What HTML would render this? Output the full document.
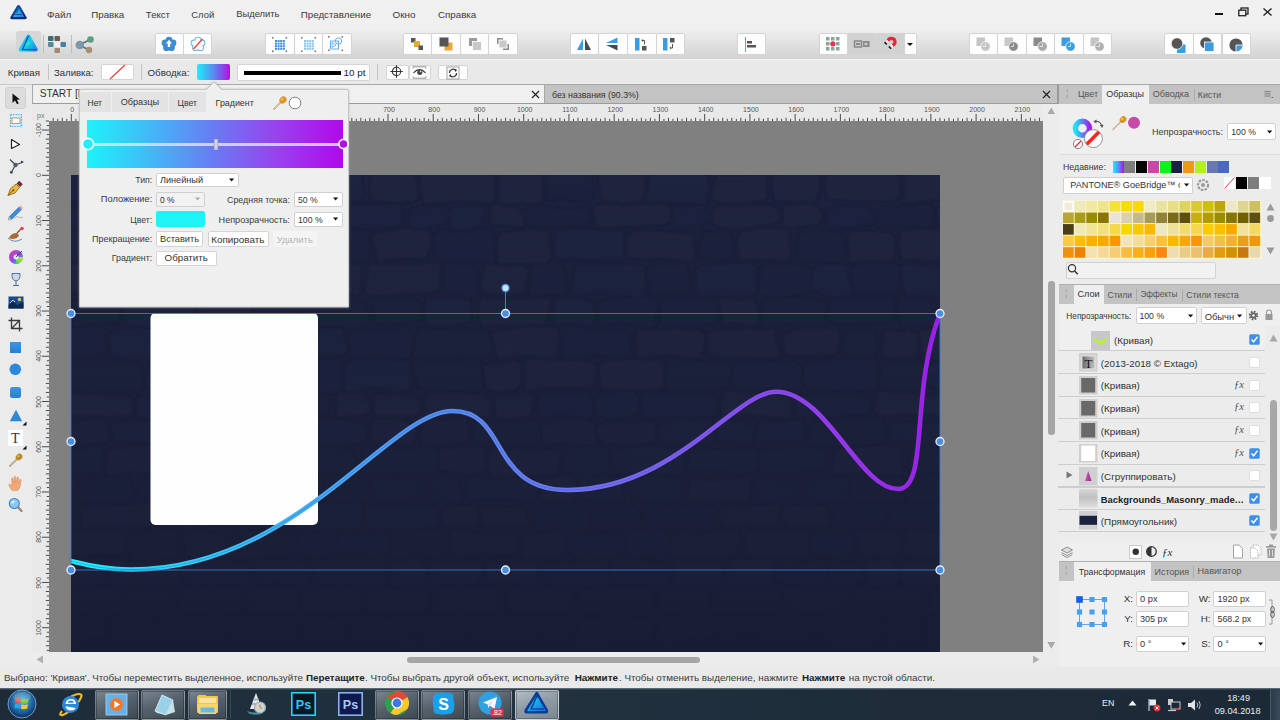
<!DOCTYPE html>
<html><head><meta charset="utf-8">
<style>
*{box-sizing:border-box;margin:0;padding:0}
html,body{width:1280px;height:720px;overflow:hidden;background:#ececec;font-family:"Liberation Sans",sans-serif;color:#333;font-size:9.8px}
body{position:relative}
.a{position:absolute}
svg.a{overflow:visible}
.t{position:absolute;white-space:nowrap;line-height:1}
.btn{position:absolute;background:#fcfcfc;border:1px solid #d4d4d4;border-radius:2px}
</style></head><body>
<div class="a" style="left:0px;top:0px;width:1280px;height:30px;background:#f0f0f0"></div>
<svg class="a" style="left:9px;top:4px;" width="19" height="17" viewBox="0 0 19 17"><defs><linearGradient id="lg0" x1="0" y1="0" x2="0" y2="1"><stop offset="0" stop-color="#1a4fa8"/><stop offset="1" stop-color="#0a2a78"/></linearGradient>
<linearGradient id="lg1" x1="0" y1="0" x2="1" y2="1"><stop offset="0" stop-color="#17d4e8"/><stop offset="1" stop-color="#2a7ee0"/></linearGradient></defs>
<path d="M8.2,1.5 Q9.5,0.5 10.8,1.6 L17.6,13.2 Q18.2,15 16.3,15.2 L2.7,15.2 Q0.8,15 1.4,13.2 Z" fill="url(#lg0)"/>
<path d="M9.5,4 L15.2,13 L3.8,13 Z" fill="url(#lg1)"/>
<path d="M9.6,5 L7.5,9 M5.5,10.5 L13,10.5" stroke="#0d3a8a" stroke-width="0.8"/></svg>
<div class="t" style="left:47.0px;top:9.6px;font-size:9.9px;color:#3a3a3a;">Файл</div>
<div class="t" style="left:91.2px;top:9.7px;font-size:9.77px;color:#3a3a3a;">Правка</div>
<div class="t" style="left:145.8px;top:9.8px;font-size:9.63px;color:#3a3a3a;">Текст</div>
<div class="t" style="left:191.2px;top:10.0px;font-size:9.46px;color:#3a3a3a;">Слой</div>
<div class="t" style="left:236.2px;top:10.1px;font-size:9.38px;color:#3a3a3a;">Выделить</div>
<div class="t" style="left:300.8px;top:9.7px;font-size:9.75px;color:#3a3a3a;">Представление</div>
<div class="t" style="left:392.5px;top:9.6px;font-size:9.9px;color:#3a3a3a;">Окно</div>
<div class="t" style="left:438.0px;top:9.7px;font-size:9.75px;color:#3a3a3a;">Справка</div>
<div class="a" style="left:1215px;top:13px;width:8px;height:2px;background:#111"></div>
<svg class="a" style="left:1238px;top:7px;" width="11" height="10" viewBox="0 0 11 10"><rect x="3" y="1" width="7" height="6" fill="none" stroke="#222" stroke-width="1.3"/><rect x="0.8" y="3.2" width="7" height="5.5" fill="#f0f0f0" stroke="#222" stroke-width="1.3"/></svg>
<svg class="a" style="left:1263px;top:8px;" width="9" height="8" viewBox="0 0 9 8"><path d="M0.5,0.5 L8.5,7.5 M8.5,0.5 L0.5,7.5" stroke="#222" stroke-width="1.4"/></svg>
<div class="a" style="left:0px;top:30px;width:1280px;height:29px;background:linear-gradient(#eeeeee,#e6e6e6 30%,#dadada 70%,#d2d2d2)"></div>
<div class="a" style="left:16px;top:31px;width:25px;height:25px;background:#d6d6d6;border-radius:3px"></div>
<svg class="a" style="left:18px;top:34px;" width="21" height="19" viewBox="0 0 21 19"><defs><linearGradient id="pg1" x1="0" y1="0" x2="1" y2="1"><stop offset="0" stop-color="#2a8ff0"/><stop offset="0.5" stop-color="#18d0f0"/><stop offset="1" stop-color="#1a70e0"/></linearGradient></defs>
<path d="M9,1 Q10.5,0 12,1.2 L19.5,14.5 Q20.5,17.5 17.5,17.5 L3,17.5 Q0,17.5 1.2,14.5 Z" fill="url(#pg1)"/>
<path d="M10.5,2 L4.5,15.5 L18,15.5" fill="none" stroke="#0b4aa0" stroke-width="1.1"/>
<path d="M7,11 L11,7 L11.5,11 Z" fill="#3af0a0" opacity="0.8"/></svg>
<div class="a" style="left:43px;top:35px;width:1px;height:18px;background:#bdbdbd"></div>
<svg class="a" style="left:47px;top:35px;" width="20" height="18" viewBox="0 0 20 18"><rect x="1" y="1" width="5.5" height="5" fill="#3f6b78" rx="1"/><rect x="7.5" y="1" width="5.5" height="5" fill="#6b5a52" rx="1"/>
<rect x="1" y="7" width="5.5" height="5" fill="#5a8898" rx="1"/><rect x="7.5" y="7" width="5.5" height="5" fill="#f4eef4"/><rect x="13.5" y="7" width="5.5" height="5" fill="#4a7ea6" rx="1"/>
<rect x="7.5" y="13" width="5.5" height="5" fill="#a08a70" rx="1"/></svg>
<div class="a" style="left:71px;top:35px;width:1px;height:18px;background:#bdbdbd"></div>
<svg class="a" style="left:75px;top:35px;" width="20" height="19" viewBox="0 0 20 19"><path d="M4,10 L15.5,4.5 M4,10 L14,15" stroke="#5a6a70" stroke-width="1.6"/>
<circle cx="4.8" cy="10" r="4.3" fill="#7b98ae"/><circle cx="15.5" cy="4.5" r="3.3" fill="#5b9d86"/><circle cx="14" cy="15" r="3.2" fill="#a8906e"/></svg>
<div class="btn" style="left:155.0px;top:33px;width:29.2px;height:22px;background:#fdfdfd"></div>
<div class="btn" style="left:183.2px;top:33px;width:29.2px;height:22px;background:#fdfdfd"></div>
<svg class="a" style="left:160px;top:35px;" width="18" height="18" viewBox="0 0 18 18"><circle cx="9" cy="9.3" r="4.5" fill="#3d8bd0"/><circle cx="9.00" cy="5.10" r="3.4" fill="#3d8bd0"/><circle cx="12.99" cy="8.00" r="3.4" fill="#3d8bd0"/><circle cx="11.47" cy="12.70" r="3.4" fill="#3d8bd0"/><circle cx="6.53" cy="12.70" r="3.4" fill="#3d8bd0"/><circle cx="5.01" cy="8.00" r="3.4" fill="#3d8bd0"/><path d="M9,4.8 L12,8.5 L10.2,8.5 L10.2,12 L7.8,12 L7.8,8.5 L6,8.5 Z" fill="#fff"/></svg>
<svg class="a" style="left:188.5px;top:35px;" width="18" height="18" viewBox="0 0 18 18"><circle cx="9" cy="9.3" r="4.5" fill="#5aaae0"/><circle cx="9.00" cy="5.10" r="3.4" fill="#5aaae0"/><circle cx="12.99" cy="8.00" r="3.4" fill="#5aaae0"/><circle cx="11.47" cy="12.70" r="3.4" fill="#5aaae0"/><circle cx="6.53" cy="12.70" r="3.4" fill="#5aaae0"/><circle cx="5.01" cy="8.00" r="3.4" fill="#5aaae0"/><circle cx="9" cy="9.3" r="4.5" fill="#fdfdfd"/><circle cx="9.00" cy="5.10" r="2.5" fill="#fdfdfd"/><circle cx="12.99" cy="8.00" r="2.5" fill="#fdfdfd"/><circle cx="11.47" cy="12.70" r="2.5" fill="#fdfdfd"/><circle cx="6.53" cy="12.70" r="2.5" fill="#fdfdfd"/><circle cx="5.01" cy="8.00" r="2.5" fill="#fdfdfd"/><path d="M4.5,14 L13.5,4" stroke="#e8403a" stroke-width="1.3"/></svg>
<div class="btn" style="left:265.0px;top:33px;width:29.5px;height:22px;background:#fdfdfd"></div>
<div class="btn" style="left:293.5px;top:33px;width:29.5px;height:22px;background:#fdfdfd"></div>
<div class="btn" style="left:322.0px;top:33px;width:29.5px;height:22px;background:#fdfdfd"></div>
<svg class="a" style="left:271.0px;top:35.5px;" width="17" height="17" viewBox="0 0 17 17"><rect x="4.0" y="4.0" width="2" height="2" fill="#3d8ee0"/><rect x="4.0" y="6.6" width="2" height="2" fill="#3d8ee0"/><rect x="4.0" y="9.2" width="2" height="2" fill="#3d8ee0"/><rect x="4.0" y="11.8" width="2" height="2" fill="#3d8ee0"/><rect x="6.6" y="4.0" width="2" height="2" fill="#3d8ee0"/><rect x="6.6" y="6.6" width="2" height="2" fill="#3d8ee0"/><rect x="6.6" y="9.2" width="2" height="2" fill="#3d8ee0"/><rect x="6.6" y="11.8" width="2" height="2" fill="#3d8ee0"/><rect x="9.2" y="4.0" width="2" height="2" fill="#3d8ee0"/><rect x="9.2" y="6.6" width="2" height="2" fill="#3d8ee0"/><rect x="9.2" y="9.2" width="2" height="2" fill="#3d8ee0"/><rect x="9.2" y="11.8" width="2" height="2" fill="#3d8ee0"/><rect x="11.8" y="4.0" width="2" height="2" fill="#3d8ee0"/><rect x="11.8" y="6.6" width="2" height="2" fill="#3d8ee0"/><rect x="11.8" y="9.2" width="2" height="2" fill="#3d8ee0"/><rect x="11.8" y="11.8" width="2" height="2" fill="#3d8ee0"/><rect x="1" y="1" width="1.6" height="1.6" fill="#777"/><rect x="14.5" y="1" width="1.6" height="1.6" fill="#777"/><rect x="1" y="14.5" width="1.6" height="1.6" fill="#777"/><rect x="14.5" y="14.5" width="1.6" height="1.6" fill="#777"/></svg>
<svg class="a" style="left:299.5px;top:35.5px;" width="17" height="17" viewBox="0 0 17 17"><rect x="4.0" y="4.0" width="2" height="2" fill="#8cc4f0"/><rect x="4.0" y="6.6" width="2" height="2" fill="#8cc4f0"/><rect x="4.0" y="9.2" width="2" height="2" fill="#8cc4f0"/><rect x="4.0" y="11.8" width="2" height="2" fill="#8cc4f0"/><rect x="6.6" y="4.0" width="2" height="2" fill="#8cc4f0"/><rect x="6.6" y="6.6" width="2" height="2" fill="#8cc4f0"/><rect x="6.6" y="9.2" width="2" height="2" fill="#8cc4f0"/><rect x="6.6" y="11.8" width="2" height="2" fill="#8cc4f0"/><rect x="9.2" y="4.0" width="2" height="2" fill="#8cc4f0"/><rect x="9.2" y="6.6" width="2" height="2" fill="#8cc4f0"/><rect x="9.2" y="9.2" width="2" height="2" fill="#8cc4f0"/><rect x="9.2" y="11.8" width="2" height="2" fill="#8cc4f0"/><rect x="11.8" y="4.0" width="2" height="2" fill="#8cc4f0"/><rect x="11.8" y="6.6" width="2" height="2" fill="#8cc4f0"/><rect x="11.8" y="9.2" width="2" height="2" fill="#8cc4f0"/><rect x="11.8" y="11.8" width="2" height="2" fill="#8cc4f0"/><rect x="1" y="1" width="1.6" height="1.6" fill="#777"/><rect x="14.5" y="1" width="1.6" height="1.6" fill="#777"/><rect x="1" y="14.5" width="1.6" height="1.6" fill="#777"/><rect x="14.5" y="14.5" width="1.6" height="1.6" fill="#777"/></svg>
<svg class="a" style="left:327px;top:35px;" width="18" height="18" viewBox="0 0 18 18"><rect x="1" y="1" width="1.6" height="1.6" fill="#777"/><rect x="14.5" y="1" width="1.6" height="1.6" fill="#777"/><rect x="1" y="14.5" width="1.6" height="1.6" fill="#777"/><rect x="14.5" y="14.5" width="1.6" height="1.6" fill="#777"/>
<rect x="3.5" y="6" width="8" height="8" fill="none" stroke="#6aaee8" stroke-width="1"/><circle cx="11.5" cy="6" r="3.2" fill="none" stroke="#6aaee8" stroke-width="1"/><path d="M5,7.5 L9,10 L5,12.5 Z" fill="none" stroke="#6aaee8" stroke-width="0.9"/></svg>
<div class="btn" style="left:402.6px;top:33px;width:29.6px;height:22px;background:#fdfdfd"></div>
<div class="btn" style="left:431.2px;top:33px;width:29.6px;height:22px;background:#fdfdfd"></div>
<div class="btn" style="left:459.8px;top:33px;width:29.6px;height:22px;background:#fdfdfd"></div>
<div class="btn" style="left:488.4px;top:33px;width:29.6px;height:22px;background:#fdfdfd"></div>
<svg class="a" style="left:408px;top:35px;" width="18" height="18" viewBox="0 0 18 18"><rect x="3" y="3" width="4.5" height="4.5" fill="#555"/><rect x="6" y="6" width="6" height="6" fill="#e8a838"/><rect x="10.5" y="10.5" width="4.5" height="4.5" fill="#555"/></svg>
<svg class="a" style="left:437px;top:35px;" width="18" height="18" viewBox="0 0 18 18"><rect x="7.5" y="7.5" width="8" height="8" fill="#e8a838"/><rect x="2.5" y="2.5" width="9" height="9" fill="#555"/></svg>
<svg class="a" style="left:466px;top:35px;" width="18" height="18" viewBox="0 0 18 18"><rect x="3" y="3" width="8" height="8" fill="#9a9a9a"/><rect x="6.5" y="6.5" width="9" height="9" fill="#c8c8c8" stroke="#fff" stroke-width="0.8"/></svg>
<svg class="a" style="left:494px;top:35px;" width="18" height="18" viewBox="0 0 18 18"><path d="M3,3 L9,3 L9,4.5 L4.5,4.5 L4.5,9 L3,9 Z" fill="#8a8a8a"/><path d="M15,15 L9,15 L9,13.5 L13.5,13.5 L13.5,9 L15,9 Z" fill="#8a8a8a"/><rect x="5.5" y="5.5" width="7" height="7" fill="#c8c8c8"/></svg>
<div class="btn" style="left:569.6px;top:33px;width:29.7px;height:22px;background:#fdfdfd"></div>
<div class="btn" style="left:598.3px;top:33px;width:29.7px;height:22px;background:#fdfdfd"></div>
<div class="btn" style="left:627.0px;top:33px;width:29.7px;height:22px;background:#fdfdfd"></div>
<div class="btn" style="left:655.6px;top:33px;width:29.7px;height:22px;background:#fdfdfd"></div>
<svg class="a" style="left:575px;top:35px;" width="18" height="18" viewBox="0 0 18 18"><path d="M8,3.5 L8,15 L2,15 Z" fill="#3d9be0"/><path d="M10,3.5 L10,15 L16,15 Z" fill="#4a4a4a"/></svg>
<svg class="a" style="left:603px;top:35px;" width="18" height="18" viewBox="0 0 18 18"><path d="M14.5,2.5 L14.5,8 L3,8 Z" fill="#3d9be0"/><path d="M14.5,15.5 L14.5,10 L3,10 Z" fill="#4a4a4a"/></svg>
<svg class="a" style="left:632px;top:35px;" width="18" height="18" viewBox="0 0 18 18"><rect x="3" y="3" width="4.5" height="12.5" fill="#3d9be0"/><rect x="10" y="11" width="4.5" height="4.5" fill="#555"/><path d="M12.5,9.5 L12.5,5.5 L10,5.5 M11,4.3 L9.8,5.5 L11,6.7" fill="none" stroke="#444" stroke-width="0.9"/></svg>
<svg class="a" style="left:660px;top:35px;" width="18" height="18" viewBox="0 0 18 18"><rect x="3" y="3" width="4.5" height="12.5" fill="#3d9be0"/><rect x="10" y="3" width="4.5" height="4.5" fill="#555"/><path d="M12.5,9 L12.5,13 L10,13 M11,11.8 L9.8,13 L11,14.2" fill="none" stroke="#444" stroke-width="0.9"/></svg>
<div class="btn" style="left:736.7px;top:33px;width:29.6px;height:22px;background:#fdfdfd"></div>
<svg class="a" style="left:742px;top:35px;" width="18" height="18" viewBox="0 0 18 18"><rect x="3" y="2" width="1" height="15" fill="#5aa8e8"/><rect x="5" y="6" width="5" height="2.5" fill="#555"/><rect x="5" y="10" width="9" height="2.5" fill="#555"/></svg>
<div class="btn" style="left:818.7px;top:33px;width:29.7px;height:22px;background:#fdfdfd"></div>
<div class="btn" style="left:847.4px;top:33px;width:29.7px;height:22px;background:#d2d2d2"></div>
<div class="btn" style="left:876.1px;top:33px;width:29.7px;height:22px;background:#d2d2d2"></div>
<div class="btn" style="left:904px;top:33px;width:12.5px;height:22px"></div>
<svg class="a" style="left:906px;top:42px;" width="8" height="5" viewBox="0 0 8 5"><path d="M1,1 L7,1 L4,4 Z" fill="#111"/></svg>
<svg class="a" style="left:824px;top:35px;" width="18" height="18" viewBox="0 0 18 18"><rect x="2" y="2" width="3.5" height="3.5" fill="#8aa898"/><rect x="2" y="7" width="3.5" height="3.5" fill="#8aa898"/><rect x="2" y="12" width="3.5" height="3.5" fill="#8aa898"/><rect x="7" y="2" width="3.5" height="3.5" fill="#8aa898"/><rect x="7" y="7" width="3.5" height="3.5" fill="#8aa898"/><rect x="7" y="12" width="3.5" height="3.5" fill="#8aa898"/><rect x="12" y="2" width="3.5" height="3.5" fill="#8aa898"/><rect x="12" y="7" width="3.5" height="3.5" fill="#8aa898"/><rect x="12" y="12" width="3.5" height="3.5" fill="#8aa898"/><circle cx="8.8" cy="8.8" r="2.6" fill="#e8305a"/></svg>
<svg class="a" style="left:853px;top:35px;" width="18" height="18" viewBox="0 0 18 18"><rect x="1.5" y="6" width="7" height="6" fill="none" stroke="#888" stroke-width="1.5"/><rect x="10" y="6" width="6.5" height="6" fill="#888"/><rect x="3" y="8" width="4" height="2" fill="#888"/><rect x="11.5" y="7.8" width="3" height="2.4" fill="#ccc"/></svg>
<svg class="a" style="left:881px;top:35px;" width="18" height="18" viewBox="0 0 18 18"><path d="M11.2,10.4 A3.6,3.6 0 1 0 6.9,6.1" stroke="#e02a3a" stroke-width="3.2" fill="none"/><path d="M11.4,10.2 L9.6,12 M7.1,5.9 L5.3,7.7" stroke="#f0f0f0" stroke-width="3.2"/><path d="M9.6,12 L8.4,13.2 M5.3,7.7 L4.1,8.9" stroke="#222" stroke-width="3.2"/></svg>
<div class="btn" style="left:968.5px;top:33px;width:29.5px;height:22px;background:#fdfdfd"></div>
<div class="btn" style="left:997.0px;top:33px;width:29.5px;height:22px;background:#fdfdfd"></div>
<div class="btn" style="left:1025.5px;top:33px;width:29.5px;height:22px;background:#fdfdfd"></div>
<div class="btn" style="left:1054.0px;top:33px;width:29.5px;height:22px;background:#fdfdfd"></div>
<div class="btn" style="left:1082.5px;top:33px;width:29.5px;height:22px;background:#fdfdfd"></div>
<svg class="a" style="left:973.5px;top:35px;" width="18" height="18" viewBox="0 0 18 18"><rect x="2.5" y="2.5" width="8.5" height="8.5" fill="#c4c4c4"/><circle cx="11.5" cy="11.5" r="4.8" fill="#c4c4c4" stroke="#fff" stroke-width="0.8"/><path d="M11.5,8.5 L11.5,11.5 L8.8,11.5" stroke="#fff" stroke-width="0.7" fill="none"/></svg>
<svg class="a" style="left:1002.0px;top:35px;" width="18" height="18" viewBox="0 0 18 18"><rect x="2.5" y="2.5" width="8.5" height="8.5" fill="#c8c8c8"/><circle cx="11.5" cy="11.5" r="4.8" fill="#8a8a8a" stroke="#fff" stroke-width="0.8"/><path d="M11.5,8.5 L11.5,11.5 L8.8,11.5" stroke="#fff" stroke-width="0.7" fill="none"/></svg>
<svg class="a" style="left:1030.5px;top:35px;" width="18" height="18" viewBox="0 0 18 18"><rect x="2.5" y="2.5" width="8.5" height="8.5" fill="#8a8a8a"/><circle cx="11.5" cy="11.5" r="4.8" fill="#a8a8a8" stroke="#fff" stroke-width="0.8"/><path d="M11.5,8.5 L11.5,11.5 L8.8,11.5" stroke="#fff" stroke-width="0.7" fill="none"/></svg>
<svg class="a" style="left:1059.0px;top:35px;" width="18" height="18" viewBox="0 0 18 18"><rect x="2.5" y="2.5" width="8.5" height="8.5" fill="#3d9be0"/><circle cx="11.5" cy="11.5" r="4.8" fill="#3d9be0" stroke="#fff" stroke-width="0.8"/><path d="M11.5,8.5 L11.5,11.5 L8.8,11.5" stroke="#fff" stroke-width="0.7" fill="none"/></svg>
<svg class="a" style="left:1087.5px;top:35px;" width="18" height="18" viewBox="0 0 18 18"><rect x="2.5" y="2.5" width="8.5" height="8.5" fill="#c4c4c4"/><circle cx="11.5" cy="11.5" r="4.8" fill="#b0b0b0" stroke="#fff" stroke-width="0.8"/><path d="M11.5,8.5 L11.5,11.5 L8.8,11.5" stroke="#fff" stroke-width="0.7" fill="none"/></svg>
<div class="btn" style="left:1164.4px;top:33px;width:29.5px;height:22px;background:#fdfdfd"></div>
<div class="btn" style="left:1192.9px;top:33px;width:29.5px;height:22px;background:#fdfdfd"></div>
<div class="btn" style="left:1221.5px;top:33px;width:29.5px;height:22px;background:#fdfdfd"></div>
<svg class="a" style="left:1169px;top:35px;" width="20" height="20" viewBox="0 0 20 20"><rect x="8" y="9.5" width="8.5" height="8.5" fill="#3d9be0"/><circle cx="8" cy="8.5" r="5.8" fill="#555" stroke="#fff" stroke-width="0.8"/></svg>
<svg class="a" style="left:1198px;top:35px;" width="20" height="20" viewBox="0 0 20 20"><circle cx="8" cy="8" r="5.8" fill="#555"/><rect x="6.5" y="7" width="9.5" height="9.5" fill="#3d9be0" stroke="#fff" stroke-width="0.8"/></svg>
<svg class="a" style="left:1227px;top:35px;" width="20" height="20" viewBox="0 0 20 20"><circle cx="9" cy="10" r="6.6" fill="#555"/><path d="M9,10 L16,10 A6.8,6.8 0 0 1 9,16.8 Z" fill="#3d9be0" stroke="#fff" stroke-width="0.8"/></svg>
<div class="a" style="left:0px;top:59px;width:1280px;height:26px;background:#e9e9e9;border-top:1px solid #f2f2f2"></div>
<div class="a" style="left:0px;top:84px;width:1280px;height:1px;background:#c8c8c8"></div>
<div class="t" style="left:7.8px;top:67.8px;font-size:9.73px;color:#333;">Кривая</div>
<div class="a" style="left:48px;top:64px;width:1px;height:16px;background:#c4c4c4"></div>
<div class="t" style="left:54.0px;top:67.9px;font-size:9.57px;color:#333;">Заливка:</div>
<div class="btn" style="left:101px;top:64px;width:33px;height:16px;background:#fff"></div>
<svg class="a" style="left:102px;top:65px;" width="31" height="14" viewBox="0 0 31 14"><path d="M8,14 L23,0" stroke="#e8403a" stroke-width="1.2"/></svg>
<div class="a" style="left:141px;top:64px;width:1px;height:16px;background:#c4c4c4"></div>
<div class="t" style="left:147.5px;top:67.7px;font-size:9.81px;color:#333;">Обводка:</div>
<div class="a" style="left:197px;top:64px;width:33px;height:16px;background:linear-gradient(90deg,#1cf0f8,#6080f0 55%,#b010e8);border-radius:2px"></div>
<div class="btn" style="left:237px;top:64px;width:133px;height:17px;background:#fff"></div>
<div class="a" style="left:244px;top:70.5px;width:97px;height:4px;background:#000"></div>
<div class="t" style="left:343.6px;top:68.1px;font-size:9.9px;color:#222;">10 pt</div>
<div class="a" style="left:377px;top:64px;width:1px;height:16px;background:#c4c4c4"></div>
<div class="btn" style="left:385.6px;top:64.5px;width:23.5px;height:15.5px"></div>
<div class="btn" style="left:408.6px;top:64.5px;width:22.5px;height:15.5px"></div>
<svg class="a" style="left:390px;top:65px;" width="14" height="14" viewBox="0 0 14 14"><circle cx="6.5" cy="6.5" r="4.2" fill="none" stroke="#333" stroke-width="1.05"/><path d="M6.5,0.3 L6.5,12.7 M0.3,6.5 L12.7,6.5" stroke="#333" stroke-width="1.05"/></svg>
<svg class="a" style="left:412px;top:65.5px;" width="15" height="14" viewBox="0 0 15 14"><path d="M1,2.5 L1,0.8 L14,0.8 L14,2.5 M1,10.5 L1,12.2 L14,12.2 L14,10.5" fill="none" stroke="#888" stroke-width="0.9"/><path d="M1.5,6.8 Q7.5,0.5 13.5,6.8" fill="none" stroke="#333" stroke-width="1.1"/><circle cx="7.8" cy="6.3" r="2.6" fill="#444"/><circle cx="8.6" cy="5.4" r="0.9" fill="#ddd"/></svg>
<div class="btn" style="left:437.9px;top:64.5px;width:30.5px;height:15.5px"></div>
<svg class="a" style="left:446px;top:66px;" width="14" height="14" viewBox="0 0 14 14"><rect x="1" y="1" width="12" height="12" fill="none" stroke="#999" stroke-width="0.9"/><path d="M3.5,7 A3.5,3.5 0 0 1 9.8,4.6" fill="none" stroke="#333" stroke-width="1.1"/><path d="M10.5,7 A3.5,3.5 0 0 1 4.2,9.4" fill="none" stroke="#333" stroke-width="1.1"/><path d="M8.3,2.8 L11,3.8 L9.6,6.2 Z M5.7,11.2 L3,10.2 L4.4,7.8 Z" fill="#333"/></svg>
<div class="a" style="left:32px;top:84px;width:1027px;height:20px;background:#c3c3c3;border-top:1px solid #a8a8a8;border-bottom:1px solid #9c9c9c"></div>
<div class="a" style="left:32px;top:84px;width:513px;height:20px;background:#f0f0f0;border:1px solid #a8a8a8;border-bottom:1px solid #9c9c9c"></div>
<div class="t" style="left:39.8px;top:89.4px;font-size:10.2px;color:#333;">START [И:</div>
<svg class="a" style="left:531px;top:90px;" width="9" height="9" viewBox="0 0 9 9"><path d="M1,1 L8,8 M8,1 L1,8" stroke="#222" stroke-width="1.15"/></svg>
<div class="t" style="left:552.0px;top:90.6px;font-size:8.77px;color:#333;">без названия (90.3%)</div>
<svg class="a" style="left:1042px;top:89.5px;" width="9" height="9" viewBox="0 0 9 9"><path d="M1,1 L8,8 M8,1 L1,8" stroke="#222" stroke-width="1.15"/></svg>
<div class="a" style="left:1057px;top:84px;width:2px;height:20px;background:#9a9a9a"></div>
<div class="a" style="left:32px;top:104px;width:1011px;height:17px;background:#e9e9e9"></div>
<div class="a" style="left:32px;top:121px;width:17px;height:531px;background:#e9e9e9"></div>
<div class="t" style="left:37.0px;top:111.6px;font-size:7px;color:#777;">px</div>
<svg class="a" style="left:49px;top:104px;" width="994" height="17" viewBox="0 0 994 17"><rect x="3.70" y="13.8" width="1" height="3.2" fill="#4a4a4a"/><rect x="8.23" y="14.8" width="1" height="2.2" fill="#4a4a4a"/><rect x="12.75" y="13.8" width="1" height="3.2" fill="#4a4a4a"/><rect x="17.28" y="14.8" width="1" height="2.2" fill="#4a4a4a"/><rect x="21.80" y="10.0" width="1" height="7" fill="#4a4a4a"/><rect x="26.32" y="14.8" width="1" height="2.2" fill="#4a4a4a"/><rect x="30.85" y="13.8" width="1" height="3.2" fill="#4a4a4a"/><rect x="35.37" y="14.8" width="1" height="2.2" fill="#4a4a4a"/><rect x="39.90" y="13.8" width="1" height="3.2" fill="#4a4a4a"/><rect x="44.42" y="14.8" width="1" height="2.2" fill="#4a4a4a"/><rect x="48.94" y="13.8" width="1" height="3.2" fill="#4a4a4a"/><rect x="53.47" y="14.8" width="1" height="2.2" fill="#4a4a4a"/><rect x="57.99" y="13.8" width="1" height="3.2" fill="#4a4a4a"/><rect x="62.52" y="14.8" width="1" height="2.2" fill="#4a4a4a"/><rect x="67.04" y="10.0" width="1" height="7" fill="#4a4a4a"/><rect x="71.56" y="14.8" width="1" height="2.2" fill="#4a4a4a"/><rect x="76.09" y="13.8" width="1" height="3.2" fill="#4a4a4a"/><rect x="80.61" y="14.8" width="1" height="2.2" fill="#4a4a4a"/><rect x="85.14" y="13.8" width="1" height="3.2" fill="#4a4a4a"/><rect x="89.66" y="14.8" width="1" height="2.2" fill="#4a4a4a"/><rect x="94.18" y="13.8" width="1" height="3.2" fill="#4a4a4a"/><rect x="98.71" y="14.8" width="1" height="2.2" fill="#4a4a4a"/><rect x="103.23" y="13.8" width="1" height="3.2" fill="#4a4a4a"/><rect x="107.76" y="14.8" width="1" height="2.2" fill="#4a4a4a"/><rect x="112.28" y="10.0" width="1" height="7" fill="#4a4a4a"/><rect x="116.80" y="14.8" width="1" height="2.2" fill="#4a4a4a"/><rect x="121.33" y="13.8" width="1" height="3.2" fill="#4a4a4a"/><rect x="125.85" y="14.8" width="1" height="2.2" fill="#4a4a4a"/><rect x="130.38" y="13.8" width="1" height="3.2" fill="#4a4a4a"/><rect x="134.90" y="14.8" width="1" height="2.2" fill="#4a4a4a"/><rect x="139.42" y="13.8" width="1" height="3.2" fill="#4a4a4a"/><rect x="143.95" y="14.8" width="1" height="2.2" fill="#4a4a4a"/><rect x="148.47" y="13.8" width="1" height="3.2" fill="#4a4a4a"/><rect x="153.00" y="14.8" width="1" height="2.2" fill="#4a4a4a"/><rect x="157.52" y="10.0" width="1" height="7" fill="#4a4a4a"/><rect x="162.04" y="14.8" width="1" height="2.2" fill="#4a4a4a"/><rect x="166.57" y="13.8" width="1" height="3.2" fill="#4a4a4a"/><rect x="171.09" y="14.8" width="1" height="2.2" fill="#4a4a4a"/><rect x="175.62" y="13.8" width="1" height="3.2" fill="#4a4a4a"/><rect x="180.14" y="14.8" width="1" height="2.2" fill="#4a4a4a"/><rect x="184.66" y="13.8" width="1" height="3.2" fill="#4a4a4a"/><rect x="189.19" y="14.8" width="1" height="2.2" fill="#4a4a4a"/><rect x="193.71" y="13.8" width="1" height="3.2" fill="#4a4a4a"/><rect x="198.24" y="14.8" width="1" height="2.2" fill="#4a4a4a"/><rect x="202.76" y="10.0" width="1" height="7" fill="#4a4a4a"/><rect x="207.28" y="14.8" width="1" height="2.2" fill="#4a4a4a"/><rect x="211.81" y="13.8" width="1" height="3.2" fill="#4a4a4a"/><rect x="216.33" y="14.8" width="1" height="2.2" fill="#4a4a4a"/><rect x="220.86" y="13.8" width="1" height="3.2" fill="#4a4a4a"/><rect x="225.38" y="14.8" width="1" height="2.2" fill="#4a4a4a"/><rect x="229.90" y="13.8" width="1" height="3.2" fill="#4a4a4a"/><rect x="234.43" y="14.8" width="1" height="2.2" fill="#4a4a4a"/><rect x="238.95" y="13.8" width="1" height="3.2" fill="#4a4a4a"/><rect x="243.48" y="14.8" width="1" height="2.2" fill="#4a4a4a"/><rect x="248.00" y="10.0" width="1" height="7" fill="#4a4a4a"/><rect x="252.52" y="14.8" width="1" height="2.2" fill="#4a4a4a"/><rect x="257.05" y="13.8" width="1" height="3.2" fill="#4a4a4a"/><rect x="261.57" y="14.8" width="1" height="2.2" fill="#4a4a4a"/><rect x="266.10" y="13.8" width="1" height="3.2" fill="#4a4a4a"/><rect x="270.62" y="14.8" width="1" height="2.2" fill="#4a4a4a"/><rect x="275.14" y="13.8" width="1" height="3.2" fill="#4a4a4a"/><rect x="279.67" y="14.8" width="1" height="2.2" fill="#4a4a4a"/><rect x="284.19" y="13.8" width="1" height="3.2" fill="#4a4a4a"/><rect x="288.72" y="14.8" width="1" height="2.2" fill="#4a4a4a"/><rect x="293.24" y="10.0" width="1" height="7" fill="#4a4a4a"/><rect x="297.76" y="14.8" width="1" height="2.2" fill="#4a4a4a"/><rect x="302.29" y="13.8" width="1" height="3.2" fill="#4a4a4a"/><rect x="306.81" y="14.8" width="1" height="2.2" fill="#4a4a4a"/><rect x="311.34" y="13.8" width="1" height="3.2" fill="#4a4a4a"/><rect x="315.86" y="14.8" width="1" height="2.2" fill="#4a4a4a"/><rect x="320.38" y="13.8" width="1" height="3.2" fill="#4a4a4a"/><rect x="324.91" y="14.8" width="1" height="2.2" fill="#4a4a4a"/><rect x="329.43" y="13.8" width="1" height="3.2" fill="#4a4a4a"/><rect x="333.96" y="14.8" width="1" height="2.2" fill="#4a4a4a"/><rect x="338.48" y="10.0" width="1" height="7" fill="#4a4a4a"/><rect x="343.00" y="14.8" width="1" height="2.2" fill="#4a4a4a"/><rect x="347.53" y="13.8" width="1" height="3.2" fill="#4a4a4a"/><rect x="352.05" y="14.8" width="1" height="2.2" fill="#4a4a4a"/><rect x="356.58" y="13.8" width="1" height="3.2" fill="#4a4a4a"/><rect x="361.10" y="14.8" width="1" height="2.2" fill="#4a4a4a"/><rect x="365.62" y="13.8" width="1" height="3.2" fill="#4a4a4a"/><rect x="370.15" y="14.8" width="1" height="2.2" fill="#4a4a4a"/><rect x="374.67" y="13.8" width="1" height="3.2" fill="#4a4a4a"/><rect x="379.20" y="14.8" width="1" height="2.2" fill="#4a4a4a"/><rect x="383.72" y="10.0" width="1" height="7" fill="#4a4a4a"/><rect x="388.24" y="14.8" width="1" height="2.2" fill="#4a4a4a"/><rect x="392.77" y="13.8" width="1" height="3.2" fill="#4a4a4a"/><rect x="397.29" y="14.8" width="1" height="2.2" fill="#4a4a4a"/><rect x="401.82" y="13.8" width="1" height="3.2" fill="#4a4a4a"/><rect x="406.34" y="14.8" width="1" height="2.2" fill="#4a4a4a"/><rect x="410.86" y="13.8" width="1" height="3.2" fill="#4a4a4a"/><rect x="415.39" y="14.8" width="1" height="2.2" fill="#4a4a4a"/><rect x="419.91" y="13.8" width="1" height="3.2" fill="#4a4a4a"/><rect x="424.44" y="14.8" width="1" height="2.2" fill="#4a4a4a"/><rect x="428.96" y="10.0" width="1" height="7" fill="#4a4a4a"/><rect x="433.48" y="14.8" width="1" height="2.2" fill="#4a4a4a"/><rect x="438.01" y="13.8" width="1" height="3.2" fill="#4a4a4a"/><rect x="442.53" y="14.8" width="1" height="2.2" fill="#4a4a4a"/><rect x="447.06" y="13.8" width="1" height="3.2" fill="#4a4a4a"/><rect x="451.58" y="14.8" width="1" height="2.2" fill="#4a4a4a"/><rect x="456.10" y="13.8" width="1" height="3.2" fill="#4a4a4a"/><rect x="460.63" y="14.8" width="1" height="2.2" fill="#4a4a4a"/><rect x="465.15" y="13.8" width="1" height="3.2" fill="#4a4a4a"/><rect x="469.68" y="14.8" width="1" height="2.2" fill="#4a4a4a"/><rect x="474.20" y="10.0" width="1" height="7" fill="#4a4a4a"/><rect x="478.72" y="14.8" width="1" height="2.2" fill="#4a4a4a"/><rect x="483.25" y="13.8" width="1" height="3.2" fill="#4a4a4a"/><rect x="487.77" y="14.8" width="1" height="2.2" fill="#4a4a4a"/><rect x="492.30" y="13.8" width="1" height="3.2" fill="#4a4a4a"/><rect x="496.82" y="14.8" width="1" height="2.2" fill="#4a4a4a"/><rect x="501.34" y="13.8" width="1" height="3.2" fill="#4a4a4a"/><rect x="505.87" y="14.8" width="1" height="2.2" fill="#4a4a4a"/><rect x="510.39" y="13.8" width="1" height="3.2" fill="#4a4a4a"/><rect x="514.92" y="14.8" width="1" height="2.2" fill="#4a4a4a"/><rect x="519.44" y="10.0" width="1" height="7" fill="#4a4a4a"/><rect x="523.96" y="14.8" width="1" height="2.2" fill="#4a4a4a"/><rect x="528.49" y="13.8" width="1" height="3.2" fill="#4a4a4a"/><rect x="533.01" y="14.8" width="1" height="2.2" fill="#4a4a4a"/><rect x="537.54" y="13.8" width="1" height="3.2" fill="#4a4a4a"/><rect x="542.06" y="14.8" width="1" height="2.2" fill="#4a4a4a"/><rect x="546.58" y="13.8" width="1" height="3.2" fill="#4a4a4a"/><rect x="551.11" y="14.8" width="1" height="2.2" fill="#4a4a4a"/><rect x="555.63" y="13.8" width="1" height="3.2" fill="#4a4a4a"/><rect x="560.16" y="14.8" width="1" height="2.2" fill="#4a4a4a"/><rect x="564.68" y="10.0" width="1" height="7" fill="#4a4a4a"/><rect x="569.20" y="14.8" width="1" height="2.2" fill="#4a4a4a"/><rect x="573.73" y="13.8" width="1" height="3.2" fill="#4a4a4a"/><rect x="578.25" y="14.8" width="1" height="2.2" fill="#4a4a4a"/><rect x="582.78" y="13.8" width="1" height="3.2" fill="#4a4a4a"/><rect x="587.30" y="14.8" width="1" height="2.2" fill="#4a4a4a"/><rect x="591.82" y="13.8" width="1" height="3.2" fill="#4a4a4a"/><rect x="596.35" y="14.8" width="1" height="2.2" fill="#4a4a4a"/><rect x="600.87" y="13.8" width="1" height="3.2" fill="#4a4a4a"/><rect x="605.40" y="14.8" width="1" height="2.2" fill="#4a4a4a"/><rect x="609.92" y="10.0" width="1" height="7" fill="#4a4a4a"/><rect x="614.44" y="14.8" width="1" height="2.2" fill="#4a4a4a"/><rect x="618.97" y="13.8" width="1" height="3.2" fill="#4a4a4a"/><rect x="623.49" y="14.8" width="1" height="2.2" fill="#4a4a4a"/><rect x="628.02" y="13.8" width="1" height="3.2" fill="#4a4a4a"/><rect x="632.54" y="14.8" width="1" height="2.2" fill="#4a4a4a"/><rect x="637.06" y="13.8" width="1" height="3.2" fill="#4a4a4a"/><rect x="641.59" y="14.8" width="1" height="2.2" fill="#4a4a4a"/><rect x="646.11" y="13.8" width="1" height="3.2" fill="#4a4a4a"/><rect x="650.64" y="14.8" width="1" height="2.2" fill="#4a4a4a"/><rect x="655.16" y="10.0" width="1" height="7" fill="#4a4a4a"/><rect x="659.68" y="14.8" width="1" height="2.2" fill="#4a4a4a"/><rect x="664.21" y="13.8" width="1" height="3.2" fill="#4a4a4a"/><rect x="668.73" y="14.8" width="1" height="2.2" fill="#4a4a4a"/><rect x="673.26" y="13.8" width="1" height="3.2" fill="#4a4a4a"/><rect x="677.78" y="14.8" width="1" height="2.2" fill="#4a4a4a"/><rect x="682.30" y="13.8" width="1" height="3.2" fill="#4a4a4a"/><rect x="686.83" y="14.8" width="1" height="2.2" fill="#4a4a4a"/><rect x="691.35" y="13.8" width="1" height="3.2" fill="#4a4a4a"/><rect x="695.88" y="14.8" width="1" height="2.2" fill="#4a4a4a"/><rect x="700.40" y="10.0" width="1" height="7" fill="#4a4a4a"/><rect x="704.92" y="14.8" width="1" height="2.2" fill="#4a4a4a"/><rect x="709.45" y="13.8" width="1" height="3.2" fill="#4a4a4a"/><rect x="713.97" y="14.8" width="1" height="2.2" fill="#4a4a4a"/><rect x="718.50" y="13.8" width="1" height="3.2" fill="#4a4a4a"/><rect x="723.02" y="14.8" width="1" height="2.2" fill="#4a4a4a"/><rect x="727.54" y="13.8" width="1" height="3.2" fill="#4a4a4a"/><rect x="732.07" y="14.8" width="1" height="2.2" fill="#4a4a4a"/><rect x="736.59" y="13.8" width="1" height="3.2" fill="#4a4a4a"/><rect x="741.12" y="14.8" width="1" height="2.2" fill="#4a4a4a"/><rect x="745.64" y="10.0" width="1" height="7" fill="#4a4a4a"/><rect x="750.16" y="14.8" width="1" height="2.2" fill="#4a4a4a"/><rect x="754.69" y="13.8" width="1" height="3.2" fill="#4a4a4a"/><rect x="759.21" y="14.8" width="1" height="2.2" fill="#4a4a4a"/><rect x="763.74" y="13.8" width="1" height="3.2" fill="#4a4a4a"/><rect x="768.26" y="14.8" width="1" height="2.2" fill="#4a4a4a"/><rect x="772.78" y="13.8" width="1" height="3.2" fill="#4a4a4a"/><rect x="777.31" y="14.8" width="1" height="2.2" fill="#4a4a4a"/><rect x="781.83" y="13.8" width="1" height="3.2" fill="#4a4a4a"/><rect x="786.36" y="14.8" width="1" height="2.2" fill="#4a4a4a"/><rect x="790.88" y="10.0" width="1" height="7" fill="#4a4a4a"/><rect x="795.40" y="14.8" width="1" height="2.2" fill="#4a4a4a"/><rect x="799.93" y="13.8" width="1" height="3.2" fill="#4a4a4a"/><rect x="804.45" y="14.8" width="1" height="2.2" fill="#4a4a4a"/><rect x="808.98" y="13.8" width="1" height="3.2" fill="#4a4a4a"/><rect x="813.50" y="14.8" width="1" height="2.2" fill="#4a4a4a"/><rect x="818.02" y="13.8" width="1" height="3.2" fill="#4a4a4a"/><rect x="822.55" y="14.8" width="1" height="2.2" fill="#4a4a4a"/><rect x="827.07" y="13.8" width="1" height="3.2" fill="#4a4a4a"/><rect x="831.60" y="14.8" width="1" height="2.2" fill="#4a4a4a"/><rect x="836.12" y="10.0" width="1" height="7" fill="#4a4a4a"/><rect x="840.64" y="14.8" width="1" height="2.2" fill="#4a4a4a"/><rect x="845.17" y="13.8" width="1" height="3.2" fill="#4a4a4a"/><rect x="849.69" y="14.8" width="1" height="2.2" fill="#4a4a4a"/><rect x="854.22" y="13.8" width="1" height="3.2" fill="#4a4a4a"/><rect x="858.74" y="14.8" width="1" height="2.2" fill="#4a4a4a"/><rect x="863.26" y="13.8" width="1" height="3.2" fill="#4a4a4a"/><rect x="867.79" y="14.8" width="1" height="2.2" fill="#4a4a4a"/><rect x="872.31" y="13.8" width="1" height="3.2" fill="#4a4a4a"/><rect x="876.84" y="14.8" width="1" height="2.2" fill="#4a4a4a"/><rect x="881.36" y="10.0" width="1" height="7" fill="#4a4a4a"/><rect x="885.88" y="14.8" width="1" height="2.2" fill="#4a4a4a"/><rect x="890.41" y="13.8" width="1" height="3.2" fill="#4a4a4a"/><rect x="894.93" y="14.8" width="1" height="2.2" fill="#4a4a4a"/><rect x="899.46" y="13.8" width="1" height="3.2" fill="#4a4a4a"/><rect x="903.98" y="14.8" width="1" height="2.2" fill="#4a4a4a"/><rect x="908.50" y="13.8" width="1" height="3.2" fill="#4a4a4a"/><rect x="913.03" y="14.8" width="1" height="2.2" fill="#4a4a4a"/><rect x="917.55" y="13.8" width="1" height="3.2" fill="#4a4a4a"/><rect x="922.08" y="14.8" width="1" height="2.2" fill="#4a4a4a"/><rect x="926.60" y="10.0" width="1" height="7" fill="#4a4a4a"/><rect x="931.12" y="14.8" width="1" height="2.2" fill="#4a4a4a"/><rect x="935.65" y="13.8" width="1" height="3.2" fill="#4a4a4a"/><rect x="940.17" y="14.8" width="1" height="2.2" fill="#4a4a4a"/><rect x="944.70" y="13.8" width="1" height="3.2" fill="#4a4a4a"/><rect x="949.22" y="14.8" width="1" height="2.2" fill="#4a4a4a"/><rect x="953.74" y="13.8" width="1" height="3.2" fill="#4a4a4a"/><rect x="958.27" y="14.8" width="1" height="2.2" fill="#4a4a4a"/><rect x="962.79" y="13.8" width="1" height="3.2" fill="#4a4a4a"/><rect x="967.32" y="14.8" width="1" height="2.2" fill="#4a4a4a"/><rect x="971.84" y="10.0" width="1" height="7" fill="#4a4a4a"/><rect x="976.36" y="14.8" width="1" height="2.2" fill="#4a4a4a"/><rect x="980.89" y="13.8" width="1" height="3.2" fill="#4a4a4a"/><rect x="985.41" y="14.8" width="1" height="2.2" fill="#4a4a4a"/><rect x="989.94" y="13.8" width="1" height="3.2" fill="#4a4a4a"/></svg>
<div class="t" style="left:72.3px;transform:translateX(-50%);top:105.6px;font-size:7px;color:#555;">0</div>
<div class="t" style="left:389.0px;transform:translateX(-50%);top:105.6px;font-size:7px;color:#555;">700</div>
<div class="t" style="left:434.2px;transform:translateX(-50%);top:105.6px;font-size:7px;color:#555;">800</div>
<div class="t" style="left:479.5px;transform:translateX(-50%);top:105.6px;font-size:7px;color:#555;">900</div>
<div class="t" style="left:524.7px;transform:translateX(-50%);top:105.6px;font-size:7px;color:#555;">1000</div>
<div class="t" style="left:569.9px;transform:translateX(-50%);top:105.6px;font-size:7px;color:#555;">1100</div>
<div class="t" style="left:615.2px;transform:translateX(-50%);top:105.6px;font-size:7px;color:#555;">1200</div>
<div class="t" style="left:660.4px;transform:translateX(-50%);top:105.6px;font-size:7px;color:#555;">1300</div>
<div class="t" style="left:705.7px;transform:translateX(-50%);top:105.6px;font-size:7px;color:#555;">1400</div>
<div class="t" style="left:750.9px;transform:translateX(-50%);top:105.6px;font-size:7px;color:#555;">1500</div>
<div class="t" style="left:796.1px;transform:translateX(-50%);top:105.6px;font-size:7px;color:#555;">1600</div>
<div class="t" style="left:841.4px;transform:translateX(-50%);top:105.6px;font-size:7px;color:#555;">1700</div>
<div class="t" style="left:886.6px;transform:translateX(-50%);top:105.6px;font-size:7px;color:#555;">1800</div>
<div class="t" style="left:931.9px;transform:translateX(-50%);top:105.6px;font-size:7px;color:#555;">1900</div>
<div class="t" style="left:977.1px;transform:translateX(-50%);top:105.6px;font-size:7px;color:#555;">2000</div>
<div class="t" style="left:1022.3px;transform:translateX(-50%);top:105.6px;font-size:7px;color:#555;">2100</div>
<svg class="a" style="left:32px;top:121px;" width="17" height="531" viewBox="0 0 17 531"><rect x="13.8" y="-0.49" width="3.2" height="1" fill="#4a4a4a"/><rect x="14.8" y="4.04" width="2.2" height="1" fill="#4a4a4a"/><rect x="10.0" y="8.56" width="7" height="1" fill="#4a4a4a"/><rect x="14.8" y="13.08" width="2.2" height="1" fill="#4a4a4a"/><rect x="13.8" y="17.61" width="3.2" height="1" fill="#4a4a4a"/><rect x="14.8" y="22.13" width="2.2" height="1" fill="#4a4a4a"/><rect x="13.8" y="26.66" width="3.2" height="1" fill="#4a4a4a"/><rect x="14.8" y="31.18" width="2.2" height="1" fill="#4a4a4a"/><rect x="13.8" y="35.70" width="3.2" height="1" fill="#4a4a4a"/><rect x="14.8" y="40.23" width="2.2" height="1" fill="#4a4a4a"/><rect x="13.8" y="44.75" width="3.2" height="1" fill="#4a4a4a"/><rect x="14.8" y="49.28" width="2.2" height="1" fill="#4a4a4a"/><rect x="10.0" y="53.80" width="7" height="1" fill="#4a4a4a"/><rect x="14.8" y="58.32" width="2.2" height="1" fill="#4a4a4a"/><rect x="13.8" y="62.85" width="3.2" height="1" fill="#4a4a4a"/><rect x="14.8" y="67.37" width="2.2" height="1" fill="#4a4a4a"/><rect x="13.8" y="71.90" width="3.2" height="1" fill="#4a4a4a"/><rect x="14.8" y="76.42" width="2.2" height="1" fill="#4a4a4a"/><rect x="13.8" y="80.94" width="3.2" height="1" fill="#4a4a4a"/><rect x="14.8" y="85.47" width="2.2" height="1" fill="#4a4a4a"/><rect x="13.8" y="89.99" width="3.2" height="1" fill="#4a4a4a"/><rect x="14.8" y="94.52" width="2.2" height="1" fill="#4a4a4a"/><rect x="10.0" y="99.04" width="7" height="1" fill="#4a4a4a"/><rect x="14.8" y="103.56" width="2.2" height="1" fill="#4a4a4a"/><rect x="13.8" y="108.09" width="3.2" height="1" fill="#4a4a4a"/><rect x="14.8" y="112.61" width="2.2" height="1" fill="#4a4a4a"/><rect x="13.8" y="117.14" width="3.2" height="1" fill="#4a4a4a"/><rect x="14.8" y="121.66" width="2.2" height="1" fill="#4a4a4a"/><rect x="13.8" y="126.18" width="3.2" height="1" fill="#4a4a4a"/><rect x="14.8" y="130.71" width="2.2" height="1" fill="#4a4a4a"/><rect x="13.8" y="135.23" width="3.2" height="1" fill="#4a4a4a"/><rect x="14.8" y="139.76" width="2.2" height="1" fill="#4a4a4a"/><rect x="10.0" y="144.28" width="7" height="1" fill="#4a4a4a"/><rect x="14.8" y="148.80" width="2.2" height="1" fill="#4a4a4a"/><rect x="13.8" y="153.33" width="3.2" height="1" fill="#4a4a4a"/><rect x="14.8" y="157.85" width="2.2" height="1" fill="#4a4a4a"/><rect x="13.8" y="162.38" width="3.2" height="1" fill="#4a4a4a"/><rect x="14.8" y="166.90" width="2.2" height="1" fill="#4a4a4a"/><rect x="13.8" y="171.42" width="3.2" height="1" fill="#4a4a4a"/><rect x="14.8" y="175.95" width="2.2" height="1" fill="#4a4a4a"/><rect x="13.8" y="180.47" width="3.2" height="1" fill="#4a4a4a"/><rect x="14.8" y="185.00" width="2.2" height="1" fill="#4a4a4a"/><rect x="10.0" y="189.52" width="7" height="1" fill="#4a4a4a"/><rect x="14.8" y="194.04" width="2.2" height="1" fill="#4a4a4a"/><rect x="13.8" y="198.57" width="3.2" height="1" fill="#4a4a4a"/><rect x="14.8" y="203.09" width="2.2" height="1" fill="#4a4a4a"/><rect x="13.8" y="207.62" width="3.2" height="1" fill="#4a4a4a"/><rect x="14.8" y="212.14" width="2.2" height="1" fill="#4a4a4a"/><rect x="13.8" y="216.66" width="3.2" height="1" fill="#4a4a4a"/><rect x="14.8" y="221.19" width="2.2" height="1" fill="#4a4a4a"/><rect x="13.8" y="225.71" width="3.2" height="1" fill="#4a4a4a"/><rect x="14.8" y="230.24" width="2.2" height="1" fill="#4a4a4a"/><rect x="10.0" y="234.76" width="7" height="1" fill="#4a4a4a"/><rect x="14.8" y="239.28" width="2.2" height="1" fill="#4a4a4a"/><rect x="13.8" y="243.81" width="3.2" height="1" fill="#4a4a4a"/><rect x="14.8" y="248.33" width="2.2" height="1" fill="#4a4a4a"/><rect x="13.8" y="252.86" width="3.2" height="1" fill="#4a4a4a"/><rect x="14.8" y="257.38" width="2.2" height="1" fill="#4a4a4a"/><rect x="13.8" y="261.90" width="3.2" height="1" fill="#4a4a4a"/><rect x="14.8" y="266.43" width="2.2" height="1" fill="#4a4a4a"/><rect x="13.8" y="270.95" width="3.2" height="1" fill="#4a4a4a"/><rect x="14.8" y="275.48" width="2.2" height="1" fill="#4a4a4a"/><rect x="10.0" y="280.00" width="7" height="1" fill="#4a4a4a"/><rect x="14.8" y="284.52" width="2.2" height="1" fill="#4a4a4a"/><rect x="13.8" y="289.05" width="3.2" height="1" fill="#4a4a4a"/><rect x="14.8" y="293.57" width="2.2" height="1" fill="#4a4a4a"/><rect x="13.8" y="298.10" width="3.2" height="1" fill="#4a4a4a"/><rect x="14.8" y="302.62" width="2.2" height="1" fill="#4a4a4a"/><rect x="13.8" y="307.14" width="3.2" height="1" fill="#4a4a4a"/><rect x="14.8" y="311.67" width="2.2" height="1" fill="#4a4a4a"/><rect x="13.8" y="316.19" width="3.2" height="1" fill="#4a4a4a"/><rect x="14.8" y="320.72" width="2.2" height="1" fill="#4a4a4a"/><rect x="10.0" y="325.24" width="7" height="1" fill="#4a4a4a"/><rect x="14.8" y="329.76" width="2.2" height="1" fill="#4a4a4a"/><rect x="13.8" y="334.29" width="3.2" height="1" fill="#4a4a4a"/><rect x="14.8" y="338.81" width="2.2" height="1" fill="#4a4a4a"/><rect x="13.8" y="343.34" width="3.2" height="1" fill="#4a4a4a"/><rect x="14.8" y="347.86" width="2.2" height="1" fill="#4a4a4a"/><rect x="13.8" y="352.38" width="3.2" height="1" fill="#4a4a4a"/><rect x="14.8" y="356.91" width="2.2" height="1" fill="#4a4a4a"/><rect x="13.8" y="361.43" width="3.2" height="1" fill="#4a4a4a"/><rect x="14.8" y="365.96" width="2.2" height="1" fill="#4a4a4a"/><rect x="10.0" y="370.48" width="7" height="1" fill="#4a4a4a"/><rect x="14.8" y="375.00" width="2.2" height="1" fill="#4a4a4a"/><rect x="13.8" y="379.53" width="3.2" height="1" fill="#4a4a4a"/><rect x="14.8" y="384.05" width="2.2" height="1" fill="#4a4a4a"/><rect x="13.8" y="388.58" width="3.2" height="1" fill="#4a4a4a"/><rect x="14.8" y="393.10" width="2.2" height="1" fill="#4a4a4a"/><rect x="13.8" y="397.62" width="3.2" height="1" fill="#4a4a4a"/><rect x="14.8" y="402.15" width="2.2" height="1" fill="#4a4a4a"/><rect x="13.8" y="406.67" width="3.2" height="1" fill="#4a4a4a"/><rect x="14.8" y="411.20" width="2.2" height="1" fill="#4a4a4a"/><rect x="10.0" y="415.72" width="7" height="1" fill="#4a4a4a"/><rect x="14.8" y="420.24" width="2.2" height="1" fill="#4a4a4a"/><rect x="13.8" y="424.77" width="3.2" height="1" fill="#4a4a4a"/><rect x="14.8" y="429.29" width="2.2" height="1" fill="#4a4a4a"/><rect x="13.8" y="433.82" width="3.2" height="1" fill="#4a4a4a"/><rect x="14.8" y="438.34" width="2.2" height="1" fill="#4a4a4a"/><rect x="13.8" y="442.86" width="3.2" height="1" fill="#4a4a4a"/><rect x="14.8" y="447.39" width="2.2" height="1" fill="#4a4a4a"/><rect x="13.8" y="451.91" width="3.2" height="1" fill="#4a4a4a"/><rect x="14.8" y="456.44" width="2.2" height="1" fill="#4a4a4a"/><rect x="10.0" y="460.96" width="7" height="1" fill="#4a4a4a"/><rect x="14.8" y="465.48" width="2.2" height="1" fill="#4a4a4a"/><rect x="13.8" y="470.01" width="3.2" height="1" fill="#4a4a4a"/><rect x="14.8" y="474.53" width="2.2" height="1" fill="#4a4a4a"/><rect x="13.8" y="479.06" width="3.2" height="1" fill="#4a4a4a"/><rect x="14.8" y="483.58" width="2.2" height="1" fill="#4a4a4a"/><rect x="13.8" y="488.10" width="3.2" height="1" fill="#4a4a4a"/><rect x="14.8" y="492.63" width="2.2" height="1" fill="#4a4a4a"/><rect x="13.8" y="497.15" width="3.2" height="1" fill="#4a4a4a"/><rect x="14.8" y="501.68" width="2.2" height="1" fill="#4a4a4a"/><rect x="10.0" y="506.20" width="7" height="1" fill="#4a4a4a"/><rect x="14.8" y="510.72" width="2.2" height="1" fill="#4a4a4a"/><rect x="13.8" y="515.25" width="3.2" height="1" fill="#4a4a4a"/><rect x="14.8" y="519.77" width="2.2" height="1" fill="#4a4a4a"/><rect x="13.8" y="524.30" width="3.2" height="1" fill="#4a4a4a"/><rect x="14.8" y="528.82" width="2.2" height="1" fill="#4a4a4a"/></svg>
<div class="t" style="left:37.5px;top:130.1px;font-size:7px;color:#555;transform:translate(-50%,-50%) rotate(-90deg);transform-origin:center">-100</div>
<div class="t" style="left:37.5px;top:175.3px;font-size:7px;color:#555;transform:translate(-50%,-50%) rotate(-90deg);transform-origin:center">0</div>
<div class="t" style="left:37.5px;top:220.5px;font-size:7px;color:#555;transform:translate(-50%,-50%) rotate(-90deg);transform-origin:center">100</div>
<div class="t" style="left:37.5px;top:265.8px;font-size:7px;color:#555;transform:translate(-50%,-50%) rotate(-90deg);transform-origin:center">200</div>
<div class="t" style="left:37.5px;top:311.0px;font-size:7px;color:#555;transform:translate(-50%,-50%) rotate(-90deg);transform-origin:center">300</div>
<div class="t" style="left:37.5px;top:356.3px;font-size:7px;color:#555;transform:translate(-50%,-50%) rotate(-90deg);transform-origin:center">400</div>
<div class="t" style="left:37.5px;top:401.5px;font-size:7px;color:#555;transform:translate(-50%,-50%) rotate(-90deg);transform-origin:center">500</div>
<div class="t" style="left:37.5px;top:446.7px;font-size:7px;color:#555;transform:translate(-50%,-50%) rotate(-90deg);transform-origin:center">600</div>
<div class="t" style="left:37.5px;top:492.0px;font-size:7px;color:#555;transform:translate(-50%,-50%) rotate(-90deg);transform-origin:center">700</div>
<div class="t" style="left:37.5px;top:537.2px;font-size:7px;color:#555;transform:translate(-50%,-50%) rotate(-90deg);transform-origin:center">800</div>
<div class="t" style="left:37.5px;top:582.5px;font-size:7px;color:#555;transform:translate(-50%,-50%) rotate(-90deg);transform-origin:center">900</div>
<div class="t" style="left:37.5px;top:627.7px;font-size:7px;color:#555;transform:translate(-50%,-50%) rotate(-90deg);transform-origin:center">1000</div>
<div class="a" style="left:49px;top:121px;width:994px;height:531px;background:#808080"></div>
<svg class="a" style="left:0;top:0" width="1280" height="720" viewBox="0 0 1280 720"><g><defs>
<linearGradient id="cg" gradientUnits="userSpaceOnUse" x1="71" y1="0" x2="940" y2="0"><stop offset="0" stop-color="#22eefc"/><stop offset="0.3" stop-color="#48a8f4"/><stop offset="0.55" stop-color="#6a78f0"/><stop offset="0.85" stop-color="#9a3ef0"/><stop offset="1" stop-color="#a818ec"/></linearGradient>
<clipPath id="dc"><rect x="71" y="175" width="869" height="477"/></clipPath>
<linearGradient id="cbg" x1="0" y1="0" x2="0" y2="1"><stop offset="0" stop-color="#1c213d"/><stop offset="0.5" stop-color="#1b1f39"/><stop offset="1" stop-color="#191d33"/></linearGradient>
<linearGradient id="tfade" x1="0" y1="0" x2="0" y2="1"><stop offset="0" stop-color="#fff" stop-opacity="1"/><stop offset="0.5" stop-color="#fff" stop-opacity="0.7"/><stop offset="1" stop-color="#fff" stop-opacity="0.1"/></linearGradient>
<filter id="tblur" x="0" y="0" width="1" height="1"><feGaussianBlur stdDeviation="0.9"/></filter>
<mask id="tm"><rect x="71" y="175" width="869" height="477" fill="url(#tfade)"/></mask>
</defs>
<rect x="71" y="175" width="869" height="477" fill="url(#cbg)"/>
<g clip-path="url(#dc)"><g mask="url(#tm)" opacity="0.6" filter="url(#tblur)"><polygon points="54.2,177.6 63.7,173.8 86.6,174.4 104.7,174.7 110.8,178.6 111.3,200.8 103.1,204.5 76.2,200.7 63.5,203.4 58.6,198.1" fill="#1f2441" stroke="#171a2e" stroke-width="1.2" stroke-linejoin="round"/><polygon points="112.0,177.8 121.8,172.7 130.6,170.0 149.9,171.7 153.2,178.2 155.8,199.6 152.8,204.8 128.8,204.8 118.3,199.8 112.1,195.5" fill="#1e2340" stroke="#171a2e" stroke-width="1.2" stroke-linejoin="round"/><polygon points="160.1,172.7 161.9,169.4 188.0,171.9 201.9,170.8 206.9,176.6 204.3,196.9 199.1,199.0 184.3,204.1 160.1,202.6 160.7,198.1" fill="#1d223d" stroke="#171a2e" stroke-width="1.2" stroke-linejoin="round"/><polygon points="208.7,174.7 216.9,171.7 226.6,172.1 241.4,173.2 241.5,178.1 243.5,201.9 237.2,204.7 223.0,201.6 217.9,202.7 209.3,198.8" fill="#20253f" stroke="#171a2e" stroke-width="1.2" stroke-linejoin="round"/><polygon points="245.9,173.7 248.5,171.0 262.8,173.1 287.0,174.5 286.0,177.7 290.9,197.0 282.4,200.9 261.7,202.6 253.0,202.3 246.7,198.0" fill="#1f2441" stroke="#171a2e" stroke-width="1.2" stroke-linejoin="round"/><polygon points="293.4,175.0 296.8,169.2 334.6,169.6 359.6,172.0 361.9,178.3 362.8,195.6 362.0,199.8 332.2,204.9 295.7,204.0 291.9,200.9" fill="#1f2543" stroke="#171a2e" stroke-width="1.2" stroke-linejoin="round"/><polygon points="370.9,176.6 372.8,170.7 392.5,171.0 410.5,171.4 415.6,177.6 419.2,196.7 413.7,201.3 394.2,203.2 373.0,199.9 369.6,195.3" fill="#21263f" stroke="#171a2e" stroke-width="1.2" stroke-linejoin="round"/><polygon points="419.8,176.5 425.9,170.7 459.9,169.1 491.3,171.9 493.5,177.6 494.8,200.4 490.9,203.1 461.1,201.1 425.9,203.6 422.4,200.9" fill="#20253f" stroke="#171a2e" stroke-width="1.2" stroke-linejoin="round"/><polygon points="499.1,178.3 501.0,174.2 525.2,174.6 537.9,173.1 543.1,179.0 543.4,199.4 538.7,204.7 519.3,203.0 502.5,204.9 499.7,202.0" fill="#21263f" stroke="#171a2e" stroke-width="1.2" stroke-linejoin="round"/><polygon points="546.9,176.2 551.1,173.3 572.6,169.3 590.8,169.2 593.4,172.4 592.8,196.9 588.1,201.6 563.0,199.2 549.8,200.0 545.3,196.4" fill="#1d223d" stroke="#171a2e" stroke-width="1.2" stroke-linejoin="round"/><polygon points="597.7,174.1 600.7,170.4 626.4,171.2 637.2,174.4 644.7,177.8 644.3,196.8 639.5,201.4 625.8,203.9 602.5,199.0 600.9,195.6" fill="#20253f" stroke="#171a2e" stroke-width="1.2" stroke-linejoin="round"/><polygon points="650.8,174.3 651.1,169.9 686.2,169.0 702.6,172.6 709.4,178.0 706.8,201.3 706.3,204.7 672.8,201.6 650.4,202.4 646.7,200.3" fill="#1f2543" stroke="#171a2e" stroke-width="1.2" stroke-linejoin="round"/><polygon points="715.9,178.8 716.5,174.8 737.7,174.9 765.0,174.5 767.7,179.4 766.7,197.0 763.7,200.6 734.3,203.7 719.0,202.6 710.1,198.7" fill="#20253f" stroke="#171a2e" stroke-width="1.2" stroke-linejoin="round"/><polygon points="770.9,180.6 775.8,174.6 798.2,171.8 816.9,173.7 820.6,179.7 817.7,197.6 813.8,200.6 794.5,201.0 775.8,200.5 773.2,196.3" fill="#20253f" stroke="#171a2e" stroke-width="1.2" stroke-linejoin="round"/><polygon points="823.7,179.1 830.3,173.5 862.6,169.1 896.7,172.5 898.6,177.8 900.2,197.0 893.9,200.5 867.3,201.3 827.4,199.2 826.1,194.0" fill="#20253f" stroke="#171a2e" stroke-width="1.2" stroke-linejoin="round"/><polygon points="902.6,177.1 908.7,174.0 941.5,169.9 959.9,169.4 964.3,174.4 963.0,197.8 959.5,203.2 936.3,199.4 905.4,204.0 904.9,201.2" fill="#21263f" stroke="#171a2e" stroke-width="1.2" stroke-linejoin="round"/><polygon points="54.1,211.7 56.9,208.9 90.0,207.3 104.8,209.0 109.8,215.7 108.9,220.7 105.5,224.3 71.9,227.7 53.3,228.2 49.6,223.7" fill="#1f2441" stroke="#171a2e" stroke-width="1.2" stroke-linejoin="round"/><polygon points="112.8,207.1 117.9,203.3 141.1,205.9 162.6,206.5 163.2,209.7 165.2,223.9 159.8,229.3 136.9,229.5 119.3,228.5 115.7,223.5" fill="#1d223d" stroke="#171a2e" stroke-width="1.2" stroke-linejoin="round"/><polygon points="166.4,208.0 173.4,204.5 186.6,207.3 211.9,207.5 212.5,213.2 212.5,219.3 210.6,224.8 185.0,229.3 171.9,227.1 166.9,224.3" fill="#1f2441" stroke="#171a2e" stroke-width="1.2" stroke-linejoin="round"/><polygon points="220.1,210.2 220.7,207.4 261.9,207.0 282.9,203.3 282.8,208.8 284.1,224.7 279.0,229.7 250.9,226.1 222.3,224.9 216.8,222.2" fill="#21263f" stroke="#171a2e" stroke-width="1.2" stroke-linejoin="round"/><polygon points="289.6,212.1 294.4,207.8 312.3,203.6 332.2,205.6 337.2,208.8 341.3,223.0 335.6,227.1 303.2,226.8 295.3,229.1 289.7,224.8" fill="#1f2543" stroke="#171a2e" stroke-width="1.2" stroke-linejoin="round"/><polygon points="342.3,209.1 344.9,203.6 368.7,204.7 398.0,203.9 402.7,207.9 403.9,220.4 401.5,226.2 367.7,229.6 348.1,225.0 344.0,220.8" fill="#1e2340" stroke="#171a2e" stroke-width="1.2" stroke-linejoin="round"/><polygon points="411.0,209.8 413.3,207.7 428.5,206.9 443.7,204.9 449.5,210.8 448.1,220.2 441.2,225.4 419.8,230.0 411.8,226.7 409.7,221.4" fill="#1e2340" stroke="#171a2e" stroke-width="1.2" stroke-linejoin="round"/><polygon points="448.4,212.0 454.5,206.9 462.8,206.3 483.9,205.6 485.1,210.0 482.6,218.3 482.4,224.0 466.0,229.6 452.3,229.9 449.5,224.1" fill="#1f2543" stroke="#171a2e" stroke-width="1.2" stroke-linejoin="round"/><polygon points="491.3,209.1 491.2,203.3 508.8,206.8 518.1,208.0 522.4,214.7 525.7,222.2 521.9,227.8 500.6,224.5 494.4,226.7 489.7,222.4" fill="#20253f" stroke="#171a2e" stroke-width="1.2" stroke-linejoin="round"/><polygon points="525.1,210.6 533.1,205.5 567.4,209.0 587.3,207.6 588.8,212.5 592.7,219.9 585.4,224.8 548.8,227.2 531.8,227.1 529.2,224.3" fill="#1d223d" stroke="#171a2e" stroke-width="1.2" stroke-linejoin="round"/><polygon points="593.2,207.6 598.2,204.5 622.6,205.5 663.9,203.4 670.5,208.6 671.4,220.9 665.6,224.3 629.8,226.7 600.9,228.2 595.9,226.0" fill="#21263f" stroke="#171a2e" stroke-width="1.2" stroke-linejoin="round"/><polygon points="670.8,209.5 675.0,207.2 687.7,207.1 702.7,204.6 705.4,210.7 708.3,220.4 700.3,226.3 684.2,226.1 679.2,228.9 675.7,225.3" fill="#1e2340" stroke="#171a2e" stroke-width="1.2" stroke-linejoin="round"/><polygon points="712.5,210.9 717.4,205.6 736.1,206.2 771.0,205.2 778.3,210.0 779.6,221.3 769.7,224.1 737.3,229.5 715.8,226.0 711.6,221.7" fill="#21263f" stroke="#171a2e" stroke-width="1.2" stroke-linejoin="round"/><polygon points="782.9,209.9 782.3,206.2 808.6,203.2 819.5,208.8 822.9,215.3 822.4,219.5 816.7,224.6 795.6,227.4 784.1,227.6 782.5,222.5" fill="#20253f" stroke="#171a2e" stroke-width="1.2" stroke-linejoin="round"/><polygon points="827.0,211.3 828.9,207.9 846.5,205.3 867.6,207.0 873.4,213.0 872.7,222.1 870.8,224.4 851.9,226.9 830.8,229.5 827.2,223.8" fill="#1e2340" stroke="#171a2e" stroke-width="1.2" stroke-linejoin="round"/><polygon points="879.9,209.2 883.1,207.1 908.0,206.1 930.0,203.6 934.3,209.4 933.7,224.9 929.5,227.7 910.8,227.3 879.4,227.6 875.9,223.3" fill="#1d223d" stroke="#171a2e" stroke-width="1.2" stroke-linejoin="round"/><polygon points="935.5,210.5 942.5,207.1 957.4,207.3 965.8,206.1 973.6,210.2 972.3,218.8 967.5,224.5 954.5,229.7 944.4,225.7 939.1,223.1" fill="#21263f" stroke="#171a2e" stroke-width="1.2" stroke-linejoin="round"/><polygon points="36.8,233.4 37.4,229.3 56.9,230.3 95.1,231.1 101.9,237.7 103.5,255.9 95.3,259.4 55.6,262.1 38.3,263.4 35.3,258.9" fill="#1f2441" stroke="#171a2e" stroke-width="1.2" stroke-linejoin="round"/><polygon points="107.7,232.1 108.5,229.8 122.9,231.9 146.4,232.8 150.8,238.3 150.3,254.1 143.4,258.5 124.8,261.6 107.5,262.8 104.5,257.1" fill="#20253f" stroke="#171a2e" stroke-width="1.2" stroke-linejoin="round"/><polygon points="154.4,234.3 157.0,230.5 169.9,232.7 192.0,228.9 194.5,235.7 194.8,257.4 189.4,261.3 168.8,260.8 157.3,259.8 156.4,257.3" fill="#1d223d" stroke="#171a2e" stroke-width="1.2" stroke-linejoin="round"/><polygon points="200.0,236.5 206.6,233.0 233.5,230.6 257.9,228.0 264.6,231.7 265.4,254.9 258.5,258.7 236.0,263.2 204.2,262.0 202.9,256.8" fill="#20253f" stroke="#171a2e" stroke-width="1.2" stroke-linejoin="round"/><polygon points="265.5,234.8 270.8,229.0 285.7,233.9 320.8,233.3 319.8,236.4 321.3,258.0 318.5,262.6 291.4,263.6 272.3,263.9 264.1,261.2" fill="#20253f" stroke="#171a2e" stroke-width="1.2" stroke-linejoin="round"/><polygon points="327.2,238.7 330.5,233.5 345.1,230.0 368.1,230.3 370.1,233.5 369.5,255.9 366.0,261.0 339.5,259.6 327.6,259.7 325.9,257.7" fill="#1d223d" stroke="#171a2e" stroke-width="1.2" stroke-linejoin="round"/><polygon points="371.5,238.4 375.8,233.1 407.6,228.1 426.4,229.5 432.7,235.9 427.5,256.7 423.2,258.8 404.5,258.1 378.1,260.7 376.7,257.1" fill="#21263f" stroke="#171a2e" stroke-width="1.2" stroke-linejoin="round"/><polygon points="433.6,235.4 440.4,231.0 467.9,231.8 489.2,228.3 493.1,234.4 495.5,260.2 493.0,262.7 469.9,260.3 441.0,260.4 435.5,257.9" fill="#1e2340" stroke="#171a2e" stroke-width="1.2" stroke-linejoin="round"/><polygon points="498.3,236.4 502.6,232.7 525.0,229.7 548.0,230.5 548.7,234.2 550.7,258.3 545.3,264.0 529.3,263.3 502.2,263.8 497.1,261.1" fill="#20253f" stroke="#171a2e" stroke-width="1.2" stroke-linejoin="round"/><polygon points="555.7,232.8 560.9,230.7 580.8,228.8 621.9,230.8 624.0,234.7 623.8,257.8 622.4,260.2 587.6,259.7 556.6,258.5 554.4,253.7" fill="#1f2543" stroke="#171a2e" stroke-width="1.2" stroke-linejoin="round"/><polygon points="627.6,235.7 634.4,231.5 654.7,230.9 693.2,233.8 693.0,239.9 695.5,257.4 691.7,261.4 665.2,258.3 633.0,259.4 626.2,255.0" fill="#20253f" stroke="#171a2e" stroke-width="1.2" stroke-linejoin="round"/><polygon points="702.4,235.6 702.7,231.3 717.4,231.6 728.3,230.6 732.3,237.0 733.5,255.5 728.9,258.7 709.7,259.3 704.7,258.6 697.6,254.7" fill="#1d223d" stroke="#171a2e" stroke-width="1.2" stroke-linejoin="round"/><polygon points="737.4,235.8 740.7,233.0 756.7,228.5 787.1,228.8 789.9,235.7 790.6,256.1 788.7,261.0 765.8,259.6 743.0,260.1 737.8,255.7" fill="#21263f" stroke="#171a2e" stroke-width="1.2" stroke-linejoin="round"/><polygon points="798.0,236.6 800.4,232.2 825.6,230.1 836.7,231.6 842.7,237.3 843.7,260.2 838.9,263.5 809.7,260.5 799.5,263.3 796.2,259.0" fill="#1d223d" stroke="#171a2e" stroke-width="1.2" stroke-linejoin="round"/><polygon points="847.6,233.4 852.3,231.2 867.1,231.1 889.2,232.2 895.0,239.0 894.1,257.4 887.4,262.3 864.6,260.7 849.8,262.2 849.3,257.5" fill="#21263f" stroke="#171a2e" stroke-width="1.2" stroke-linejoin="round"/><polygon points="899.7,233.6 898.5,230.8 925.5,228.5 955.6,228.9 960.7,234.5 958.0,254.1 954.9,259.6 928.9,260.7 901.4,259.3 899.5,253.9" fill="#20253f" stroke="#171a2e" stroke-width="1.2" stroke-linejoin="round"/><polygon points="41.5,270.4 48.0,265.2 69.8,262.6 100.6,267.4 105.1,274.0 104.6,292.5 101.8,296.0 79.9,292.7 47.6,295.3 41.0,289.7" fill="#21263f" stroke="#171a2e" stroke-width="1.2" stroke-linejoin="round"/><polygon points="109.3,271.6 115.3,267.1 131.1,264.5 155.0,265.5 157.6,268.8 161.3,293.5 157.2,297.8 125.2,293.8 112.1,292.3 112.7,289.5" fill="#1d223d" stroke="#171a2e" stroke-width="1.2" stroke-linejoin="round"/><polygon points="164.4,265.8 165.6,262.6 193.2,267.6 220.7,264.5 221.8,267.9 223.6,286.6 217.2,292.2 182.2,297.9 168.3,293.4 163.6,288.4" fill="#1d223d" stroke="#171a2e" stroke-width="1.2" stroke-linejoin="round"/><polygon points="228.5,271.4 230.8,267.8 264.7,264.0 284.9,264.6 287.2,268.1 284.3,292.8 281.8,295.1 252.1,297.5 230.4,293.3 226.0,288.4" fill="#21263f" stroke="#171a2e" stroke-width="1.2" stroke-linejoin="round"/><polygon points="288.8,266.3 296.2,263.5 332.2,262.6 362.0,264.8 360.8,268.5 360.5,291.4 358.7,295.6 331.3,293.0 296.2,296.6 288.6,292.9" fill="#20253f" stroke="#171a2e" stroke-width="1.2" stroke-linejoin="round"/><polygon points="368.6,267.5 371.6,264.1 406.2,264.9 437.2,262.3 441.5,266.4 438.0,290.2 431.8,292.7 397.4,294.5 373.9,296.3 364.8,292.9" fill="#21263f" stroke="#171a2e" stroke-width="1.2" stroke-linejoin="round"/><polygon points="444.0,265.7 449.0,262.0 462.0,264.0 474.4,267.7 477.0,273.5 477.7,294.3 470.0,297.1 458.0,292.0 448.7,293.9 444.6,291.2" fill="#1f2441" stroke="#171a2e" stroke-width="1.2" stroke-linejoin="round"/><polygon points="483.8,270.6 483.4,265.2 508.9,265.9 522.3,264.9 527.9,268.8 525.6,287.3 522.9,293.2 502.7,296.5 485.0,292.7 480.6,287.9" fill="#21263f" stroke="#171a2e" stroke-width="1.2" stroke-linejoin="round"/><polygon points="532.1,266.5 533.6,264.2 554.3,262.9 562.3,265.6 566.1,271.6 566.6,290.5 563.6,294.7 551.7,294.9 535.1,296.5 528.1,293.7" fill="#1d223d" stroke="#171a2e" stroke-width="1.2" stroke-linejoin="round"/><polygon points="575.1,267.6 577.9,264.8 607.2,265.0 642.8,265.7 645.2,269.5 644.2,295.0 637.0,297.4 602.4,292.2 574.3,295.6 571.1,293.1" fill="#1f2543" stroke="#171a2e" stroke-width="1.2" stroke-linejoin="round"/><polygon points="645.8,272.2 649.9,266.6 675.4,263.6 686.1,262.7 688.2,268.4 692.0,288.2 682.6,293.1 663.0,294.5 653.9,294.3 649.9,291.9" fill="#1d223d" stroke="#171a2e" stroke-width="1.2" stroke-linejoin="round"/><polygon points="696.2,268.6 699.9,266.4 733.0,263.0 750.8,263.2 755.3,267.9 755.9,292.8 747.1,296.3 721.6,296.2 700.7,295.5 695.5,292.3" fill="#1f2543" stroke="#171a2e" stroke-width="1.2" stroke-linejoin="round"/><polygon points="760.9,271.3 761.2,266.4 790.5,263.6 806.4,267.3 812.3,271.6 812.8,289.9 804.4,294.2 782.2,297.9 759.1,294.9 757.9,289.4" fill="#1d223d" stroke="#171a2e" stroke-width="1.2" stroke-linejoin="round"/><polygon points="812.9,269.0 817.0,266.7 828.1,264.1 847.6,264.9 847.3,270.4 851.7,293.6 847.3,295.9 833.2,297.2 819.1,292.5 811.5,288.4" fill="#1f2543" stroke="#171a2e" stroke-width="1.2" stroke-linejoin="round"/><polygon points="851.4,269.4 856.5,264.7 873.4,262.5 893.8,262.9 901.6,267.1 896.6,290.1 896.7,294.7 868.0,294.1 856.3,293.7 855.1,289.5" fill="#1f2441" stroke="#171a2e" stroke-width="1.2" stroke-linejoin="round"/><polygon points="900.3,266.9 905.7,264.0 929.8,266.9 962.0,266.1 965.1,271.1 968.1,293.5 960.7,297.2 934.3,295.7 906.4,294.7 902.6,289.2" fill="#1f2543" stroke="#171a2e" stroke-width="1.2" stroke-linejoin="round"/><polygon points="68.1,303.3 73.8,300.7 97.6,299.5 119.2,298.5 119.3,305.2 120.8,317.8 116.6,322.6 89.3,324.6 73.8,327.6 72.2,323.8" fill="#1d223d" stroke="#171a2e" stroke-width="1.2" stroke-linejoin="round"/><polygon points="124.1,305.0 128.9,301.1 162.7,296.7 192.3,301.1 193.2,307.2 196.7,324.8 188.3,327.1 164.1,328.0 127.8,325.7 127.5,322.6" fill="#1f2543" stroke="#171a2e" stroke-width="1.2" stroke-linejoin="round"/><polygon points="197.4,300.7 202.7,297.7 223.9,299.7 247.7,297.0 250.7,300.2 253.9,324.2 245.5,327.6 222.1,325.5 202.0,324.5 200.4,321.6" fill="#20253f" stroke="#171a2e" stroke-width="1.2" stroke-linejoin="round"/><polygon points="253.3,302.0 258.6,298.0 275.3,296.3 288.3,299.7 296.9,305.8 292.3,323.4 286.2,327.6 268.1,323.2 262.9,323.0 254.9,318.0" fill="#1f2441" stroke="#171a2e" stroke-width="1.2" stroke-linejoin="round"/><polygon points="300.0,301.8 300.5,296.7 326.5,297.6 363.4,302.0 368.1,307.9 369.9,321.6 363.8,327.5 338.2,327.1 303.4,326.4 299.4,324.1" fill="#1d223d" stroke="#171a2e" stroke-width="1.2" stroke-linejoin="round"/><polygon points="372.6,302.1 375.7,298.3 390.3,297.5 414.2,299.4 421.7,304.4 421.0,319.2 414.6,322.2 391.4,324.4 376.9,323.7 374.8,321.1" fill="#1d223d" stroke="#171a2e" stroke-width="1.2" stroke-linejoin="round"/><polygon points="425.5,303.0 424.5,298.7 443.7,298.3 469.9,300.1 471.3,306.5 470.8,320.2 466.0,323.2 447.0,325.7 429.0,325.6 423.6,320.4" fill="#1f2543" stroke="#171a2e" stroke-width="1.2" stroke-linejoin="round"/><polygon points="478.8,302.4 482.1,297.8 516.2,299.4 547.7,297.5 551.9,300.6 546.1,320.2 542.0,325.5 515.7,324.3 483.0,325.6 479.1,322.0" fill="#20253f" stroke="#171a2e" stroke-width="1.2" stroke-linejoin="round"/><polygon points="553.7,302.5 559.5,297.2 568.8,299.3 587.2,299.3 594.3,303.4 595.0,321.5 588.8,326.4 568.3,322.7 555.5,325.8 553.6,323.6" fill="#1f2543" stroke="#171a2e" stroke-width="1.2" stroke-linejoin="round"/><polygon points="596.4,306.4 603.9,300.8 635.4,296.4 655.9,296.4 656.4,301.8 655.2,325.0 650.5,327.9 623.9,323.1 600.6,324.4 598.8,321.1" fill="#1e2340" stroke="#171a2e" stroke-width="1.2" stroke-linejoin="round"/><polygon points="661.7,304.7 662.4,300.2 693.6,297.4 713.0,300.3 717.1,306.1 718.6,319.3 714.6,323.4 685.0,325.4 667.9,326.2 659.9,323.1" fill="#1e2340" stroke="#171a2e" stroke-width="1.2" stroke-linejoin="round"/><polygon points="718.1,301.4 722.1,296.7 741.9,300.1 751.8,298.7 755.7,301.9 759.6,323.3 752.6,325.9 733.6,322.7 722.1,324.8 722.7,320.6" fill="#21263f" stroke="#171a2e" stroke-width="1.2" stroke-linejoin="round"/><polygon points="762.0,303.8 766.9,299.8 795.8,296.3 825.8,301.2 825.9,306.2 824.3,322.6 824.6,327.8 786.4,323.8 767.9,326.3 760.4,323.0" fill="#1d223d" stroke="#171a2e" stroke-width="1.2" stroke-linejoin="round"/><polygon points="830.2,303.4 832.7,301.4 855.4,297.9 891.6,298.9 896.7,303.3 892.5,318.7 889.8,323.6 858.7,322.7 835.1,324.0 829.6,318.5" fill="#1f2441" stroke="#171a2e" stroke-width="1.2" stroke-linejoin="round"/><polygon points="896.9,304.4 899.3,298.6 922.0,298.5 929.0,300.6 934.6,307.6 937.3,324.2 932.9,327.2 908.7,323.8 901.8,325.3 900.5,322.9" fill="#1e2340" stroke="#171a2e" stroke-width="1.2" stroke-linejoin="round"/><polygon points="939.6,306.0 943.7,301.9 964.1,301.7 990.9,299.3 993.8,305.4 993.5,318.2 987.6,322.5 959.9,328.0 944.7,323.8 940.1,320.5" fill="#21263f" stroke="#171a2e" stroke-width="1.2" stroke-linejoin="round"/><polygon points="39.4,330.2 45.0,328.2 69.1,327.4 99.9,326.9 105.0,330.7 107.1,350.7 97.4,354.7 60.5,359.3 44.5,354.2 38.7,351.0" fill="#1f2441" stroke="#171a2e" stroke-width="1.2" stroke-linejoin="round"/><polygon points="108.6,336.7 113.6,331.3 139.2,327.4 176.4,331.6 183.1,335.3 182.7,351.9 180.4,354.3 141.9,358.7 110.8,358.0 111.7,355.4" fill="#1f2543" stroke="#171a2e" stroke-width="1.2" stroke-linejoin="round"/><polygon points="189.5,336.7 193.6,331.3 209.4,326.4 220.7,327.8 226.9,334.4 227.1,350.1 220.1,355.9 202.4,355.0 189.4,359.9 187.1,355.4" fill="#20253f" stroke="#171a2e" stroke-width="1.2" stroke-linejoin="round"/><polygon points="232.6,330.6 236.3,328.5 251.5,327.2 285.4,331.7 289.5,337.1 287.9,355.4 282.6,358.5 250.2,355.3 231.7,357.6 227.2,355.4" fill="#1e2340" stroke="#171a2e" stroke-width="1.2" stroke-linejoin="round"/><polygon points="291.0,329.9 298.4,326.9 325.8,330.5 341.0,328.0 343.5,333.0 348.8,350.2 338.9,355.9 313.1,358.2 297.6,359.0 290.0,353.8" fill="#1f2543" stroke="#171a2e" stroke-width="1.2" stroke-linejoin="round"/><polygon points="347.2,337.1 354.6,331.9 372.4,330.5 406.1,327.6 411.2,332.9 411.2,356.5 407.1,359.4 383.8,357.4 356.7,357.9 351.1,355.4" fill="#1f2441" stroke="#171a2e" stroke-width="1.2" stroke-linejoin="round"/><polygon points="416.9,332.4 419.2,329.2 444.9,328.4 484.0,330.0 490.6,334.9 493.0,353.7 484.7,358.1 453.2,355.9 415.2,358.5 412.7,354.1" fill="#1d223d" stroke="#171a2e" stroke-width="1.2" stroke-linejoin="round"/><polygon points="491.5,333.1 497.4,330.7 530.6,326.6 556.2,327.4 558.8,333.9 558.2,355.2 554.9,358.8 527.3,355.5 500.1,358.7 496.9,355.9" fill="#21263f" stroke="#171a2e" stroke-width="1.2" stroke-linejoin="round"/><polygon points="567.4,329.4 567.7,327.2 601.2,329.6 626.4,331.7 629.3,335.1 631.7,351.3 629.5,357.0 593.7,354.5 570.5,358.3 562.6,354.3" fill="#1e2340" stroke="#171a2e" stroke-width="1.2" stroke-linejoin="round"/><polygon points="636.0,333.6 637.7,329.6 662.6,328.9 700.2,330.0 705.9,336.4 702.1,353.9 702.2,359.4 669.7,354.8 637.2,357.5 637.5,353.2" fill="#20253f" stroke="#171a2e" stroke-width="1.2" stroke-linejoin="round"/><polygon points="708.0,333.5 714.5,330.1 747.4,328.6 776.3,329.9 775.2,335.1 780.1,356.4 771.2,358.9 746.6,357.2 715.6,356.9 708.0,353.6" fill="#21263f" stroke="#171a2e" stroke-width="1.2" stroke-linejoin="round"/><polygon points="783.1,334.2 788.1,331.9 804.4,327.1 838.7,328.0 840.0,334.1 839.1,349.7 834.2,354.7 816.9,355.2 788.4,356.3 784.3,353.1" fill="#20253f" stroke="#171a2e" stroke-width="1.2" stroke-linejoin="round"/><polygon points="844.7,336.2 848.5,330.4 857.0,327.2 874.8,331.4 875.3,334.4 877.2,350.3 873.0,355.3 854.2,357.4 849.1,357.6 842.9,353.9" fill="#1d223d" stroke="#171a2e" stroke-width="1.2" stroke-linejoin="round"/><polygon points="883.9,333.1 883.7,330.7 903.2,331.0 909.0,329.5 918.4,334.9 918.1,354.2 910.3,357.4 892.7,358.6 887.3,357.8 881.8,352.9" fill="#20253f" stroke="#171a2e" stroke-width="1.2" stroke-linejoin="round"/><polygon points="918.1,331.6 925.4,328.8 951.6,328.8 985.1,327.3 986.6,332.6 986.2,354.8 983.3,359.9 948.8,359.4 921.9,359.9 922.5,355.0" fill="#20253f" stroke="#171a2e" stroke-width="1.2" stroke-linejoin="round"/><polygon points="69.9,364.7 69.1,359.9 103.4,359.0 137.5,363.9 142.0,367.5 144.1,388.1 136.7,392.0 95.1,387.9 68.7,389.2 66.6,383.5" fill="#1d223d" stroke="#171a2e" stroke-width="1.2" stroke-linejoin="round"/><polygon points="149.7,365.3 149.4,359.5 172.7,360.8 185.3,362.6 186.8,367.8 185.6,389.2 181.2,392.1 169.9,391.2 150.6,388.6 144.2,383.7" fill="#1f2543" stroke="#171a2e" stroke-width="1.2" stroke-linejoin="round"/><polygon points="193.4,366.0 196.1,360.2 216.8,361.6 236.0,361.5 238.7,366.3 237.0,387.6 232.3,389.8 213.0,388.8 196.0,387.0 190.9,384.8" fill="#1f2543" stroke="#171a2e" stroke-width="1.2" stroke-linejoin="round"/><polygon points="243.0,367.9 243.5,363.7 258.8,359.5 282.8,358.3 286.9,364.2 287.2,383.7 284.7,389.0 256.6,392.0 245.9,387.4 243.3,384.3" fill="#21263f" stroke="#171a2e" stroke-width="1.2" stroke-linejoin="round"/><polygon points="292.7,364.8 299.8,361.8 324.1,358.8 340.8,358.7 341.2,365.0 342.0,388.0 335.0,392.9 312.5,392.0 296.3,388.7 290.8,385.5" fill="#1f2441" stroke="#171a2e" stroke-width="1.2" stroke-linejoin="round"/><polygon points="346.8,364.5 352.2,360.0 380.2,358.7 408.3,362.0 408.8,365.1 410.9,387.2 402.1,391.1 374.6,387.4 349.0,391.9 343.9,389.6" fill="#1f2543" stroke="#171a2e" stroke-width="1.2" stroke-linejoin="round"/><polygon points="413.1,362.5 420.3,358.1 440.0,363.3 475.6,358.9 481.8,362.7 483.4,388.4 474.1,391.6 442.3,390.8 419.3,387.6 416.9,383.3" fill="#1d223d" stroke="#171a2e" stroke-width="1.2" stroke-linejoin="round"/><polygon points="482.0,366.4 491.6,363.2 506.0,363.8 515.7,359.0 521.9,364.5 520.6,384.6 514.8,390.5 497.3,392.1 491.4,391.7 486.3,387.5" fill="#20253f" stroke="#171a2e" stroke-width="1.2" stroke-linejoin="round"/><polygon points="525.1,364.7 525.2,359.0 563.7,360.1 591.8,361.2 596.5,367.1 594.7,382.6 592.7,388.3 546.2,387.5 525.6,391.8 525.2,386.7" fill="#21263f" stroke="#171a2e" stroke-width="1.2" stroke-linejoin="round"/><polygon points="599.0,364.5 606.8,360.6 637.0,358.8 659.0,360.9 663.9,365.3 664.3,387.6 654.4,389.8 630.2,389.3 603.8,389.4 600.3,386.8" fill="#21263f" stroke="#171a2e" stroke-width="1.2" stroke-linejoin="round"/><polygon points="667.8,363.8 668.4,359.5 705.4,360.9 726.0,362.8 731.9,367.1 729.3,384.3 722.7,388.1 694.8,392.8 671.2,389.4 664.6,386.1" fill="#1d223d" stroke="#171a2e" stroke-width="1.2" stroke-linejoin="round"/><polygon points="732.3,365.5 735.8,360.2 759.9,360.0 794.8,362.0 803.2,369.0 800.5,386.6 798.3,391.7 771.0,388.5 735.8,389.3 733.0,383.8" fill="#1e2340" stroke="#171a2e" stroke-width="1.2" stroke-linejoin="round"/><polygon points="803.8,366.0 811.8,360.4 845.4,359.6 875.6,358.7 877.0,365.2 877.5,387.4 874.5,390.6 842.3,391.5 808.1,387.9 802.9,383.3" fill="#1f2441" stroke="#171a2e" stroke-width="1.2" stroke-linejoin="round"/><polygon points="880.0,362.1 883.1,359.7 900.8,362.4 919.7,359.9 924.9,364.9 923.2,387.9 916.2,392.2 906.9,391.4 883.6,389.6 880.2,386.8" fill="#1d223d" stroke="#171a2e" stroke-width="1.2" stroke-linejoin="round"/><polygon points="926.2,365.0 933.5,362.5 960.5,359.8 977.3,362.5 983.4,366.7 981.7,389.9 974.8,391.9 959.8,392.3 935.0,387.9 926.5,382.7" fill="#1f2543" stroke="#171a2e" stroke-width="1.2" stroke-linejoin="round"/><polygon points="60.7,396.9 60.4,394.4 102.7,394.5 128.7,396.1 134.0,402.1 131.7,414.0 126.2,417.0 84.2,416.0 64.5,416.9 58.2,411.1" fill="#21263f" stroke="#171a2e" stroke-width="1.2" stroke-linejoin="round"/><polygon points="135.8,401.4 138.9,397.0 162.2,396.3 175.7,394.8 179.4,400.6 176.2,412.7 171.6,416.7 150.0,419.7 137.4,417.0 136.9,414.3" fill="#1f2543" stroke="#171a2e" stroke-width="1.2" stroke-linejoin="round"/><polygon points="181.1,395.5 184.0,391.1 215.6,395.7 240.7,392.1 243.4,397.4 240.0,413.3 237.4,418.3 200.9,414.4 188.7,417.9 183.1,414.1" fill="#21263f" stroke="#171a2e" stroke-width="1.2" stroke-linejoin="round"/><polygon points="249.7,397.4 252.9,394.8 268.9,393.1 284.2,393.6 285.6,399.5 287.4,416.2 279.3,419.8 270.1,419.7 252.6,416.4 245.8,413.2" fill="#1f2441" stroke="#171a2e" stroke-width="1.2" stroke-linejoin="round"/><polygon points="288.4,398.0 293.4,394.3 307.1,393.0 325.7,393.1 329.1,400.0 329.3,413.3 326.5,415.7 304.1,416.6 295.0,416.8 288.3,413.0" fill="#1f2441" stroke="#171a2e" stroke-width="1.2" stroke-linejoin="round"/><polygon points="335.4,398.6 338.9,392.8 348.3,392.5 367.2,395.3 368.1,400.9 371.6,411.6 362.2,415.1 350.4,416.0 339.9,419.1 336.7,417.0" fill="#21263f" stroke="#171a2e" stroke-width="1.2" stroke-linejoin="round"/><polygon points="374.0,397.1 375.3,394.1 395.3,393.9 414.2,395.9 420.2,402.7 421.1,410.6 415.7,415.2 397.5,417.0 376.4,417.0 373.5,412.1" fill="#21263f" stroke="#171a2e" stroke-width="1.2" stroke-linejoin="round"/><polygon points="423.2,397.5 429.0,393.5 447.1,391.8 484.8,395.2 490.6,401.5 491.1,415.1 486.8,417.8 447.4,414.9 426.8,416.1 426.8,410.8" fill="#20253f" stroke="#171a2e" stroke-width="1.2" stroke-linejoin="round"/><polygon points="493.8,399.1 497.3,393.8 506.8,395.1 529.2,393.4 534.2,399.2 532.4,411.9 530.1,416.2 511.7,419.6 495.2,418.1 495.6,412.4" fill="#21263f" stroke="#171a2e" stroke-width="1.2" stroke-linejoin="round"/><polygon points="535.3,400.6 540.8,395.2 565.0,392.2 590.0,393.0 591.8,399.0 594.1,413.9 587.5,417.8 560.9,415.4 542.8,418.4 539.5,412.5" fill="#1f2441" stroke="#171a2e" stroke-width="1.2" stroke-linejoin="round"/><polygon points="594.4,398.9 600.5,393.8 622.8,392.2 633.3,391.5 638.7,397.6 637.6,410.8 632.3,416.1 615.6,419.8 600.9,416.6 598.1,414.0" fill="#1f2543" stroke="#171a2e" stroke-width="1.2" stroke-linejoin="round"/><polygon points="640.1,399.0 644.8,394.0 673.9,392.5 714.1,396.0 717.9,402.7 717.5,412.3 714.3,416.4 667.0,417.5 648.9,418.3 641.0,412.9" fill="#1f2441" stroke="#171a2e" stroke-width="1.2" stroke-linejoin="round"/><polygon points="723.0,393.3 723.8,391.2 751.2,392.6 785.2,395.4 790.5,399.8 791.7,415.0 789.9,418.9 743.9,414.8 727.4,416.5 719.7,412.6" fill="#20253f" stroke="#171a2e" stroke-width="1.2" stroke-linejoin="round"/><polygon points="795.2,401.2 800.4,396.4 828.7,393.4 865.4,396.6 871.4,402.9 871.3,410.4 865.0,414.6 835.1,416.5 799.3,417.4 797.6,412.6" fill="#1f2441" stroke="#171a2e" stroke-width="1.2" stroke-linejoin="round"/><polygon points="877.7,395.3 877.5,391.2 905.5,393.2 943.4,396.2 946.6,401.6 951.6,410.9 945.6,416.2 918.9,414.2 879.2,416.1 873.7,410.2" fill="#20253f" stroke="#171a2e" stroke-width="1.2" stroke-linejoin="round"/><polygon points="66.3,426.0 71.8,423.9 91.6,418.4 103.9,419.0 105.8,425.2 110.4,439.9 103.2,442.4 81.1,445.3 69.4,442.8 69.7,438.0" fill="#20253f" stroke="#171a2e" stroke-width="1.2" stroke-linejoin="round"/><polygon points="109.9,425.2 116.2,421.0 137.4,420.0 153.7,419.4 155.2,424.5 155.4,440.7 150.1,443.6 129.0,441.4 114.8,443.9 112.2,438.9" fill="#1f2441" stroke="#171a2e" stroke-width="1.2" stroke-linejoin="round"/><polygon points="163.0,428.3 167.4,423.4 190.3,420.0 214.0,419.9 215.4,425.6 220.0,441.1 215.0,443.4 189.1,445.8 163.7,442.3 161.4,436.9" fill="#21263f" stroke="#171a2e" stroke-width="1.2" stroke-linejoin="round"/><polygon points="225.0,426.0 228.7,422.1 251.1,420.8 283.3,419.3 288.9,424.5 285.5,437.7 279.4,442.7 247.9,446.0 227.8,446.1 220.6,440.3" fill="#1f2441" stroke="#171a2e" stroke-width="1.2" stroke-linejoin="round"/><polygon points="292.4,424.4 294.7,421.4 329.6,418.3 362.4,422.8 367.8,429.4 365.5,440.8 358.2,443.2 333.8,445.1 295.9,443.0 289.7,439.3" fill="#1f2543" stroke="#171a2e" stroke-width="1.2" stroke-linejoin="round"/><polygon points="372.3,424.0 373.8,418.9 398.1,418.3 409.6,423.7 418.1,429.3 413.1,442.6 409.4,445.9 387.7,441.8 375.1,442.5 370.4,439.3" fill="#20253f" stroke="#171a2e" stroke-width="1.2" stroke-linejoin="round"/><polygon points="423.0,420.8 424.2,418.1 441.8,420.0 466.5,418.3 467.0,423.7 470.3,440.4 464.0,442.6 434.9,444.0 422.0,444.1 421.1,441.8" fill="#21263f" stroke="#171a2e" stroke-width="1.2" stroke-linejoin="round"/><polygon points="472.3,424.2 475.3,419.0 502.5,423.1 536.3,419.8 538.4,424.6 541.6,442.1 532.1,446.2 504.8,444.5 473.2,444.5 473.1,440.9" fill="#1d223d" stroke="#171a2e" stroke-width="1.2" stroke-linejoin="round"/><polygon points="541.5,426.2 546.8,423.9 572.7,418.2 589.7,420.8 594.8,424.2 596.0,443.5 589.4,446.0 561.8,442.3 549.4,444.8 541.7,441.2" fill="#20253f" stroke="#171a2e" stroke-width="1.2" stroke-linejoin="round"/><polygon points="595.5,428.6 600.8,424.0 622.3,422.0 652.1,421.3 655.9,424.4 656.6,439.1 653.0,442.1 631.6,445.7 604.6,443.0 598.5,439.3" fill="#20253f" stroke="#171a2e" stroke-width="1.2" stroke-linejoin="round"/><polygon points="657.9,428.3 665.6,423.9 677.3,418.7 710.2,421.0 712.4,425.7 713.8,441.7 704.8,446.0 680.1,445.6 663.9,445.8 659.0,439.8" fill="#1f2441" stroke="#171a2e" stroke-width="1.2" stroke-linejoin="round"/><polygon points="717.7,425.6 722.2,421.4 738.8,420.4 746.5,422.2 754.0,428.7 754.3,439.1 749.9,443.0 737.3,443.7 719.3,441.7 717.4,435.7" fill="#1e2340" stroke="#171a2e" stroke-width="1.2" stroke-linejoin="round"/><polygon points="758.2,424.5 761.7,421.5 783.6,422.9 800.9,418.6 803.8,424.6 802.4,439.0 802.6,441.1 780.6,441.6 763.5,441.2 756.8,439.0" fill="#1f2543" stroke="#171a2e" stroke-width="1.2" stroke-linejoin="round"/><polygon points="809.9,426.6 813.0,422.1 845.9,420.4 883.1,419.1 882.6,422.4 887.1,440.9 881.4,444.1 852.7,446.3 810.7,446.8 808.1,440.9" fill="#1d223d" stroke="#171a2e" stroke-width="1.2" stroke-linejoin="round"/><polygon points="891.0,423.4 892.7,420.3 915.2,422.8 961.8,422.5 963.6,429.4 962.8,444.0 960.1,446.5 932.1,443.8 893.1,441.2 886.2,439.0" fill="#1f2441" stroke="#171a2e" stroke-width="1.2" stroke-linejoin="round"/><polygon points="33.1,452.2 39.3,448.6 73.0,449.2 99.7,446.0 103.2,450.1 101.7,469.6 97.7,472.8 57.6,473.0 40.7,473.1 34.9,470.8" fill="#1f2543" stroke="#171a2e" stroke-width="1.2" stroke-linejoin="round"/><polygon points="107.8,452.6 111.0,449.2 148.8,445.6 165.4,445.4 173.0,452.4 169.2,474.2 168.0,476.8 134.4,471.9 109.0,476.4 105.0,471.2" fill="#20253f" stroke="#171a2e" stroke-width="1.2" stroke-linejoin="round"/><polygon points="178.9,451.6 177.3,446.0 206.4,445.9 237.5,448.7 237.5,455.0 240.7,473.2 237.7,476.6 212.1,475.4 180.8,474.6 176.3,470.7" fill="#1f2441" stroke="#171a2e" stroke-width="1.2" stroke-linejoin="round"/><polygon points="242.5,447.8 249.8,445.7 269.0,448.9 286.5,445.5 288.0,451.6 285.2,469.6 282.5,473.7 257.2,476.7 245.5,471.9 244.6,466.9" fill="#1f2441" stroke="#171a2e" stroke-width="1.2" stroke-linejoin="round"/><polygon points="293.5,453.2 298.3,450.2 326.5,447.7 352.2,449.7 355.3,456.5 357.4,468.8 354.7,474.6 317.2,475.3 293.7,475.0 292.4,472.0" fill="#1d223d" stroke="#171a2e" stroke-width="1.2" stroke-linejoin="round"/><polygon points="363.2,450.2 363.6,446.1 406.2,449.8 430.4,447.3 438.9,450.3 438.1,471.0 430.8,474.5 385.8,472.5 366.8,474.4 362.2,471.7" fill="#1e2340" stroke="#171a2e" stroke-width="1.2" stroke-linejoin="round"/><polygon points="438.7,451.4 442.2,448.7 470.5,447.2 483.5,446.8 485.5,451.9 484.5,469.9 479.3,472.1 467.8,475.7 447.2,471.3 438.6,469.2" fill="#21263f" stroke="#171a2e" stroke-width="1.2" stroke-linejoin="round"/><polygon points="487.2,452.1 492.7,448.4 532.0,450.1 555.3,448.8 561.4,451.8 558.6,469.6 555.4,474.6 518.2,476.9 491.9,475.8 488.9,471.4" fill="#20253f" stroke="#171a2e" stroke-width="1.2" stroke-linejoin="round"/><polygon points="565.1,452.6 566.0,449.5 585.6,446.2 606.7,447.3 609.4,450.4 609.2,470.1 602.7,474.6 588.9,476.2 567.2,471.2 563.6,467.9" fill="#1e2340" stroke="#171a2e" stroke-width="1.2" stroke-linejoin="round"/><polygon points="611.7,452.6 619.9,448.1 651.8,446.4 682.9,447.4 683.3,453.0 683.3,473.9 680.2,476.3 636.4,473.7 620.0,475.5 617.0,473.4" fill="#1f2543" stroke="#171a2e" stroke-width="1.2" stroke-linejoin="round"/><polygon points="689.6,454.7 692.1,449.3 724.4,450.6 750.9,447.3 756.9,451.3 756.2,470.1 749.4,473.1 719.4,472.0 689.1,472.1 685.2,469.6" fill="#1f2543" stroke="#171a2e" stroke-width="1.2" stroke-linejoin="round"/><polygon points="758.2,452.7 763.4,450.4 799.9,446.6 823.4,448.8 825.2,454.7 827.2,468.6 820.0,471.4 794.9,471.7 760.2,474.5 758.1,468.9" fill="#1f2441" stroke="#171a2e" stroke-width="1.2" stroke-linejoin="round"/><polygon points="834.3,454.4 838.7,448.7 878.8,445.2 902.3,447.1 902.0,453.8 902.7,471.2 901.7,475.4 857.2,473.1 835.5,474.3 831.4,472.2" fill="#21263f" stroke="#171a2e" stroke-width="1.2" stroke-linejoin="round"/><polygon points="910.5,449.0 911.5,446.2 947.1,449.9 973.5,450.3 977.2,457.3 976.5,469.4 972.0,475.0 929.4,471.3 913.9,475.0 907.8,469.4" fill="#1f2441" stroke="#171a2e" stroke-width="1.2" stroke-linejoin="round"/><polygon points="25.8,480.9 33.7,475.2 55.0,478.2 73.7,477.7 76.2,481.6 72.8,494.8 67.6,500.2 46.7,501.6 29.3,501.1 24.5,496.5" fill="#1f2543" stroke="#171a2e" stroke-width="1.2" stroke-linejoin="round"/><polygon points="80.9,483.4 83.5,480.3 107.1,476.4 130.2,480.3 132.6,486.5 132.4,496.7 127.1,499.6 94.9,500.6 85.3,502.9 79.8,497.9" fill="#1d223d" stroke="#171a2e" stroke-width="1.2" stroke-linejoin="round"/><polygon points="140.0,484.7 142.2,480.0 171.5,479.4 187.0,480.1 191.7,485.3 191.2,497.7 187.3,501.6 162.6,500.0 140.0,503.5 136.2,499.9" fill="#1d223d" stroke="#171a2e" stroke-width="1.2" stroke-linejoin="round"/><polygon points="196.3,482.7 199.7,480.4 213.9,475.1 221.9,477.8 226.4,482.6 230.1,496.2 222.3,499.0 204.2,501.2 197.2,498.7 193.7,496.4" fill="#20253f" stroke="#171a2e" stroke-width="1.2" stroke-linejoin="round"/><polygon points="229.1,482.8 234.4,478.1 263.1,477.5 287.4,475.1 289.3,481.5 288.9,497.3 282.7,503.1 250.8,503.6 234.4,503.8 233.9,499.5" fill="#21263f" stroke="#171a2e" stroke-width="1.2" stroke-linejoin="round"/><polygon points="294.1,483.4 298.4,477.9 309.0,480.7 324.7,478.5 323.5,485.5 324.0,499.2 321.9,501.7 310.8,500.1 295.7,503.5 291.1,497.9" fill="#1f2441" stroke="#171a2e" stroke-width="1.2" stroke-linejoin="round"/><polygon points="332.9,479.8 332.1,476.0 354.0,475.7 364.1,479.9 370.1,483.4 366.6,499.8 360.6,503.2 351.5,502.5 334.3,501.2 331.7,495.8" fill="#1d223d" stroke="#171a2e" stroke-width="1.2" stroke-linejoin="round"/><polygon points="373.2,479.4 376.4,477.3 393.7,477.5 420.5,479.9 426.2,485.4 424.1,493.2 421.7,498.3 388.2,501.5 377.4,500.7 372.8,494.8" fill="#1f2441" stroke="#171a2e" stroke-width="1.2" stroke-linejoin="round"/><polygon points="430.2,482.6 435.7,478.9 443.0,475.7 458.3,479.7 460.2,485.0 463.2,498.7 458.7,503.9 443.8,502.2 434.7,501.8 430.8,498.5" fill="#1f2441" stroke="#171a2e" stroke-width="1.2" stroke-linejoin="round"/><polygon points="467.9,481.4 469.8,476.9 496.5,479.2 528.8,477.3 533.4,482.0 537.3,497.9 528.6,501.2 506.8,498.6 469.2,498.6 466.4,495.3" fill="#1f2543" stroke="#171a2e" stroke-width="1.2" stroke-linejoin="round"/><polygon points="541.4,483.8 545.3,480.5 563.1,475.2 575.4,478.5 576.9,483.8 576.0,498.8 569.9,503.0 555.1,499.0 544.8,502.7 540.8,497.6" fill="#21263f" stroke="#171a2e" stroke-width="1.2" stroke-linejoin="round"/><polygon points="578.7,478.5 584.9,475.4 602.4,476.2 622.1,479.0 623.9,484.1 623.0,501.0 620.6,503.4 607.4,501.8 585.2,498.9 580.6,495.5" fill="#1f2543" stroke="#171a2e" stroke-width="1.2" stroke-linejoin="round"/><polygon points="628.0,482.8 631.3,480.1 654.9,475.0 676.9,477.9 680.9,483.5 682.7,496.4 679.6,502.3 649.5,501.1 634.8,498.2 630.0,493.3" fill="#1f2543" stroke="#171a2e" stroke-width="1.2" stroke-linejoin="round"/><polygon points="688.9,482.7 689.7,477.9 709.8,480.4 750.5,477.5 750.8,483.3 751.6,497.6 746.0,501.8 707.1,500.8 691.3,503.4 687.3,500.8" fill="#21263f" stroke="#171a2e" stroke-width="1.2" stroke-linejoin="round"/><polygon points="754.1,482.1 759.0,476.5 785.6,480.7 798.5,479.6 803.2,482.9 800.5,496.1 798.7,498.7 773.9,499.2 758.5,502.4 758.6,497.5" fill="#1f2441" stroke="#171a2e" stroke-width="1.2" stroke-linejoin="round"/><polygon points="806.2,484.0 810.8,479.9 827.5,476.6 843.0,476.9 849.7,480.7 846.5,497.2 841.7,501.4 822.7,501.8 813.6,499.0 804.9,494.8" fill="#1f2441" stroke="#171a2e" stroke-width="1.2" stroke-linejoin="round"/><polygon points="849.5,481.4 855.8,479.2 885.2,477.7 901.6,477.2 903.1,482.9 904.0,499.4 898.9,502.4 877.3,502.3 853.5,501.0 853.3,497.5" fill="#1d223d" stroke="#171a2e" stroke-width="1.2" stroke-linejoin="round"/><polygon points="905.3,482.2 911.5,478.8 932.4,475.6 952.6,477.1 959.6,480.6 957.9,497.9 950.5,503.5 937.6,500.6 910.8,499.4 904.4,494.1" fill="#1d223d" stroke="#171a2e" stroke-width="1.2" stroke-linejoin="round"/><polygon points="20.8,507.6 25.2,504.4 53.0,507.2 70.6,505.1 74.0,511.7 72.6,527.1 68.9,530.0 53.1,526.5 29.2,526.3 25.1,521.6" fill="#1e2340" stroke="#171a2e" stroke-width="1.2" stroke-linejoin="round"/><polygon points="80.0,508.2 84.1,505.8 111.0,505.5 151.3,502.5 152.0,506.8 155.3,523.6 151.3,526.9 101.4,527.3 82.1,528.5 81.3,524.5" fill="#20253f" stroke="#171a2e" stroke-width="1.2" stroke-linejoin="round"/><polygon points="158.8,508.5 161.4,503.0 186.6,507.3 215.7,504.7 219.8,510.6 215.1,520.6 211.0,525.1 190.1,529.7 163.9,527.0 155.9,521.9" fill="#20253f" stroke="#171a2e" stroke-width="1.2" stroke-linejoin="round"/><polygon points="221.4,508.4 224.9,505.1 256.5,502.5 286.7,505.1 293.1,510.1 289.0,523.5 285.1,529.4 245.7,527.6 225.2,526.7 218.7,523.2" fill="#1e2340" stroke="#171a2e" stroke-width="1.2" stroke-linejoin="round"/><polygon points="292.8,513.0 300.3,507.5 322.0,504.1 358.1,502.5 361.7,507.9 363.1,524.6 358.1,529.3 334.3,530.1 298.6,530.2 293.5,526.2" fill="#1f2543" stroke="#171a2e" stroke-width="1.2" stroke-linejoin="round"/><polygon points="364.7,510.2 368.7,507.3 405.1,505.5 437.4,506.2 437.3,513.0 438.0,519.3 436.6,525.1 403.1,530.9 369.3,528.1 367.3,523.6" fill="#1f2543" stroke="#171a2e" stroke-width="1.2" stroke-linejoin="round"/><polygon points="441.3,512.0 448.9,506.4 462.2,505.0 475.8,504.6 478.3,510.8 479.0,521.3 474.4,526.5 455.3,528.3 447.3,525.7 441.9,523.3" fill="#20253f" stroke="#171a2e" stroke-width="1.2" stroke-linejoin="round"/><polygon points="480.0,509.1 488.6,506.5 499.8,506.8 525.5,508.0 526.1,513.2 531.0,523.3 522.1,528.7 501.1,525.8 486.9,527.5 480.7,524.5" fill="#21263f" stroke="#171a2e" stroke-width="1.2" stroke-linejoin="round"/><polygon points="534.7,512.5 537.0,507.0 566.2,503.7 584.7,505.9 588.9,512.2 588.8,527.7 582.1,531.0 550.0,529.4 534.5,531.0 535.4,528.2" fill="#1e2340" stroke="#171a2e" stroke-width="1.2" stroke-linejoin="round"/><polygon points="592.5,507.1 593.7,503.9 621.3,504.6 632.2,505.0 639.9,511.6 638.1,524.4 632.8,529.6 605.4,529.8 595.8,529.9 590.7,525.9" fill="#1e2340" stroke="#171a2e" stroke-width="1.2" stroke-linejoin="round"/><polygon points="645.5,506.7 648.8,502.2 672.3,506.4 713.2,506.4 717.5,511.2 714.4,525.9 709.0,530.4 679.4,529.1 647.7,527.8 644.7,523.0" fill="#1d223d" stroke="#171a2e" stroke-width="1.2" stroke-linejoin="round"/><polygon points="718.9,510.5 723.3,505.8 743.6,507.7 774.5,503.1 780.5,507.8 775.7,521.1 775.5,526.9 737.1,525.5 724.6,526.7 719.5,520.9" fill="#20253f" stroke="#171a2e" stroke-width="1.2" stroke-linejoin="round"/><polygon points="782.0,511.1 786.5,505.5 810.0,506.9 823.1,503.0 827.6,509.3 829.9,522.1 827.2,526.5 799.5,527.9 787.8,527.2 783.3,521.5" fill="#20253f" stroke="#171a2e" stroke-width="1.2" stroke-linejoin="round"/><polygon points="836.3,508.8 838.7,505.7 857.5,502.0 882.0,504.4 885.1,508.7 883.9,523.8 880.8,528.2 864.5,529.4 840.7,530.4 832.8,524.5" fill="#1e2340" stroke="#171a2e" stroke-width="1.2" stroke-linejoin="round"/><polygon points="890.7,511.0 891.2,507.0 923.7,503.1 939.0,502.6 945.9,509.3 949.0,527.0 938.2,530.9 913.8,527.6 893.9,529.6 888.3,525.2" fill="#1d223d" stroke="#171a2e" stroke-width="1.2" stroke-linejoin="round"/><polygon points="54.5,535.9 60.3,533.5 84.0,530.9 119.1,529.8 123.3,534.2 123.6,550.3 120.0,554.8 90.8,554.7 58.4,558.5 59.9,553.8" fill="#20253f" stroke="#171a2e" stroke-width="1.2" stroke-linejoin="round"/><polygon points="128.0,539.9 130.7,534.0 158.1,531.6 175.9,529.6 179.7,533.9 179.1,551.4 179.8,557.3 146.6,559.5 131.8,559.7 128.8,554.3" fill="#1d223d" stroke="#171a2e" stroke-width="1.2" stroke-linejoin="round"/><polygon points="183.3,538.4 187.7,534.2 199.7,531.9 224.1,534.6 224.2,538.1 224.7,553.7 223.0,559.0 203.9,554.5 192.7,558.2 186.6,553.8" fill="#20253f" stroke="#171a2e" stroke-width="1.2" stroke-linejoin="round"/><polygon points="232.6,539.7 231.2,534.3 252.9,530.6 293.8,534.0 295.0,538.4 298.4,552.1 291.3,554.7 259.0,558.1 235.3,558.9 229.2,554.6" fill="#1d223d" stroke="#171a2e" stroke-width="1.2" stroke-linejoin="round"/><polygon points="297.8,537.2 301.3,533.7 311.1,533.3 327.7,529.5 335.4,533.3 334.6,549.1 330.1,554.4 318.7,557.1 302.1,557.2 298.2,551.4" fill="#1f2441" stroke="#171a2e" stroke-width="1.2" stroke-linejoin="round"/><polygon points="338.1,536.4 341.9,533.2 357.3,534.8 384.9,531.5 388.5,535.0 390.9,555.4 383.4,559.4 356.2,554.3 343.4,556.2 334.7,552.3" fill="#1f2441" stroke="#171a2e" stroke-width="1.2" stroke-linejoin="round"/><polygon points="393.4,534.6 399.9,529.7 428.6,530.3 444.2,530.8 449.4,536.8 444.3,556.7 443.6,559.4 419.3,554.2 395.5,558.9 391.0,555.1" fill="#1d223d" stroke="#171a2e" stroke-width="1.2" stroke-linejoin="round"/><polygon points="451.5,532.7 453.3,529.6 478.3,533.7 511.6,534.0 516.4,537.6 519.0,551.5 512.6,554.8 473.6,554.1 457.6,556.5 451.6,550.7" fill="#21263f" stroke="#171a2e" stroke-width="1.2" stroke-linejoin="round"/><polygon points="521.6,537.8 528.8,534.0 543.2,533.4 562.3,530.2 563.7,535.1 564.8,550.3 558.2,555.0 536.4,559.9 528.6,559.7 520.0,557.6" fill="#20253f" stroke="#171a2e" stroke-width="1.2" stroke-linejoin="round"/><polygon points="566.2,537.6 571.5,533.6 602.1,532.8 615.7,531.8 623.0,537.1 621.8,553.5 617.4,556.6 587.4,559.2 574.5,556.8 570.6,553.8" fill="#1e2340" stroke="#171a2e" stroke-width="1.2" stroke-linejoin="round"/><polygon points="626.2,533.3 627.7,530.7 647.1,529.1 663.0,530.8 668.4,537.5 669.1,557.6 661.2,560.0 649.4,555.3 627.5,559.3 625.9,554.3" fill="#1f2441" stroke="#171a2e" stroke-width="1.2" stroke-linejoin="round"/><polygon points="672.0,538.8 675.5,533.2 699.6,534.3 738.5,529.4 739.8,535.3 738.5,548.7 733.3,554.6 704.5,558.7 673.9,557.8 669.8,553.0" fill="#20253f" stroke="#171a2e" stroke-width="1.2" stroke-linejoin="round"/><polygon points="744.9,536.8 748.5,531.1 786.9,531.2 806.3,533.5 808.2,537.3 809.1,555.9 807.4,558.5 772.6,556.1 747.0,556.2 744.4,552.0" fill="#21263f" stroke="#171a2e" stroke-width="1.2" stroke-linejoin="round"/><polygon points="812.1,536.4 816.7,531.2 832.6,529.2 848.5,532.4 852.9,536.4 854.8,554.2 847.8,559.8 832.4,557.2 818.5,556.8 812.0,551.8" fill="#1f2543" stroke="#171a2e" stroke-width="1.2" stroke-linejoin="round"/><polygon points="857.5,536.3 859.4,532.2 877.3,529.3 893.2,532.8 902.5,537.3 898.9,551.6 895.5,556.3 871.7,555.2 863.4,555.6 859.2,550.4" fill="#20253f" stroke="#171a2e" stroke-width="1.2" stroke-linejoin="round"/><polygon points="906.5,535.6 906.0,531.1 921.6,532.5 940.7,532.7 944.4,535.8 944.3,554.2 937.7,558.7 928.8,558.6 910.8,555.4 902.5,552.1" fill="#21263f" stroke="#171a2e" stroke-width="1.2" stroke-linejoin="round"/><polygon points="36.0,560.5 37.3,558.2 73.0,559.5 102.8,563.9 105.7,568.5 105.5,581.2 102.4,583.8 59.0,586.3 37.2,585.2 36.9,582.0" fill="#21263f" stroke="#171a2e" stroke-width="1.2" stroke-linejoin="round"/><polygon points="110.1,564.1 110.5,559.0 135.4,562.3 173.7,561.2 179.2,567.1 179.6,583.2 172.6,586.3 148.6,586.0 112.9,585.9 110.9,581.2" fill="#20253f" stroke="#171a2e" stroke-width="1.2" stroke-linejoin="round"/><polygon points="179.6,566.2 185.9,561.6 216.0,560.1 246.2,563.9 251.5,567.5 250.9,578.3 246.1,583.7 212.8,584.5 184.9,583.1 183.8,578.1" fill="#1d223d" stroke="#171a2e" stroke-width="1.2" stroke-linejoin="round"/><polygon points="252.2,563.2 257.5,561.0 286.9,559.3 305.7,563.0 310.5,566.4 310.8,582.2 305.4,585.4 277.8,582.3 259.0,584.1 257.4,578.9" fill="#1d223d" stroke="#171a2e" stroke-width="1.2" stroke-linejoin="round"/><polygon points="311.6,560.8 316.2,558.4 353.5,559.4 380.7,558.4 383.3,564.3 388.0,580.4 381.8,584.4 349.4,585.0 320.8,583.4 315.4,577.5" fill="#1d223d" stroke="#171a2e" stroke-width="1.2" stroke-linejoin="round"/><polygon points="392.2,564.4 393.0,562.3 410.4,559.0 419.1,559.2 425.0,565.0 428.2,579.5 421.6,584.7 410.4,586.6 394.8,587.9 389.9,582.8" fill="#20253f" stroke="#171a2e" stroke-width="1.2" stroke-linejoin="round"/><polygon points="430.7,564.2 435.1,561.4 461.8,563.3 476.5,559.8 483.6,563.4 480.4,578.6 475.3,583.5 445.4,584.2 434.6,586.2 431.5,582.0" fill="#21263f" stroke="#171a2e" stroke-width="1.2" stroke-linejoin="round"/><polygon points="485.3,565.4 487.0,560.5 506.7,563.9 535.8,561.3 538.2,566.8 536.2,584.3 536.5,586.6 515.8,582.3 487.1,583.3 487.8,579.9" fill="#20253f" stroke="#171a2e" stroke-width="1.2" stroke-linejoin="round"/><polygon points="543.6,566.1 548.9,563.4 586.0,561.9 606.7,562.4 608.4,566.4 610.1,582.6 605.4,585.1 565.2,588.0 549.4,582.8 544.1,577.7" fill="#1e2340" stroke="#171a2e" stroke-width="1.2" stroke-linejoin="round"/><polygon points="611.0,562.1 615.7,558.7 648.5,562.6 668.4,562.7 671.0,566.8 670.4,582.4 667.3,587.9 640.8,585.2 619.2,585.3 610.8,581.8" fill="#1f2441" stroke="#171a2e" stroke-width="1.2" stroke-linejoin="round"/><polygon points="673.3,563.0 678.3,559.5 696.3,562.1 719.0,561.9 723.4,568.1 721.5,583.9 719.0,587.2 695.4,584.6 677.0,585.1 672.8,581.9" fill="#20253f" stroke="#171a2e" stroke-width="1.2" stroke-linejoin="round"/><polygon points="728.6,561.6 731.6,559.5 749.3,559.1 770.5,559.2 772.4,565.6 773.0,581.2 770.2,586.2 741.6,584.1 731.2,585.8 725.7,582.3" fill="#20253f" stroke="#171a2e" stroke-width="1.2" stroke-linejoin="round"/><polygon points="778.2,566.4 780.0,563.5 808.6,563.6 820.2,558.2 826.2,565.1 825.9,581.7 822.6,586.0 799.7,586.1 783.4,583.2 774.3,577.6" fill="#1f2441" stroke="#171a2e" stroke-width="1.2" stroke-linejoin="round"/><polygon points="829.6,563.4 832.9,559.7 843.8,563.6 859.5,563.8 859.4,569.3 864.6,579.7 854.8,584.2 838.7,585.2 832.2,586.3 829.3,583.0" fill="#1f2543" stroke="#171a2e" stroke-width="1.2" stroke-linejoin="round"/><polygon points="864.3,564.7 871.0,561.6 887.4,558.6 892.3,561.6 898.7,568.3 901.3,580.0 894.7,585.1 875.9,586.8 867.4,585.4 868.7,580.8" fill="#20253f" stroke="#171a2e" stroke-width="1.2" stroke-linejoin="round"/><polygon points="900.2,563.9 909.0,560.1 941.4,561.3 962.7,558.7 968.7,562.7 968.8,580.8 962.2,583.3 933.2,584.8 906.6,584.1 900.4,581.8" fill="#21263f" stroke="#171a2e" stroke-width="1.2" stroke-linejoin="round"/><polygon points="64.4,594.8 68.6,589.0 103.2,586.3 123.8,587.4 123.3,591.0 122.5,610.1 121.2,615.2 87.5,615.4 66.0,612.2 63.5,609.3" fill="#1d223d" stroke="#171a2e" stroke-width="1.2" stroke-linejoin="round"/><polygon points="126.6,592.0 131.7,588.7 158.2,591.2 173.2,591.0 177.1,594.6 173.1,607.9 170.7,613.6 146.7,615.9 130.6,614.1 129.7,609.3" fill="#1e2340" stroke="#171a2e" stroke-width="1.2" stroke-linejoin="round"/><polygon points="181.5,594.4 185.9,588.9 217.7,587.2 241.5,588.9 240.5,592.8 243.3,610.5 238.8,613.6 210.5,614.3 183.4,610.7 177.3,605.8" fill="#1d223d" stroke="#171a2e" stroke-width="1.2" stroke-linejoin="round"/><polygon points="247.7,594.2 250.4,590.3 266.3,588.2 297.8,588.4 299.0,593.3 299.9,610.0 293.7,615.1 265.9,613.2 251.0,613.3 248.8,610.3" fill="#20253f" stroke="#171a2e" stroke-width="1.2" stroke-linejoin="round"/><polygon points="300.1,595.4 307.7,591.9 329.0,586.8 359.8,589.4 361.8,593.3 364.0,607.9 358.0,611.0 333.9,611.9 304.8,612.3 304.8,608.9" fill="#21263f" stroke="#171a2e" stroke-width="1.2" stroke-linejoin="round"/><polygon points="368.9,591.2 373.4,589.1 406.6,589.6 427.3,586.4 428.9,592.4 426.2,609.4 425.5,613.2 400.9,615.5 371.4,610.9 365.3,607.9" fill="#21263f" stroke="#171a2e" stroke-width="1.2" stroke-linejoin="round"/><polygon points="433.7,590.5 436.3,586.1 477.3,586.6 497.0,590.1 504.5,596.2 502.9,609.3 496.2,611.8 458.7,610.2 439.0,615.5 431.8,612.0" fill="#1f2543" stroke="#171a2e" stroke-width="1.2" stroke-linejoin="round"/><polygon points="506.7,592.6 511.2,589.3 530.5,590.5 568.0,587.6 572.0,591.7 570.3,611.7 569.0,614.8 542.9,612.8 513.2,610.7 506.4,606.9" fill="#20253f" stroke="#171a2e" stroke-width="1.2" stroke-linejoin="round"/><polygon points="579.1,593.9 578.1,588.8 624.1,586.8 650.4,588.1 651.2,591.2 653.5,609.9 648.9,615.8 601.9,615.0 578.3,610.3 574.8,607.1" fill="#1d223d" stroke="#171a2e" stroke-width="1.2" stroke-linejoin="round"/><polygon points="657.9,595.7 661.2,590.3 687.9,589.1 704.8,586.8 709.6,593.0 707.1,610.2 706.0,615.1 675.1,610.7 661.8,613.4 658.9,607.9" fill="#1f2441" stroke="#171a2e" stroke-width="1.2" stroke-linejoin="round"/><polygon points="712.9,591.5 716.2,589.1 746.9,591.9 778.0,589.4 782.9,595.1 782.7,610.4 774.7,613.7 737.8,611.2 716.6,613.9 711.8,611.5" fill="#1f2441" stroke="#171a2e" stroke-width="1.2" stroke-linejoin="round"/><polygon points="784.6,589.9 790.0,586.4 819.3,590.5 847.5,590.5 847.6,595.3 848.3,605.0 844.4,610.3 821.2,611.3 788.0,610.4 783.5,606.0" fill="#1f2543" stroke="#171a2e" stroke-width="1.2" stroke-linejoin="round"/><polygon points="853.6,593.9 856.1,588.5 897.4,589.3 920.0,587.1 922.5,591.3 922.9,610.5 919.8,614.6 890.7,614.7 858.5,615.6 855.0,613.1" fill="#1d223d" stroke="#171a2e" stroke-width="1.2" stroke-linejoin="round"/><polygon points="931.2,589.1 931.2,586.6 942.1,591.9 963.9,589.6 968.6,596.1 966.1,610.0 963.9,614.7 944.3,614.5 932.4,613.8 929.5,610.0" fill="#1f2543" stroke="#171a2e" stroke-width="1.2" stroke-linejoin="round"/><polygon points="39.0,619.4 45.5,615.7 79.3,617.3 100.0,617.3 103.8,620.5 102.9,635.5 99.9,638.4 60.8,642.3 47.3,640.6 43.1,637.6" fill="#20253f" stroke="#171a2e" stroke-width="1.2" stroke-linejoin="round"/><polygon points="109.1,619.0 113.6,616.9 135.7,614.5 150.3,619.4 154.5,624.0 158.7,638.5 150.6,640.7 124.9,637.6 109.2,642.7 108.7,637.9" fill="#1d223d" stroke="#171a2e" stroke-width="1.2" stroke-linejoin="round"/><polygon points="159.1,620.7 164.5,617.4 200.0,617.5 224.4,617.7 229.7,622.1 229.0,634.8 222.8,637.7 195.9,637.1 164.7,642.3 161.4,639.1" fill="#1f2441" stroke="#171a2e" stroke-width="1.2" stroke-linejoin="round"/><polygon points="231.9,621.0 234.8,619.0 267.9,615.2 294.9,617.6 296.8,622.2 298.0,636.3 290.2,639.2 269.3,641.7 238.4,638.6 231.2,634.9" fill="#1d223d" stroke="#171a2e" stroke-width="1.2" stroke-linejoin="round"/><polygon points="303.9,624.5 307.9,619.2 321.6,618.7 342.3,619.3 343.2,626.2 344.3,635.7 339.0,641.0 316.6,638.2 306.1,639.5 302.3,636.4" fill="#1e2340" stroke="#171a2e" stroke-width="1.2" stroke-linejoin="round"/><polygon points="351.5,620.6 354.8,614.7 382.0,619.8 411.7,616.6 414.5,620.1 413.4,640.2 410.7,642.8 373.9,639.3 355.5,640.2 351.1,634.6" fill="#1f2441" stroke="#171a2e" stroke-width="1.2" stroke-linejoin="round"/><polygon points="421.1,622.6 420.4,619.1 437.6,615.4 464.1,614.0 467.7,617.8 469.1,637.2 460.6,639.7 433.4,637.8 424.3,640.6 418.0,635.0" fill="#1f2441" stroke="#171a2e" stroke-width="1.2" stroke-linejoin="round"/><polygon points="471.8,619.6 473.0,616.9 499.1,618.4 531.5,615.6 535.9,620.1 536.7,636.7 527.7,640.6 490.5,637.2 478.5,641.8 469.5,636.0" fill="#1e2340" stroke="#171a2e" stroke-width="1.2" stroke-linejoin="round"/><polygon points="537.0,619.1 542.2,615.3 553.3,618.2 571.0,616.0 572.7,621.5 575.7,633.4 567.2,638.8 559.8,640.4 540.1,639.0 536.1,633.3" fill="#1d223d" stroke="#171a2e" stroke-width="1.2" stroke-linejoin="round"/><polygon points="579.8,623.9 580.4,618.6 627.0,619.3 646.6,618.7 651.8,622.1 653.2,636.0 647.6,641.5 608.1,640.5 580.9,640.5 575.7,634.5" fill="#21263f" stroke="#171a2e" stroke-width="1.2" stroke-linejoin="round"/><polygon points="660.0,623.2 661.1,618.9 682.9,615.0 708.6,616.8 715.6,623.8 712.1,633.8 706.1,638.8 676.3,640.2 662.6,642.2 655.9,639.4" fill="#21263f" stroke="#171a2e" stroke-width="1.2" stroke-linejoin="round"/><polygon points="719.1,621.5 723.8,616.2 734.0,617.2 747.7,615.9 753.3,622.5 752.4,634.6 746.1,638.1 736.4,637.5 722.7,640.8 717.4,636.7" fill="#1f2441" stroke="#171a2e" stroke-width="1.2" stroke-linejoin="round"/><polygon points="752.6,621.6 761.2,617.5 788.7,614.1 808.5,617.0 811.1,623.6 813.9,634.5 805.6,638.9 771.8,639.6 757.0,639.7 756.6,635.7" fill="#1d223d" stroke="#171a2e" stroke-width="1.2" stroke-linejoin="round"/><polygon points="813.7,617.9 820.3,614.5 849.2,616.5 878.0,614.8 879.3,619.4 883.0,632.1 878.0,638.0 854.2,642.8 822.8,638.1 814.9,633.4" fill="#1f2441" stroke="#171a2e" stroke-width="1.2" stroke-linejoin="round"/><polygon points="887.9,619.7 888.5,617.4 908.6,618.9 914.2,617.2 922.4,620.4 920.1,637.0 917.2,640.3 906.0,641.1 889.0,638.0 883.8,635.3" fill="#1d223d" stroke="#171a2e" stroke-width="1.2" stroke-linejoin="round"/><polygon points="928.0,619.9 928.6,617.8 952.8,618.5 973.8,619.5 979.7,624.7 980.7,638.2 974.8,641.0 957.7,638.1 931.2,641.8 925.5,638.9" fill="#1f2543" stroke="#171a2e" stroke-width="1.2" stroke-linejoin="round"/><polygon points="48.1,647.9 48.3,642.2 66.1,642.5 92.2,643.6 96.1,646.7 95.1,664.1 92.3,669.2 66.1,671.1 48.0,668.9 48.2,664.4" fill="#20253f" stroke="#171a2e" stroke-width="1.2" stroke-linejoin="round"/><polygon points="104.0,649.2 102.9,643.5 131.2,644.1 141.6,641.1 148.2,647.6 146.0,664.2 143.9,666.8 121.5,668.1 105.4,667.6 101.7,665.5" fill="#1f2441" stroke="#171a2e" stroke-width="1.2" stroke-linejoin="round"/><polygon points="148.6,649.5 152.7,643.7 174.9,643.5 210.5,644.8 215.7,650.0 216.1,669.8 211.1,671.8 173.4,670.2 155.6,667.8 149.3,662.5" fill="#1f2543" stroke="#171a2e" stroke-width="1.2" stroke-linejoin="round"/><polygon points="220.9,646.4 225.5,643.5 248.4,646.2 259.8,641.9 261.5,647.5 261.3,665.9 258.5,670.2 245.8,670.5 221.7,671.7 220.3,668.3" fill="#1e2340" stroke="#171a2e" stroke-width="1.2" stroke-linejoin="round"/><polygon points="270.5,650.1 270.8,644.5 285.1,645.0 313.1,641.3 317.4,645.6 315.4,666.8 311.6,669.5 285.9,666.7 273.3,670.4 266.8,668.1" fill="#20253f" stroke="#171a2e" stroke-width="1.2" stroke-linejoin="round"/><polygon points="322.0,648.8 321.3,645.2 349.2,643.6 377.8,641.5 380.3,645.1 381.1,662.8 374.1,666.1 350.9,671.0 325.5,666.9 319.6,662.4" fill="#1d223d" stroke="#171a2e" stroke-width="1.2" stroke-linejoin="round"/><polygon points="383.5,650.5 386.8,644.8 414.9,641.3 443.0,642.4 446.5,647.0 445.9,663.7 442.0,668.5 411.8,668.8 388.8,668.6 384.8,664.5" fill="#1f2543" stroke="#171a2e" stroke-width="1.2" stroke-linejoin="round"/><polygon points="453.8,649.5 453.9,644.1 479.5,644.7 517.2,644.9 518.7,651.2 519.6,665.9 516.8,671.9 490.7,668.3 457.9,668.1 450.2,664.7" fill="#21263f" stroke="#171a2e" stroke-width="1.2" stroke-linejoin="round"/><polygon points="523.4,648.3 524.1,643.3 547.0,642.3 562.1,646.1 566.0,652.1 565.4,664.2 559.8,667.1 548.5,668.1 525.0,666.8 521.9,664.5" fill="#21263f" stroke="#171a2e" stroke-width="1.2" stroke-linejoin="round"/><polygon points="570.6,644.4 572.5,641.6 595.1,642.2 620.7,645.4 620.2,649.1 620.3,667.6 616.3,670.2 585.6,670.1 574.8,669.4 569.5,666.9" fill="#20253f" stroke="#171a2e" stroke-width="1.2" stroke-linejoin="round"/><polygon points="626.4,648.5 628.6,642.9 647.2,644.3 679.6,642.5 685.3,649.1 688.6,665.0 683.3,669.7 653.6,669.3 629.1,671.2 625.0,666.7" fill="#20253f" stroke="#171a2e" stroke-width="1.2" stroke-linejoin="round"/><polygon points="689.2,651.2 691.2,646.2 711.8,642.3 721.1,642.0 723.4,647.2 725.6,662.4 720.7,667.0 707.3,669.0 693.9,670.6 691.9,664.8" fill="#1e2340" stroke="#171a2e" stroke-width="1.2" stroke-linejoin="round"/><polygon points="726.1,648.0 733.8,643.2 746.4,645.9 779.1,643.6 781.4,649.6 781.5,667.5 775.1,671.0 746.0,666.3 730.0,669.7 728.3,665.3" fill="#1f2441" stroke="#171a2e" stroke-width="1.2" stroke-linejoin="round"/><polygon points="785.5,647.7 788.0,641.8 804.2,642.0 823.6,642.1 824.4,646.1 828.5,665.6 820.0,670.9 808.1,667.5 787.3,669.3 787.3,666.9" fill="#20253f" stroke="#171a2e" stroke-width="1.2" stroke-linejoin="round"/><polygon points="830.5,645.3 834.1,642.3 870.4,642.4 900.0,643.1 905.9,647.3 902.0,663.8 898.8,666.5 862.5,669.8 832.0,666.7 827.1,664.2" fill="#1f2441" stroke="#171a2e" stroke-width="1.2" stroke-linejoin="round"/><polygon points="906.8,650.7 912.4,645.3 933.6,642.6 942.1,644.3 945.8,649.6 946.3,664.6 945.4,667.4 931.5,667.6 911.0,670.0 908.8,667.8" fill="#1e2340" stroke="#171a2e" stroke-width="1.2" stroke-linejoin="round"/></g></g><rect x="150.5" y="313" width="167.5" height="212" rx="5" fill="#fefefe"/><g clip-path="url(#dc)"><path d="M71,561 C76.9,562.2 98.0,569.5 131.0,569.5 C295.9,569.5 389.4,411.0 452.5,411.0 C508.7,411.0 488.9,490.0 567.5,490.0 C674.4,490.0 735.1,391.7 776.0,391.7 C826.7,391.7 859.2,489.0 898,489 C929.5,489.0 909.6,391.8 940.0,313.5" fill="none" stroke="url(#cg)" stroke-width="4.6" stroke-linecap="round"/><path d="M71,561 C76.9,562.2 98.0,569.5 131.0,569.5 C295.9,569.5 389.4,411.0 452.5,411.0 C508.7,411.0 488.9,490.0 567.5,490.0 C674.4,490.0 735.1,391.7 776.0,391.7 C826.7,391.7 859.2,489.0 898,489 C929.5,489.0 909.6,391.8 940.0,313.5" fill="none" stroke="#2a62b8" stroke-opacity="0.55" stroke-width="0.8"/></g><rect x="71" y="313.5" width="869" height="256.5" fill="none" stroke="#3a78d8" stroke-width="0.9"/><line x1="505.5" y1="288" x2="505.5" y2="313" stroke="#3d7ede" stroke-width="1"/><circle cx="71" cy="313.5" r="4" fill="#4a8ee0" stroke="#e8f0ff" stroke-width="1.3"/><circle cx="505.5" cy="313.5" r="4" fill="#4a8ee0" stroke="#e8f0ff" stroke-width="1.3"/><circle cx="940" cy="313.5" r="4" fill="#4a8ee0" stroke="#e8f0ff" stroke-width="1.3"/><circle cx="71" cy="441.5" r="4" fill="#4a8ee0" stroke="#e8f0ff" stroke-width="1.3"/><circle cx="940" cy="441.5" r="4" fill="#4a8ee0" stroke="#e8f0ff" stroke-width="1.3"/><circle cx="71" cy="570" r="4" fill="#4a8ee0" stroke="#e8f0ff" stroke-width="1.3"/><circle cx="505.5" cy="570" r="4" fill="#4a8ee0" stroke="#e8f0ff" stroke-width="1.3"/><circle cx="940" cy="570" r="4" fill="#4a8ee0" stroke="#e8f0ff" stroke-width="1.3"/><circle cx="505.5" cy="288" r="3.6" fill="#c8e4ff" stroke="#4a8ee0" stroke-width="1.2"/></g></svg>
<div class="a" style="left:1043px;top:104px;width:16px;height:548px;background:#ececec"></div>
<svg class="a" style="left:1047px;top:107px;" width="9" height="8" viewBox="0 0 9 8"><path d="M0.5,7 L8,7 L4.25,0.5 Z" fill="#a8a8a8"/></svg>
<svg class="a" style="left:1047px;top:641px;" width="9" height="8" viewBox="0 0 9 8"><path d="M0.5,1 L8,1 L4.25,7.5 Z" fill="#a8a8a8"/></svg>
<div class="a" style="left:1048px;top:281px;width:6.5px;height:154px;background:#a6a6a6;border-radius:3.25px"></div>
<div class="a" style="left:32px;top:652px;width:1027px;height:15px;background:#ececec"></div>
<svg class="a" style="left:36px;top:655px;" width="8" height="9" viewBox="0 0 8 9"><path d="M7,0.5 L7,8.5 L0.5,4.5 Z" fill="#b0b0b0"/></svg>
<svg class="a" style="left:1032px;top:655px;" width="8" height="9" viewBox="0 0 8 9"><path d="M1,0.5 L1,8.5 L7.5,4.5 Z" fill="#b0b0b0"/></svg>
<div class="a" style="left:407px;top:657px;width:293px;height:6px;background:#a6a6a6;border-radius:3px"></div>
<svg class="a" style="left:0;top:0" width="1280" height="720" viewBox="0 0 1280 720"><defs><linearGradient id="gb" x1="0" x2="1" y1="0" y2="0"><stop offset="0" stop-color="#1ef2fa"/><stop offset="0.5" stop-color="#6a7af2"/><stop offset="1" stop-color="#b208ea"/></linearGradient>
<filter id="ps" x="-10%" y="-10%" width="120%" height="120%"><feGaussianBlur stdDeviation="1.2"/></filter></defs>
<path d="M79,307.5 L79,91 Q79,89 81,89 L206,89 L214,81 L222,89 L347,89 Q349,89 349,91 L349,307.5 Z" fill="#b0b0b0" filter="url(#ps)" opacity="0.7"/>
<path d="M79.5,307 L79.5,91.5 Q79.5,89.5 81.5,89.5 L206.5,89.5 L214,82 L221.5,89.5 L346.5,89.5 Q348.5,89.5 348.5,91.5 L348.5,307 Z" fill="#efefef" stroke="#c6c6c6" stroke-width="1"/>
</svg>
<div class="a" style="left:80px;top:92px;width:31px;height:20px;background:#e3e3e3"></div>
<div class="a" style="left:112px;top:92px;width:56px;height:20px;background:#e3e3e3"></div>
<div class="a" style="left:169px;top:92px;width:37px;height:20px;background:#e3e3e3"></div>
<div class="t" style="left:87.5px;top:98.8px;font-size:8.51px;color:#333;">Нет</div>
<div class="t" style="left:120.7px;top:98.3px;font-size:9.12px;color:#333;">Образцы</div>
<div class="t" style="left:177.5px;top:98.6px;font-size:8.7px;color:#333;">Цвет</div>
<div class="t" style="left:215.6px;top:98.5px;font-size:8.85px;color:#333;">Градиент</div>
<svg class="a" style="left:272px;top:95px;" width="16" height="16" viewBox="0 0 16 16"><path d="M1.5,14.5 L9,7" stroke="#b89a70" stroke-width="1.6"/><path d="M1.5,14.5 L9,7" stroke="#e8d8c0" stroke-width="0.6"/><ellipse cx="11" cy="5" rx="3.3" ry="3.8" transform="rotate(45 11 5)" fill="#d8962a"/><circle cx="10.2" cy="4.2" r="1.2" fill="#f0c070"/></svg>
<svg class="a" style="left:288px;top:96px;" width="14" height="14" viewBox="0 0 14 14"><circle cx="7" cy="7" r="5.8" fill="#fff" stroke="#777" stroke-width="0.9"/></svg>
<div class="a" style="left:87px;top:120px;width:256px;height:48px;background:linear-gradient(90deg,#1ef2fa 0%,#42b8f6 25%,#6a7af2 50%,#9a40ee 75%,#b208ea 100%)"></div>
<div class="a" style="left:88px;top:142.5px;width:255px;height:3px;background:rgba(225,225,235,0.85)"></div>
<div class="a" style="left:214px;top:139px;width:4px;height:11px;background:#d4d4dc;border:0.5px solid #b8b8c8"></div>
<svg class="a" style="left:80px;top:136px;" width="16" height="16" viewBox="0 0 16 16"><circle cx="8" cy="8" r="5.6" fill="#1ef0f8" stroke="#fff" stroke-width="1.6"/></svg>
<svg class="a" style="left:335px;top:136px;" width="16" height="16" viewBox="0 0 16 16"><circle cx="8.5" cy="8" r="4.6" fill="#b010e8" stroke="#fff" stroke-width="1.6"/></svg>
<div class="t" style="right:1127.8px;top:175.9px;font-size:8.74px;color:#3a3a3a;">Тип:</div>
<div class="a" style="left:155.5px;top:172.5px;width:83px;height:14.5px;background:#fff;border:1px solid #d0d0d0;border-radius:2px"></div>
<div class="t" style="left:160.0px;top:175.5px;font-size:9.13px;color:#333;">Линейный</div>
<svg class="a" style="left:227.5px;top:177.75px;" width="7" height="4" viewBox="0 0 7 4"><path d="M1,0.6 L6.2,0.6 L3.6,3.6 Z" fill="#111"/></svg>
<div class="t" style="right:1127.8px;top:195.4px;font-size:9.24px;color:#3a3a3a;">Положение:</div>
<div class="a" style="left:155.5px;top:191.5px;width:49.5px;height:15.5px;background:#f2f2f2;border:1px solid #d0d0d0;border-radius:2px"></div>
<div class="t" style="left:160.0px;top:196.0px;font-size:8.53px;color:#333;">0 %</div>
<svg class="a" style="left:194.0px;top:197.25px;" width="7" height="4" viewBox="0 0 7 4"><path d="M1,0.6 L6.2,0.6 L3.6,3.6 Z" fill="#aaa"/></svg>
<div class="t" style="right:990.1px;top:196.0px;font-size:8.85px;color:#3a3a3a;">Средняя точка:</div>
<div class="a" style="left:293.5px;top:191.5px;width:49.5px;height:15.5px;background:#fff;border:1px solid #d0d0d0;border-radius:2px"></div>
<div class="t" style="left:298.0px;top:195.8px;font-size:8.69px;color:#333;">50 %</div>
<svg class="a" style="left:332.0px;top:197.25px;" width="7" height="4" viewBox="0 0 7 4"><path d="M1,0.6 L6.2,0.6 L3.6,3.6 Z" fill="#111"/></svg>
<div class="t" style="right:1127.8px;top:215.8px;font-size:8.7px;color:#3a3a3a;">Цвет:</div>
<div class="a" style="left:155.5px;top:211px;width:49.5px;height:15.5px;background:#1ef4f8;border-radius:2px"></div>
<div class="t" style="right:990.1px;top:215.5px;font-size:9.09px;color:#3a3a3a;">Непрозрачность:</div>
<div class="a" style="left:293.5px;top:211.5px;width:49.5px;height:15.5px;background:#fff;border:1px solid #d0d0d0;border-radius:2px"></div>
<div class="t" style="left:298.0px;top:215.8px;font-size:8.71px;color:#333;">100 %</div>
<svg class="a" style="left:332.0px;top:217.25px;" width="7" height="4" viewBox="0 0 7 4"><path d="M1,0.6 L6.2,0.6 L3.6,3.6 Z" fill="#111"/></svg>
<div class="t" style="right:1127.8px;top:235.4px;font-size:8.99px;color:#3a3a3a;">Прекращение:</div>
<div class="btn" style="left:155.5px;top:231px;width:47.5px;height:15.5px;background:#fff"></div>
<div class="t" style="left:179.5px;transform:translateX(-50%);top:235.2px;font-size:9.2px;color:#333;">Вставить</div>
<div class="btn" style="left:207.5px;top:231px;width:61px;height:15.5px;background:#fff"></div>
<div class="t" style="left:237.8px;transform:translateX(-50%);top:234.6px;font-size:9.9px;color:#333;">Копировать</div>
<div class="a" style="left:273px;top:231px;width:44px;height:15.5px;background:#f4f4f4;border-radius:2px"></div>
<div class="t" style="left:294.8px;transform:translateX(-50%);top:235.0px;font-size:9.46px;color:#b4b4b4;">Удалить</div>
<div class="t" style="right:1127.8px;top:254.1px;font-size:8.84px;color:#3a3a3a;">Градиент:</div>
<div class="btn" style="left:155.5px;top:250.5px;width:61.5px;height:15px;background:#fff"></div>
<div class="t" style="left:186.2px;transform:translateX(-50%);top:253.4px;font-size:9.74px;color:#333;">Обратить</div>
<div class="a" style="left:1059px;top:84px;width:221px;height:583px;background:#ececec"></div>
<div class="a" style="left:1059px;top:84px;width:221px;height:20px;background:#c3c3c3;border-top:1px solid #a8a8a8"></div>
<div class="a" style="left:1060px;top:104px;width:220px;height:50px;background:#efefef"></div>
<div class="t" style="left:1066.0px;top:89.4px;font-size:9px;color:#999;">¦</div>
<div class="t" style="left:1078.0px;top:90.4px;font-size:8.93px;color:#555;">Цвет</div>
<div class="a" style="left:1102px;top:85px;width:47px;height:19px;background:#efefef"></div>
<div class="t" style="left:1106.2px;top:90.4px;font-size:8.98px;color:#333;">Образцы</div>
<div class="t" style="left:1152.8px;top:90.3px;font-size:9.05px;color:#555;">Обводка</div>
<div class="a" style="left:1193.5px;top:89px;width:1px;height:12px;background:#aaa"></div>
<div class="t" style="left:1197.8px;top:90.6px;font-size:8.75px;color:#555;">Кисти</div>
<svg class="a" style="left:1264px;top:89px;" width="10" height="10" viewBox="0 0 10 10"><rect x="0.5" y="2" width="6" height="1.2" fill="#888"/><rect x="0.5" y="4.2" width="6" height="1.2" fill="#888"/><rect x="0.5" y="6.4" width="6" height="1.2" fill="#888"/><rect x="7.5" y="8" width="1.5" height="1" fill="#666"/></svg>
<svg class="a" style="left:1066px;top:112px;" width="40" height="42" viewBox="0 0 40 42"><defs><linearGradient id="rg" x1="0" x2="1"><stop offset="0" stop-color="#1ee4f8"/><stop offset="0.5" stop-color="#5a84f4"/><stop offset="1" stop-color="#a020ee"/></linearGradient><clipPath id="bc"><circle cx="27.4" cy="26.6" r="8.8"/></clipPath><clipPath id="sc"><circle cx="12" cy="32" r="4.3"/></clipPath></defs>
<circle cx="16.4" cy="16.3" r="7" fill="none" stroke="url(#rg)" stroke-width="5.4"/>
<circle cx="27.4" cy="26.6" r="9" fill="#fcfcfc" stroke="#8a8a8a" stroke-width="0.9"/>
<path d="M19,34 L35.5,17.5" stroke="#f02820" stroke-width="3.6" clip-path="url(#bc)"/>
<circle cx="12" cy="32" r="4.6" fill="#fcfcfc" stroke="#777" stroke-width="0.9"/>
<path d="M8,36 L16,28" stroke="#e83030" stroke-width="1.2" clip-path="url(#sc)"/>
<path d="M29.5,9.3 Q34.5,9 35.8,14" fill="none" stroke="#555" stroke-width="1.1"/><path d="M27.3,9.6 L30.6,7.6 L30.4,11.4 Z M36.2,16 L33.9,13 L37.6,12.8 Z" fill="#555"/></svg>
<svg class="a" style="left:1111px;top:115px;" width="17" height="17" viewBox="0 0 17 17"><path d="M1.5,15 L10,6.5" stroke="#c0a888" stroke-width="1.6"/><path d="M1.5,15 L10,6.5" stroke="#f0e8e0" stroke-width="0.5"/><ellipse cx="12" cy="4.6" rx="3" ry="3.6" transform="rotate(45 12 4.6)" fill="#d8962a"/><circle cx="11.2" cy="3.8" r="1.1" fill="#f4c878"/></svg>
<svg class="a" style="left:1127px;top:116px;" width="14" height="14" viewBox="0 0 14 14"><circle cx="7" cy="6.8" r="6" fill="#c84aa8"/></svg>
<div class="t" style="left:1151.9px;top:128.3px;font-size:9.07px;color:#3a3a3a;">Непрозрачность:</div>
<div class="a" style="left:1227px;top:123px;width:49px;height:16.5px;background:#fff;border:1px solid #d0d0d0;border-radius:2px"></div>
<div class="t" style="left:1231.2px;top:128.1px;font-size:8.73px;color:#333;">100 %</div>
<svg class="a" style="left:1266px;top:129.5px;" width="7" height="4" viewBox="0 0 7 4"><path d="M1,0.6 L6.2,0.6 L3.6,3.6 Z" fill="#111"/></svg>
<div class="a" style="left:1060px;top:154px;width:220px;height:1px;background:#dcdcdc"></div>
<div class="t" style="left:1063.0px;top:162.5px;font-size:8.81px;color:#3a3a3a;">Недавние:</div>
<div class="a" style="left:1112.5px;top:161px;width:11px;height:11.5px;background:linear-gradient(90deg,#22eefa,#6a80f0 55%,#b010e8)"></div>
<div class="a" style="left:1124.2px;top:161px;width:11px;height:11.5px;background:#7e7e7e"></div>
<div class="a" style="left:1136.0px;top:161px;width:11px;height:11.5px;background:#050505"></div>
<div class="a" style="left:1147.8px;top:161px;width:11px;height:11.5px;background:#c848a8"></div>
<div class="a" style="left:1159.5px;top:161px;width:11px;height:11.5px;background:#10f020"></div>
<div class="a" style="left:1171.2px;top:161px;width:11px;height:11.5px;background:#1c2040"></div>
<div class="a" style="left:1183.0px;top:161px;width:11px;height:11.5px;background:#e89a18"></div>
<div class="a" style="left:1194.8px;top:161px;width:11px;height:11.5px;background:#b4f020"></div>
<div class="a" style="left:1206.5px;top:161px;width:11px;height:11.5px;background:#6a78b0"></div>
<div class="a" style="left:1218.2px;top:161px;width:11px;height:11.5px;background:#4a68c0"></div>
<div class="a" style="left:1063px;top:177px;width:130px;height:16.5px;background:#fff;border:1px solid #d0d0d0;border-radius:2px"></div>
<div class="t" style="left:1070.3px;top:181.3px;font-size:9.13px;color:#333;width:110px;overflow:hidden">PANTONE® GoeBridge™ cc</div>
<svg class="a" style="left:1183px;top:183px;" width="7" height="4" viewBox="0 0 7 4"><path d="M1,0.6 L6.2,0.6 L3.6,3.6 Z" fill="#111"/></svg>
<svg class="a" style="left:1196px;top:178px;" width="14" height="14" viewBox="0 0 14 14"><circle cx="7" cy="7" r="5" fill="none" stroke="#999" stroke-width="2.2" stroke-dasharray="2.5,1.2"/><circle cx="7" cy="7" r="2" fill="#999"/></svg>
<div class="a" style="left:1224px;top:177px;width:11px;height:12px;background:#fff"></div>
<svg class="a" style="left:1224px;top:177px;" width="11" height="12" viewBox="0 0 11 12"><path d="M0.5,11.5 L10.5,0.5" stroke="#e83a3a" stroke-width="1"/></svg>
<div class="a" style="left:1236px;top:177px;width:11px;height:12px;background:#000"></div>
<div class="a" style="left:1248px;top:177px;width:11px;height:12px;background:#7e7e7e"></div>
<div class="a" style="left:1259px;top:177px;width:12px;height:12px;background:#fff"></div>
<svg class="a" style="left:1063.2px;top:200.6px" width="198" height="58" viewBox="0 0 198 58"><rect x="-0.5" y="-0.5" width="199" height="58.5" fill="#fff6d0"/><rect x="0.00" y="0.00" width="10.75" height="10.6" fill="#efecd8"/><rect x="11.65" y="0.00" width="10.75" height="10.6" fill="#eeebb8"/><rect x="23.30" y="0.00" width="10.75" height="10.6" fill="#efe8a0"/><rect x="34.95" y="0.00" width="10.75" height="10.6" fill="#eee58a"/><rect x="46.60" y="0.00" width="10.75" height="10.6" fill="#f2e23a"/><rect x="58.25" y="0.00" width="10.75" height="10.6" fill="#f5dc0a"/><rect x="69.90" y="0.00" width="10.75" height="10.6" fill="#f8d800"/><rect x="81.55" y="0.00" width="10.75" height="10.6" fill="#eeecc8"/><rect x="93.20" y="0.00" width="10.75" height="10.6" fill="#e8e4a0"/><rect x="104.85" y="0.00" width="10.75" height="10.6" fill="#e6df88"/><rect x="116.50" y="0.00" width="10.75" height="10.6" fill="#dcd460"/><rect x="128.15" y="0.00" width="10.75" height="10.6" fill="#d8ca30"/><rect x="139.80" y="0.00" width="10.75" height="10.6" fill="#cdbf10"/><rect x="151.45" y="0.00" width="10.75" height="10.6" fill="#bba510"/><rect x="163.10" y="0.00" width="10.75" height="10.6" fill="#ebe8c8"/><rect x="174.75" y="0.00" width="10.75" height="10.6" fill="#dcd690"/><rect x="186.40" y="0.00" width="10.75" height="10.6" fill="#ccc060"/><rect x="0.00" y="11.54" width="10.75" height="10.6" fill="#b8a832"/><rect x="11.65" y="11.54" width="10.75" height="10.6" fill="#a89c18"/><rect x="23.30" y="11.54" width="10.75" height="10.6" fill="#9a8a00"/><rect x="34.95" y="11.54" width="10.75" height="10.6" fill="#8a7400"/><rect x="46.60" y="11.54" width="10.75" height="10.6" fill="#e8e4d8"/><rect x="58.25" y="11.54" width="10.75" height="10.6" fill="#d8d0b0"/><rect x="69.90" y="11.54" width="10.75" height="10.6" fill="#c4b890"/><rect x="81.55" y="11.54" width="10.75" height="10.6" fill="#a89a58"/><rect x="93.20" y="11.54" width="10.75" height="10.6" fill="#908238"/><rect x="104.85" y="11.54" width="10.75" height="10.6" fill="#7a6a18"/><rect x="116.50" y="11.54" width="10.75" height="10.6" fill="#5e4e10"/><rect x="128.15" y="11.54" width="10.75" height="10.6" fill="#c8b008"/><rect x="139.80" y="11.54" width="10.75" height="10.6" fill="#b09c00"/><rect x="151.45" y="11.54" width="10.75" height="10.6" fill="#9c8a00"/><rect x="163.10" y="11.54" width="10.75" height="10.6" fill="#887400"/><rect x="174.75" y="11.54" width="10.75" height="10.6" fill="#706000"/><rect x="186.40" y="11.54" width="10.75" height="10.6" fill="#5e5010"/><rect x="0.00" y="23.08" width="10.75" height="10.6" fill="#4a3e18"/><rect x="11.65" y="23.08" width="10.75" height="10.6" fill="#eeeab8"/><rect x="23.30" y="23.08" width="10.75" height="10.6" fill="#f0e498"/><rect x="34.95" y="23.08" width="10.75" height="10.6" fill="#f0e07a"/><rect x="46.60" y="23.08" width="10.75" height="10.6" fill="#f2da48"/><rect x="58.25" y="23.08" width="10.75" height="10.6" fill="#f5d800"/><rect x="69.90" y="23.08" width="10.75" height="10.6" fill="#f8c800"/><rect x="81.55" y="23.08" width="10.75" height="10.6" fill="#f8b800"/><rect x="93.20" y="23.08" width="10.75" height="10.6" fill="#ece8c0"/><rect x="104.85" y="23.08" width="10.75" height="10.6" fill="#eee098"/><rect x="116.50" y="23.08" width="10.75" height="10.6" fill="#f2dc70"/><rect x="128.15" y="23.08" width="10.75" height="10.6" fill="#f5d850"/><rect x="139.80" y="23.08" width="10.75" height="10.6" fill="#f8cc00"/><rect x="151.45" y="23.08" width="10.75" height="10.6" fill="#f8c000"/><rect x="163.10" y="23.08" width="10.75" height="10.6" fill="#f8a800"/><rect x="174.75" y="23.08" width="10.75" height="10.6" fill="#f2e09a"/><rect x="186.40" y="23.08" width="10.75" height="10.6" fill="#f5d860"/><rect x="0.00" y="34.62" width="10.75" height="10.6" fill="#f8cc40"/><rect x="11.65" y="34.62" width="10.75" height="10.6" fill="#f8c000"/><rect x="23.30" y="34.62" width="10.75" height="10.6" fill="#f8b000"/><rect x="34.95" y="34.62" width="10.75" height="10.6" fill="#f8a800"/><rect x="46.60" y="34.62" width="10.75" height="10.6" fill="#f89800"/><rect x="58.25" y="34.62" width="10.75" height="10.6" fill="#f0e4b8"/><rect x="69.90" y="34.62" width="10.75" height="10.6" fill="#f2dca0"/><rect x="81.55" y="34.62" width="10.75" height="10.6" fill="#f5d070"/><rect x="93.20" y="34.62" width="10.75" height="10.6" fill="#f8c040"/><rect x="104.85" y="34.62" width="10.75" height="10.6" fill="#f8b800"/><rect x="116.50" y="34.62" width="10.75" height="10.6" fill="#f8a800"/><rect x="128.15" y="34.62" width="10.75" height="10.6" fill="#f89800"/><rect x="139.80" y="34.62" width="10.75" height="10.6" fill="#f0cc68"/><rect x="151.45" y="34.62" width="10.75" height="10.6" fill="#f0c048"/><rect x="163.10" y="34.62" width="10.75" height="10.6" fill="#f0b030"/><rect x="174.75" y="34.62" width="10.75" height="10.6" fill="#e8a018"/><rect x="186.40" y="34.62" width="10.75" height="10.6" fill="#f09808"/><rect x="0.00" y="46.16" width="10.75" height="10.6" fill="#f09010"/><rect x="11.65" y="46.16" width="10.75" height="10.6" fill="#f08000"/><rect x="23.30" y="46.16" width="10.75" height="10.6" fill="#f5e0b0"/><rect x="34.95" y="46.16" width="10.75" height="10.6" fill="#f5d898"/><rect x="46.60" y="46.16" width="10.75" height="10.6" fill="#f8cc70"/><rect x="58.25" y="46.16" width="10.75" height="10.6" fill="#f8bc40"/><rect x="69.90" y="46.16" width="10.75" height="10.6" fill="#f8b018"/><rect x="81.55" y="46.16" width="10.75" height="10.6" fill="#f8a010"/><rect x="93.20" y="46.16" width="10.75" height="10.6" fill="#f88810"/><rect x="104.85" y="46.16" width="10.75" height="10.6" fill="#eedcb0"/><rect x="116.50" y="46.16" width="10.75" height="10.6" fill="#e8cc88"/><rect x="128.15" y="46.16" width="10.75" height="10.6" fill="#e8c070"/><rect x="139.80" y="46.16" width="10.75" height="10.6" fill="#e8ac40"/><rect x="151.45" y="46.16" width="10.75" height="10.6" fill="#e09c10"/><rect x="163.10" y="46.16" width="10.75" height="10.6" fill="#d88c08"/><rect x="174.75" y="46.16" width="10.75" height="10.6" fill="#c87810"/><rect x="186.40" y="46.16" width="10.75" height="10.6" fill="#e8d8b0"/><rect x="0.8" y="0.8" width="9.2" height="9" fill="none" stroke="#fff" stroke-width="1.4"/></svg>
<svg class="a" style="left:1266px;top:203px;" width="9" height="8" viewBox="0 0 9 8"><path d="M0.5,7.5 L8.5,7.5 L4.5,0.5 Z" fill="#999"/></svg>
<svg class="a" style="left:1266px;top:214px;" width="9" height="9" viewBox="0 0 9 9"><circle cx="4.5" cy="4.5" r="3.4" fill="#999"/></svg>
<svg class="a" style="left:1266px;top:247px;" width="9" height="8" viewBox="0 0 9 8"><path d="M0.5,0.5 L8.5,0.5 L4.5,7.5 Z" fill="#999"/></svg>
<div class="a" style="left:1066px;top:261.5px;width:149.5px;height:17.5px;background:#f2f2f2;border:1px solid #d2d2d2;border-radius:2px"></div>
<svg class="a" style="left:1067px;top:263px;" width="12" height="13" viewBox="0 0 12 13"><circle cx="5" cy="5.2" r="3.6" fill="none" stroke="#333" stroke-width="1.2"/><path d="M7.6,7.9 L10.8,11.2" stroke="#333" stroke-width="1.5"/></svg>
<div class="a" style="left:1059px;top:284px;width:221px;height:20px;background:#c3c3c3;border-top:1px solid #b0b0b0"></div>
<div class="t" style="left:1065.0px;top:289.4px;font-size:9px;color:#999;">¦</div>
<div class="a" style="left:1074px;top:285px;width:30px;height:19px;background:#efefef"></div>
<div class="t" style="left:1077.5px;top:290.3px;font-size:9.13px;color:#333;">Слои</div>
<div class="t" style="left:1107.5px;top:290.8px;font-size:8.5px;color:#555;">Стили</div>
<div class="a" style="left:1135.5px;top:289px;width:1px;height:12px;background:#aaa"></div>
<div class="t" style="left:1140.4px;top:291.1px;font-size:8.16px;color:#555;">Эффекты</div>
<div class="a" style="left:1181.5px;top:289px;width:1px;height:12px;background:#aaa"></div>
<div class="t" style="left:1186.3px;top:290.7px;font-size:8.6px;color:#555;">Стили текста</div>
<div class="a" style="left:1060px;top:304px;width:220px;height:22px;background:#efefef"></div>
<div class="t" style="left:1066.3px;top:312.0px;font-size:8.29px;color:#333;">Непрозрачность:</div>
<div class="a" style="left:1135.5px;top:307px;width:61.5px;height:16.5px;background:#fff;border:1px solid #d0d0d0;border-radius:2px"></div>
<div class="t" style="left:1139.4px;top:312.1px;font-size:8.75px;color:#333;">100 %</div>
<svg class="a" style="left:1187px;top:313.5px;" width="7" height="4" viewBox="0 0 7 4"><path d="M1,0.6 L6.2,0.6 L3.6,3.6 Z" fill="#111"/></svg>
<div class="a" style="left:1201px;top:307px;width:45.5px;height:16.5px;background:#fff;border:1px solid #d0d0d0;border-radius:2px"></div>
<div class="t" style="left:1204.7px;top:311.6px;font-size:9.39px;color:#333;">Обычн</div>
<svg class="a" style="left:1236px;top:313.5px;" width="7" height="4" viewBox="0 0 7 4"><path d="M1,0.6 L6.2,0.6 L3.6,3.6 Z" fill="#111"/></svg>
<svg class="a" style="left:1247px;top:309px;" width="13" height="13" viewBox="0 0 13 13"><circle cx="6.5" cy="6.5" r="3.6" fill="none" stroke="#666" stroke-width="2.4" stroke-dasharray="1.6,1.2"/><circle cx="6.5" cy="6.5" r="3" fill="#666"/><circle cx="6.5" cy="6.5" r="1.3" fill="#efefef"/></svg>
<svg class="a" style="left:1264px;top:309px;" width="10" height="12" viewBox="0 0 10 12"><path d="M2.5,5 L2.5,3.5 A2.5,2.5 0 0 1 7.5,3.5 L7.5,5" fill="none" stroke="#999" stroke-width="1.1"/><rect x="1.5" y="5" width="7" height="6" fill="#999"/></svg>
<div class="a" style="left:1060px;top:326px;width:205px;height:24px;background:#efefef"></div>
<div class="a" style="left:1058px;top:349.8px;width:207px;height:1.2px;background:#cdcdcd"></div>
<div class="t" style="left:1114.0px;top:335.5px;font-size:9.8px;color:#333;">(Кривая)</div>
<svg class="a" style="left:1091px;top:331.09999999999997px;" width="19" height="19" viewBox="0 0 19 19"><rect width="19" height="19" fill="#c8c8cc"/><path d="M2.5,6 Q6,9.5 9.5,9.5 Q13,9.5 16.5,6 L16.5,8.5 Q13,12 10.5,12.5 L9.5,15 L8.5,12.5 Q6,12 2.5,8.5 Z" fill="#b8f428"/></svg>
<svg class="a" style="left:1249px;top:333.7px;" width="11" height="11" viewBox="0 0 11 11"><rect x="0.3" y="0.3" width="10.4" height="10.4" rx="1.5" fill="#3d8ee8"/><path d="M2.5,5.5 L4.6,7.8 L8.5,2.8" fill="none" stroke="#fff" stroke-width="1.4"/></svg>
<div class="a" style="left:1058px;top:373.0px;width:207px;height:1.2px;background:#cdcdcd"></div>
<div class="t" style="left:1100.8px;top:358.7px;font-size:9.84px;color:#333;">(2013-2018 © Extago)</div>
<svg class="a" style="left:1078.5px;top:353.29999999999995px;" width="18.5" height="18.5" viewBox="0 0 18.5 18.5"><rect width="18.5" height="18.5" fill="#d0d0d0"/><defs><linearGradient id="tg" x1="0" x2="1"><stop offset="0" stop-color="#666"/><stop offset="0.5" stop-color="#9a9a9a"/><stop offset="1" stop-color="#c0c0c0"/></linearGradient></defs><rect x="3" y="3" width="13" height="13" fill="url(#tg)" stroke="#eee" stroke-width="0.8"/><text x="9.5" y="14.5" font-family="Liberation Serif" font-size="13" text-anchor="middle" fill="#111">T</text></svg>
<svg class="a" style="left:1249px;top:356.9px;" width="11" height="11" viewBox="0 0 11 11"><rect x="0.5" y="0.5" width="10" height="10" rx="1.5" fill="#fff" stroke="#d8d8d8" stroke-width="0.8"/></svg>
<div class="a" style="left:1058px;top:395.6px;width:207px;height:1.2px;background:#cdcdcd"></div>
<div class="t" style="left:1100.8px;top:381.3px;font-size:9.8px;color:#333;">(Кривая)</div>
<svg class="a" style="left:1078.5px;top:375.9px;" width="18.5" height="18.5" viewBox="0 0 18.5 18.5"><rect width="18.5" height="18.5" fill="#cfcfcf"/><rect x="2.2" y="2" width="14" height="14.5" fill="#696969"/></svg>
<svg class="a" style="left:1249px;top:379.5px;" width="11" height="11" viewBox="0 0 11 11"><rect x="0.5" y="0.5" width="10" height="10" rx="1.5" fill="#fff" stroke="#d8d8d8" stroke-width="0.8"/></svg>
<div class="t" style="left:1234.0px;top:379.6px;font-size:10.5px;color:#555;font-family:Liberation Serif;font-style:italic">ƒx</div>
<div class="a" style="left:1058px;top:418.20000000000005px;width:207px;height:1.2px;background:#cdcdcd"></div>
<div class="t" style="left:1100.8px;top:403.9px;font-size:9.8px;color:#333;">(Кривая)</div>
<svg class="a" style="left:1078.5px;top:398.5px;" width="18.5" height="18.5" viewBox="0 0 18.5 18.5"><rect width="18.5" height="18.5" fill="#cfcfcf"/><rect x="2.2" y="2" width="14" height="14.5" fill="#696969"/></svg>
<svg class="a" style="left:1249px;top:402.1px;" width="11" height="11" viewBox="0 0 11 11"><rect x="0.5" y="0.5" width="10" height="10" rx="1.5" fill="#fff" stroke="#d8d8d8" stroke-width="0.8"/></svg>
<div class="t" style="left:1234.0px;top:402.2px;font-size:10.5px;color:#555;font-family:Liberation Serif;font-style:italic">ƒx</div>
<div class="a" style="left:1058px;top:441.0px;width:207px;height:1.2px;background:#cdcdcd"></div>
<div class="t" style="left:1100.8px;top:426.7px;font-size:9.8px;color:#333;">(Кривая)</div>
<svg class="a" style="left:1078.5px;top:421.29999999999995px;" width="18.5" height="18.5" viewBox="0 0 18.5 18.5"><rect width="18.5" height="18.5" fill="#cfcfcf"/><rect x="2.2" y="2" width="14" height="14.5" fill="#696969"/></svg>
<svg class="a" style="left:1249px;top:424.9px;" width="11" height="11" viewBox="0 0 11 11"><rect x="0.5" y="0.5" width="10" height="10" rx="1.5" fill="#fff" stroke="#d8d8d8" stroke-width="0.8"/></svg>
<div class="t" style="left:1234.0px;top:425.0px;font-size:10.5px;color:#555;font-family:Liberation Serif;font-style:italic">ƒx</div>
<div class="a" style="left:1058px;top:463.6px;width:207px;height:1.2px;background:#cdcdcd"></div>
<div class="t" style="left:1100.8px;top:449.3px;font-size:9.8px;color:#333;">(Кривая)</div>
<svg class="a" style="left:1078.5px;top:443.9px;" width="18.5" height="18.5" viewBox="0 0 18.5 18.5"><rect width="18.5" height="18.5" fill="#cfcfcf"/><rect x="2.2" y="1.5" width="14" height="15.5" fill="#fff"/></svg>
<svg class="a" style="left:1249px;top:447.5px;" width="11" height="11" viewBox="0 0 11 11"><rect x="0.3" y="0.3" width="10.4" height="10.4" rx="1.5" fill="#3d8ee8"/><path d="M2.5,5.5 L4.6,7.8 L8.5,2.8" fill="none" stroke="#fff" stroke-width="1.4"/></svg>
<div class="t" style="left:1234.0px;top:447.6px;font-size:10.5px;color:#555;font-family:Liberation Serif;font-style:italic">ƒx</div>
<div class="a" style="left:1058px;top:486.40000000000003px;width:207px;height:1.2px;background:#cdcdcd"></div>
<div class="t" style="left:1100.8px;top:472.0px;font-size:9.89px;color:#333;">(Сгруппировать)</div>
<svg class="a" style="left:1066px;top:471.3px;" width="7" height="8" viewBox="0 0 7 8"><path d="M0.5,0.5 L6.5,4 L0.5,7.5 Z" fill="#777"/></svg>
<svg class="a" style="left:1078.5px;top:466.7px;" width="18.5" height="18.5" viewBox="0 0 18.5 18.5"><defs><linearGradient id="gt" x1="0" x2="1"><stop offset="0" stop-color="#f050b0"/><stop offset="1" stop-color="#802a90"/></linearGradient></defs><rect width="18.5" height="18.5" fill="#cfcfcf"/><path d="M9.2,4 L12.5,14 L6,14 Z" fill="url(#gt)"/></svg>
<svg class="a" style="left:1249px;top:470.3px;" width="11" height="11" viewBox="0 0 11 11"><rect x="0.5" y="0.5" width="10" height="10" rx="1.5" fill="#fff" stroke="#d8d8d8" stroke-width="0.8"/></svg>
<div class="a" style="left:1058px;top:508.8px;width:207px;height:1.2px;background:#cdcdcd"></div>
<div class="t" style="left:1100.8px;top:494.8px;font-size:9.42px;color:#222;"><b>Backgrounds_Masonry_made…</b></div>
<svg class="a" style="left:1078.5px;top:489.09999999999997px;" width="18.5" height="18.5" viewBox="0 0 18.5 18.5"><defs><linearGradient id="bgt" x1="0" y1="0" x2="0" y2="1"><stop offset="0" stop-color="#d8d8d8"/><stop offset="0.45" stop-color="#c0c0c0"/><stop offset="1" stop-color="#dedede"/></linearGradient></defs><rect width="18.5" height="18.5" fill="url(#bgt)"/></svg>
<svg class="a" style="left:1249px;top:492.7px;" width="11" height="11" viewBox="0 0 11 11"><rect x="0.3" y="0.3" width="10.4" height="10.4" rx="1.5" fill="#3d8ee8"/><path d="M2.5,5.5 L4.6,7.8 L8.5,2.8" fill="none" stroke="#fff" stroke-width="1.4"/></svg>
<div class="a" style="left:1058px;top:531.0px;width:207px;height:1.2px;background:#cdcdcd"></div>
<div class="t" style="left:1100.8px;top:516.6px;font-size:9.9px;color:#333;">(Прямоугольник)</div>
<svg class="a" style="left:1078.5px;top:511.29999999999995px;" width="18.5" height="18.5" viewBox="0 0 18.5 18.5"><rect width="18.5" height="18.5" fill="#cfcfcf"/><rect x="0.5" y="4.8" width="17.5" height="9" fill="#1b2240"/></svg>
<svg class="a" style="left:1249px;top:514.9px;" width="11" height="11" viewBox="0 0 11 11"><rect x="0.3" y="0.3" width="10.4" height="10.4" rx="1.5" fill="#3d8ee8"/><path d="M2.5,5.5 L4.6,7.8 L8.5,2.8" fill="none" stroke="#fff" stroke-width="1.4"/></svg>
<svg class="a" style="left:1269px;top:334px;" width="9" height="8" viewBox="0 0 9 8"><path d="M0.5,7.5 L8.5,7.5 L4.5,0.5 Z" fill="#a8a8a8"/></svg>
<div class="a" style="left:1270px;top:400px;width:7px;height:131px;background:#a8a8a8;border-radius:3.5px"></div>
<svg class="a" style="left:1269px;top:533px;" width="9" height="8" viewBox="0 0 9 8"><path d="M0.5,0.5 L8.5,0.5 L4.5,7.5 Z" fill="#a8a8a8"/></svg>
<div class="a" style="left:1060px;top:543px;width:220px;height:18px;background:#efefef"></div>
<svg class="a" style="left:1060px;top:545px;" width="14" height="14" viewBox="0 0 14 14"><path d="M7,2 L12.5,5 L7,8 L1.5,5 Z" fill="#ddd" stroke="#777" stroke-width="0.8"/><path d="M1.5,7.5 L7,10.5 L12.5,7.5" fill="none" stroke="#777" stroke-width="0.8"/><path d="M1.5,9.5 L7,12.5 L12.5,9.5" fill="none" stroke="#777" stroke-width="0.8"/></svg>
<div class="a" style="left:1128.5px;top:545px;width:13.5px;height:13.5px;background:#fff;border:1px solid #ccc"></div>
<svg class="a" style="left:1128.5px;top:545px;" width="13.5" height="13.5" viewBox="0 0 13.5 13.5"><circle cx="6.75" cy="6.75" r="3.2" fill="#333"/></svg>
<svg class="a" style="left:1145px;top:545px;" width="13" height="13" viewBox="0 0 13 13"><circle cx="6.5" cy="6.5" r="4.8" fill="none" stroke="#333" stroke-width="1.3"/><path d="M6.5,1.7 A4.8,4.8 0 0 0 6.5,11.3 Z" fill="#333"/></svg>
<div class="t" style="left:1162.0px;top:546.7px;font-size:11px;color:#333;font-family:Liberation Serif;font-style:italic">ƒx</div>
<svg class="a" style="left:1232px;top:544px;" width="12" height="15" viewBox="0 0 12 15"><path d="M1.5,1 L7,1 L10.5,4.5 L10.5,14 L1.5,14 Z" fill="#fff" stroke="#999" stroke-width="0.9"/></svg>
<svg class="a" style="left:1249px;top:544px;" width="14" height="15" viewBox="0 0 14 15"><path d="M4,1 L9,1 L12,4 L12,11 L4,11 Z" fill="#fff" stroke="#aaa" stroke-width="0.9" stroke-dasharray="1.5,1"/><path d="M1.5,4 L6,4 L9,7 L9,14 L1.5,14 Z" fill="#fff" stroke="#aaa" stroke-width="0.9" stroke-dasharray="1.5,1"/></svg>
<svg class="a" style="left:1265px;top:544px;" width="12" height="15" viewBox="0 0 12 15"><rect x="1" y="2" width="10" height="1.6" fill="#999"/><rect x="4" y="0.5" width="4" height="1.6" fill="#999"/><path d="M2,4.5 L10,4.5 L9.3,14 L2.7,14 Z" fill="#999"/><path d="M4.5,6 L4.5,12.5 M7.5,6 L7.5,12.5" stroke="#efefef" stroke-width="0.8"/></svg>
<div class="a" style="left:1059px;top:561px;width:221px;height:20px;background:#c3c3c3;border-top:1px solid #b0b0b0"></div>
<div class="t" style="left:1065.0px;top:566.4px;font-size:9px;color:#999;">¦</div>
<div class="a" style="left:1074px;top:562px;width:77px;height:19px;background:#efefef"></div>
<div class="t" style="left:1078.8px;top:567.6px;font-size:8.78px;color:#333;">Трансформация</div>
<div class="t" style="left:1154.6px;top:567.5px;font-size:8.9px;color:#555;">История</div>
<div class="a" style="left:1193px;top:566px;width:1px;height:12px;background:#aaa"></div>
<div class="t" style="left:1197.5px;top:567.3px;font-size:9.12px;color:#555;">Навигатор</div>
<div class="a" style="left:1060px;top:581px;width:220px;height:86px;background:#efefef"></div>
<svg class="a" style="left:1075px;top:595px;" width="34" height="34" viewBox="0 0 34 34"><rect x="4.5" y="4.5" width="25" height="25" fill="none" stroke="#5aa8f0" stroke-width="1"/><rect x="14.4" y="1.9" width="5.2" height="5.2" fill="#4aa0f0" rx="0.5"/><rect x="14.4" y="14.4" width="5.2" height="5.2" fill="#4aa0f0" rx="0.5"/><rect x="14.4" y="26.9" width="5.2" height="5.2" fill="#4aa0f0" rx="0.5"/><rect x="26.9" y="1.9" width="5.2" height="5.2" fill="#4aa0f0" rx="0.5"/><rect x="26.9" y="14.4" width="5.2" height="5.2" fill="#4aa0f0" rx="0.5"/><rect x="26.9" y="26.9" width="5.2" height="5.2" fill="#4aa0f0" rx="0.5"/><rect x="1.2" y="1.2" width="6.6" height="6.6" fill="#1060e8"/><rect x="1.9" y="14.4" width="5.2" height="5.2" fill="#4aa0f0"/><rect x="1.9" y="26.9" width="5.2" height="5.2" fill="#4aa0f0"/></svg>
<div class="t" style="right:147.0px;top:594.4px;font-size:9.8px;color:#333;">X:</div>
<div class="a" style="left:1135.5px;top:590.5px;width:53px;height:16px;background:#fff;border:1px solid #d0d0d0;border-radius:2px"></div>
<div class="t" style="left:1140.0px;top:594.8px;font-size:9.31px;color:#333;">0 px</div>
<div class="t" style="right:147.0px;top:614.4px;font-size:9.8px;color:#333;">Y:</div>
<div class="a" style="left:1135.5px;top:610.5px;width:53px;height:16px;background:#fff;border:1px solid #d0d0d0;border-radius:2px"></div>
<div class="t" style="left:1140.0px;top:615.0px;font-size:9.06px;color:#333;">305 px</div>
<div class="t" style="right:147.0px;top:639.4px;font-size:9.8px;color:#333;">R:</div>
<div class="a" style="left:1135.5px;top:635.5px;width:53px;height:16px;background:#fff;border:1px solid #d0d0d0;border-radius:2px"></div>
<div class="t" style="left:1140.0px;top:639.9px;font-size:9.24px;color:#333;">0 °</div>
<svg class="a" style="left:1179.5px;top:642.0px;" width="7" height="4" viewBox="0 0 7 4"><path d="M1,0.6 L6.2,0.6 L3.6,3.6 Z" fill="#111"/></svg>
<div class="t" style="right:69.5px;top:594.4px;font-size:9.8px;color:#333;">W:</div>
<div class="a" style="left:1213px;top:590.5px;width:53px;height:16px;background:#fff;border:1px solid #d0d0d0;border-radius:2px"></div>
<div class="t" style="left:1217.5px;top:595.1px;font-size:8.99px;color:#333;">1920 px</div>
<div class="t" style="right:69.5px;top:614.4px;font-size:9.8px;color:#333;">H:</div>
<div class="a" style="left:1213px;top:610.5px;width:53px;height:16px;background:#fff;border:1px solid #d0d0d0;border-radius:2px"></div>
<div class="t" style="left:1217.5px;top:615.2px;font-size:8.81px;color:#333;">568.2 px</div>
<div class="t" style="right:69.5px;top:639.4px;font-size:9.8px;color:#333;">S:</div>
<div class="a" style="left:1213px;top:635.5px;width:53px;height:16px;background:#fff;border:1px solid #d0d0d0;border-radius:2px"></div>
<div class="t" style="left:1217.5px;top:639.9px;font-size:9.24px;color:#333;">0 °</div>
<svg class="a" style="left:1257px;top:642.0px;" width="7" height="4" viewBox="0 0 7 4"><path d="M1,0.6 L6.2,0.6 L3.6,3.6 Z" fill="#111"/></svg>
<svg class="a" style="left:1268px;top:599px;" width="7" height="26" viewBox="0 0 7 26"><path d="M1,1 L4,1 L4,25 L1,25" fill="none" stroke="#888" stroke-width="0.8"/><ellipse cx="4.5" cy="10.5" rx="1.8" ry="3" fill="none" stroke="#555" stroke-width="1"/><ellipse cx="4.5" cy="15.5" rx="1.8" ry="3" fill="none" stroke="#555" stroke-width="1"/></svg>
<svg class="a" style="left:1047px;top:641px;" width="9" height="8" viewBox="0 0 9 8"><path d="M0.5,1 L8,1 L4.25,7.5 Z" fill="#a8a8a8"/></svg>
<div class="a" style="left:0px;top:85px;width:32px;height:582px;background:#ebebeb"></div>
<div class="a" style="left:4.5px;top:87px;width:21.5px;height:21.5px;background:#dcdcdc;border:1px solid #d0d0d0;border-radius:3px"></div>
<svg class="a" style="left:9px;top:91px;" width="14" height="14" viewBox="0 0 14 14"><path d="M3.5,2.5 L3.5,12 L6,9.6 L8,13.2 L9.8,12.3 L7.8,8.8 L11,8.6 Z" fill="#111"/></svg>
<svg class="a" style="left:8px;top:112px;" width="16" height="17" viewBox="0 0 16 17"><rect x="2.5" y="2.5" width="11" height="12" fill="#d8ecfa" stroke="#5aaee8" stroke-width="1.2" stroke-dasharray="1.6,1"/><rect x="4" y="6" width="8" height="5.5" fill="#fff" stroke="#b0906a" stroke-width="0.9"/></svg>
<svg class="a" style="left:9px;top:138px;" width="13" height="12" viewBox="0 0 13 12"><path d="M2.5,1.5 L2.5,10.5 L10.5,6.5 Z" fill="#fff" stroke="#222" stroke-width="1.2" stroke-linejoin="round"/></svg>
<svg class="a" style="left:7px;top:157px;" width="18" height="17" viewBox="0 0 18 17"><path d="M3,2.5 L8.5,8 M8.5,8 L16,5 M8.5,8 L4.5,15" stroke="#3a4a58" stroke-width="1.2" fill="none"/><circle cx="8.5" cy="8" r="2.2" fill="#4a5a6a"/><path d="M14,3.5 L17,5 L14,6.5 Z" fill="#3a4a58"/><circle cx="4.3" cy="15.3" r="1.4" fill="#3a4a58"/></svg>
<svg class="a" style="left:6px;top:180px;" width="18" height="17" viewBox="0 0 18 17"><path d="M2,15.5 L4.5,8.5 L10,4 L13.5,7.5 L9,13 Z" fill="#e8b840" stroke="#8a6018" stroke-width="0.8"/><path d="M2,15.5 L7,10.5" stroke="#6a4a10" stroke-width="0.8"/><circle cx="7.3" cy="10.2" r="1" fill="#6a4a10"/><path d="M10.5,3.5 L14,7 L16.8,4.2 L13.2,0.8 Z" fill="#6a3030"/></svg>
<svg class="a" style="left:6px;top:203px;" width="18" height="17" viewBox="0 0 18 17"><path d="M3,14 L13,4 L15.5,6.5 L5.5,16.5 L2.5,16.8 Z" fill="#3a8ee0" stroke="#2a6ab0" stroke-width="0.6"/><path d="M13,4 L14.5,2.5 L17,5 L15.5,6.5 Z" fill="#f0a0a0"/><path d="M3,14 L2.5,16.8 L5.5,16.5 Z" fill="#f0d090"/><path d="M8,15.5 Q11,12.5 13,14 T17,14" fill="none" stroke="#999" stroke-width="0.6"/></svg>
<svg class="a" style="left:6px;top:226px;" width="18" height="17" viewBox="0 0 18 17"><path d="M3,12 Q5,7 11,7 L13,9 Q12,13 6,13 Z" fill="#a86a30"/><path d="M11,7 L15.5,2.5" stroke="#7a4a20" stroke-width="1.3"/><circle cx="16" cy="2.5" r="1.8" fill="#e84060"/><path d="M2,12 Q8,18 16,13" fill="none" stroke="#4a8aa8" stroke-width="0.9"/></svg>
<svg class="a" style="left:7.5px;top:248.5px;" width="16" height="16" viewBox="0 0 16 16"><defs><linearGradient id="cw1" x1="0" y1="0" x2="1" y2="1"><stop offset="0" stop-color="#f03a8a"/><stop offset="0.5" stop-color="#8a4af0"/><stop offset="1" stop-color="#2ac8f0"/></linearGradient><linearGradient id="cw2" x1="1" y1="0" x2="0" y2="1"><stop offset="0" stop-color="#f0e030"/><stop offset="1" stop-color="#30d070"/></linearGradient></defs><circle cx="8" cy="8" r="7" fill="url(#cw1)"/><path d="M8,8 L15,8 A7,7 0 0 1 8,15 Z" fill="url(#cw2)"/><circle cx="8" cy="8" r="2.5" fill="#fff" opacity="0.8"/><path d="M8,8 L14,2" stroke="#333" stroke-width="0.9"/></svg>
<svg class="a" style="left:10px;top:272px;" width="12" height="15" viewBox="0 0 12 15"><path d="M2,1.5 L10,1.5 Q10.5,8.5 6,9 Q1.5,8.5 2,1.5 Z" fill="#c8d8e8" stroke="#4a6a88" stroke-width="0.9"/><path d="M6,9 L6,13 M3,13.5 L9,13.5" stroke="#4a6a88" stroke-width="1"/></svg>
<svg class="a" style="left:7.5px;top:295.5px;" width="16" height="13" viewBox="0 0 16 13"><rect x="0.5" y="0.5" width="15" height="12" fill="#1a4a88"/><path d="M0.5,9 L5,5 L9,9 L15.5,6 L15.5,12.5 L0.5,12.5 Z" fill="#0a2a50"/><circle cx="11.5" cy="3.5" r="1.8" fill="#f0c040"/><path d="M2,7 L5,4.2 L7,6" fill="none" stroke="#fff" stroke-width="0.8"/></svg>
<svg class="a" style="left:8px;top:317px;" width="15" height="15" viewBox="0 0 15 15"><path d="M3.5,0.5 L3.5,11.5 L14.5,11.5 M0.5,3.5 L11.5,3.5 L11.5,14.5 M3.5,11.5 L11.5,3.5" fill="none" stroke="#3a3a3a" stroke-width="1.3"/></svg>
<div class="a" style="left:9.5px;top:341.5px;width:11.5px;height:11.2px;background:linear-gradient(#3a96e0,#2a7ed0)"></div>
<svg class="a" style="left:9px;top:363px;" width="13" height="13" viewBox="0 0 13 13"><circle cx="6.3" cy="6.3" r="5.8" fill="#2e88d8"/></svg>
<div class="a" style="left:9.5px;top:386.5px;width:11.5px;height:11.5px;background:linear-gradient(#3a96e0,#2a7ed0);border-radius:2.5px"></div>
<svg class="a" style="left:8.5px;top:408.5px;" width="14" height="13" viewBox="0 0 14 13"><path d="M7,0.8 L13.2,12.2 L0.8,12.2 Z" fill="#2e88d8"/></svg>
<svg class="a" style="left:21.5px;top:420.5px;" width="5" height="5" viewBox="0 0 5 5"><path d="M4.5,0.5 L4.5,4.5 L0.5,4.5 Z" fill="#111"/></svg>
<div class="a" style="left:8px;top:430px;width:14.5px;height:15.5px;background:#fff"></div>
<div class="t" style="left:15.2px;transform:translateX(-50%);top:431.6px;font-size:14px;color:#333;font-family:Liberation Serif">T</div>
<svg class="a" style="left:21.5px;top:445px;" width="5" height="5" viewBox="0 0 5 5"><path d="M4.5,0.5 L4.5,4.5 L0.5,4.5 Z" fill="#111"/></svg>
<svg class="a" style="left:8px;top:453px;" width="15" height="15" viewBox="0 0 15 15"><path d="M1.5,13.5 L8.5,6.5" stroke="#a08868" stroke-width="1.7"/><path d="M1.5,13.5 L8.5,6.5" stroke="#f0e8e0" stroke-width="0.5"/><ellipse cx="11" cy="4" rx="3" ry="3.6" transform="rotate(45 11 4)" fill="#b88a28"/><circle cx="10.3" cy="3.3" r="1" fill="#e8c070"/></svg>
<svg class="a" style="left:8px;top:475px;" width="15" height="17" viewBox="0 0 15 17"><path d="M4,15.5 Q1,12 0.8,9.5 Q1.5,8.5 3,10 L4,11 L3.5,3.5 Q4.2,2.5 5,3.5 L5.8,8 L6,1.8 Q6.8,0.8 7.6,1.8 L8,8 L9,2.5 Q9.8,1.6 10.5,2.6 L10.2,8.5 L11.8,4.5 Q12.8,4 13.2,5 L12,12 Q11,15.5 8,15.8 Z" fill="#f2a878" stroke="#d88a58" stroke-width="0.5"/></svg>
<svg class="a" style="left:8px;top:497px;" width="15" height="16" viewBox="0 0 15 16"><path d="M9.5,9.5 L13.5,14" stroke="#a08060" stroke-width="2.2" stroke-linecap="round"/><circle cx="6.3" cy="6.5" r="5" fill="#8ac8f0" stroke="#3a88c8" stroke-width="1.1"/><ellipse cx="5" cy="5" rx="2" ry="1.3" fill="#d8f0ff" transform="rotate(-30 5 5)"/></svg>
<div class="a" style="left:0px;top:667px;width:1280px;height:21px;background:#e9e9e9"></div>
<div class="t" style="left:4.0px;top:673.2px;font-size:9.82px;color:#3a3a3a;white-space:pre">Выбрано: 'Кривая'. Чтобы переместить выделенное, используйте </div>
<div class="t" style="left:305.9px;top:673.1px;font-size:9.87px;color:#222;font-weight:bold;white-space:pre">Перетащите</div>
<div class="t" style="left:364.9px;top:673.1px;font-size:9.9px;color:#3a3a3a;white-space:pre">. Чтобы выбрать другой объект, используйте </div>
<div class="t" style="left:574.7px;top:673.1px;font-size:9.9px;color:#222;font-weight:bold;white-space:pre">Нажмите</div>
<div class="t" style="left:618.9px;top:673.1px;font-size:9.9px;color:#3a3a3a;white-space:pre">. Чтобы отменить выделение, нажмите </div>
<div class="t" style="left:801.9px;top:673.1px;font-size:9.9px;color:#222;font-weight:bold;white-space:pre">Нажмите</div>
<div class="t" style="left:846.0px;top:673.2px;font-size:9.85px;color:#3a3a3a;white-space:pre"> на пустой области.</div>
<div class="a" style="left:0px;top:688px;width:1280px;height:32px;background:linear-gradient(90deg,#1e2c3a,#22323f 40%,#1e2c3a 70%,#1c2a38)"></div>
<div class="a" style="left:0px;top:688px;width:1280px;height:1px;background:#5a6876"></div>
<div class="a" style="left:0px;top:689px;width:1280px;height:1px;background:#33414e"></div>
<svg class="a" style="left:7px;top:689px;" width="30" height="30" viewBox="0 0 30 30"><defs><radialGradient id="orb" cx="0.5" cy="0.4" r="0.6"><stop offset="0" stop-color="#5ab8e8"/><stop offset="0.7" stop-color="#1a5a98"/><stop offset="1" stop-color="#0a2a58"/></radialGradient></defs>
<circle cx="15" cy="15" r="14" fill="url(#orb)" stroke="#8ab8d8" stroke-width="0.8"/>
<path d="M8.5,9.5 Q11,8.5 14,9.8 L13.5,14 Q10.5,13 8,14 Z" fill="#f05a28"/><path d="M15,10 Q18,11 21.5,9.5 L21,14 Q18,15.2 14.6,14.2 Z" fill="#7ac838"/>
<path d="M8,15.2 Q10.5,14.2 13.4,15.4 L13,19.6 Q10,18.5 7.5,19.6 Z" fill="#28a8e8"/><path d="M14.4,15.5 Q17.5,16.4 20.8,15.2 L20.3,19.6 Q17.2,20.8 14,19.8 Z" fill="#f8c828"/>
<ellipse cx="15" cy="8" rx="9" ry="5" fill="#fff" opacity="0.18"/></svg>
<svg class="a" style="left:55px;top:689px;" width="30" height="30" viewBox="0 0 30 30"><path d="M7,22 Q3,27 8,26 Q14,24 24,12 Q29,5 24,5 Q20,5 14,9" fill="none" stroke="#e8b830" stroke-width="2.2"/>
<circle cx="15.5" cy="15.5" r="8.5" fill="#2a88d8"/><path d="M10.5,15 L21,15 Q21,10 15.8,10 Q11,10 10.5,15 Z M10.5,17.2 Q11.5,21.5 16,21.5 Q19.5,21.5 20.8,19" fill="#fff" stroke="none"/><path d="M12.8,13.8 L18.8,13.8 Q18.4,11.5 15.8,11.5 Q13.2,11.5 12.8,13.8 Z" fill="#2a88d8"/>
<path d="M10.5,17.2 L20,17.2" stroke="#2a88d8" stroke-width="0"/></svg>
<div class="a" style="left:95px;top:689.5px;width:43.5px;height:30px;background:linear-gradient(160deg,#7a8690,#56626c 45%,#3c4852);border:1px solid rgba(255,255,255,0.22);border-radius:2px;box-shadow:inset 0 0 0 1px rgba(0,0,0,0.25)"></div>
<svg class="a" style="left:102px;top:691px;" width="30" height="27" viewBox="0 0 30 27"><rect x="4" y="3" width="21" height="21" fill="#6ab0e8" stroke="#a8d8f8" stroke-width="0.8"/><circle cx="14.5" cy="13.5" r="6.5" fill="#f07828"/><path d="M12.3,10 L18,13.5 L12.3,17 Z" fill="#fff"/></svg>
<div class="a" style="left:141px;top:689.5px;width:44px;height:30px;background:linear-gradient(160deg,#7a8690,#56626c 45%,#3c4852);border:1px solid rgba(255,255,255,0.22);border-radius:2px;box-shadow:inset 0 0 0 1px rgba(0,0,0,0.25)"></div>
<svg class="a" style="left:149px;top:691px;" width="30" height="27" viewBox="0 0 30 27"><path d="M6,20 L13,4 L24,9 L17,24 Z" fill="#9ad0e8" stroke="#e8f4f8" stroke-width="0.8"/><path d="M17,24 L24,9 L26,21 Z" fill="#c8e0e8"/><path d="M6,20 L17,24 L8,22 Z" fill="#fff" opacity="0.7"/></svg>
<div class="a" style="left:188px;top:689.5px;width:39px;height:30px;background:linear-gradient(160deg,#7a8690,#56626c 45%,#3c4852);border:1px solid rgba(255,255,255,0.22);border-radius:2px;box-shadow:inset 0 0 0 1px rgba(0,0,0,0.25)"></div>
<svg class="a" style="left:193px;top:691px;" width="30" height="27" viewBox="0 0 30 27"><rect x="4" y="5" width="21" height="17" rx="1" fill="#f0c848"/><rect x="5" y="4" width="8" height="3" fill="#f0c848"/><rect x="6" y="7" width="17" height="5" fill="#fff8e0" opacity="0.6"/><path d="M4,13 L25,13 L23,23 L6,23 Z" fill="#f8d860"/><rect x="7.5" y="16.5" width="14" height="5" fill="#68b8e8"/></svg>
<div class="a" style="left:230px;top:690px;width:1px;height:29px;background:rgba(255,255,255,0.12)"></div>
<svg class="a" style="left:242px;top:690px;" width="28" height="28" viewBox="0 0 28 28"><path d="M14,3 L20,19 L8,19 Z" fill="#e8e8e8"/><path d="M11.5,9.5 L16.5,9.5 M10,14 L18,14" stroke="#a8b0b8" stroke-width="2"/><path d="M5,21 Q14,24 22,21 L20,23.5 Q14,26 7,23.5 Z" fill="#4a8a98"/><circle cx="18" cy="17.5" r="5.5" fill="#d8d0c0" stroke="#8ab0c8" stroke-width="1.2"/><path d="M18,14.5 L18,17.5 L20,18.5" stroke="#6a7a88" stroke-width="0.8" fill="none"/></svg>
<svg class="a" style="left:291px;top:691.5px;" width="25" height="24" viewBox="0 0 25 24"><rect x="0.8" y="0.8" width="23.4" height="22.4" fill="#0a1824" stroke="#2ad0f8" stroke-width="1.6"/><text x="12.5" y="16.8" font-family="Liberation Sans" font-size="12.5" font-weight="bold" text-anchor="middle" fill="#30c8f8">Ps</text></svg>
<svg class="a" style="left:338px;top:691.5px;" width="25" height="24" viewBox="0 0 25 24"><rect x="0.8" y="0.8" width="23.4" height="22.4" fill="#101850" stroke="#8ab0f0" stroke-width="1.6"/><text x="12.5" y="16.8" font-family="Liberation Sans" font-size="12.5" font-weight="bold" text-anchor="middle" fill="#a8c8f8">Ps</text></svg>
<div class="a" style="left:375px;top:689.5px;width:44px;height:30px;background:linear-gradient(160deg,#7a8690,#56626c 45%,#3c4852);border:1px solid rgba(255,255,255,0.22);border-radius:2px;box-shadow:inset 0 0 0 1px rgba(0,0,0,0.25)"></div>
<svg class="a" style="left:384px;top:690px;" width="26" height="26" viewBox="0 0 26 26"><circle cx="13" cy="13" r="12" fill="#dd4a3a"/><path d="M13,13 L23.4,19 A12,12 0 0 1 2.6,19 Z" fill="#2aa050"/><path d="M13,13 L2.6,19 A12,12 0 0 1 13,1 Z" fill="#2aa050"/><path d="M13,1 A12,12 0 0 1 2.6,7 L13,13 Z" fill="#dd4a3a"/><path d="M13,13 L23.4,7 A12,12 0 0 1 23.4,19 L13,25 A12,12 0 0 1 6.5,23.1 Z" fill="#f8c828"/><path d="M13,13 L23.4,7 A12,12 0 0 0 13,1 L2.6,7 Z" fill="#dd4a3a"/><path d="M13,13 L2.6,7 A12,12 0 0 0 6.5,23.1 Z" fill="#2aa050"/><circle cx="13" cy="13" r="5.6" fill="#fff"/><circle cx="13" cy="13" r="4.4" fill="#3a78e8"/></svg>
<div class="a" style="left:421px;top:689.5px;width:44px;height:30px;background:linear-gradient(160deg,#7a8690,#56626c 45%,#3c4852);border:1px solid rgba(255,255,255,0.22);border-radius:2px;box-shadow:inset 0 0 0 1px rgba(0,0,0,0.25)"></div>
<svg class="a" style="left:430px;top:690px;" width="27" height="27" viewBox="0 0 27 27"><path d="M8,3 Q3,3 3,8 Q2,13 3.5,18 Q3,24 8,24 Q13,25 18,24 Q24,24 24,19 Q25,13 23.5,9 Q24,3 19,3 Q13.5,2 8,3 Z" fill="#1aa0e8"/><text x="13.5" y="19.5" font-family="Liberation Sans" font-size="16" font-weight="bold" text-anchor="middle" fill="#fff">S</text></svg>
<div class="a" style="left:468px;top:689.5px;width:44px;height:30px;background:linear-gradient(160deg,#7a8690,#56626c 45%,#3c4852);border:1px solid rgba(255,255,255,0.22);border-radius:2px;box-shadow:inset 0 0 0 1px rgba(0,0,0,0.25)"></div>
<svg class="a" style="left:477px;top:689px;" width="28" height="28" viewBox="0 0 28 28"><circle cx="13" cy="14" r="11.5" fill="#30a0e0"/><path d="M6,13.5 L20,8 L17.5,20 L13,16.5 L11,19 L10.8,15.5 Z" fill="#fff"/><path d="M10.8,15.5 L17,10.5 L13,16.5" fill="#c8daea"/><rect x="13.5" y="19.5" width="13" height="8" rx="1.5" fill="#e8304a"/><text x="20" y="26" font-family="Liberation Sans" font-size="7" text-anchor="middle" fill="#fff">.82</text></svg>
<div class="a" style="left:515px;top:689.5px;width:44px;height:30px;background:linear-gradient(160deg,#b4bec6,#909ca6 45%,#7a868f);border:1px solid rgba(255,255,255,0.45);border-radius:2px;box-shadow:inset 0 0 0 1px rgba(0,0,0,0.25)"></div>
<svg class="a" style="left:522px;top:690px;" width="29" height="27" viewBox="0 0 29 27"><defs><linearGradient id="adt" x1="0" y1="0" x2="1" y2="1"><stop offset="0" stop-color="#1ae0f0"/><stop offset="1" stop-color="#1a6ae0"/></linearGradient></defs>
<path d="M13.5,2.5 Q14.5,1 16,2.5 L26,20 Q27,23.5 23.5,23.5 L5,23.5 Q1.5,23.5 2.5,20 Z" fill="#0a3a98"/><path d="M14.5,5.5 L24,21 L5,21 Z" fill="url(#adt)"/><path d="M15,6 L9,19 L22,19" fill="none" stroke="#0a2a80" stroke-width="1.2"/></svg>
<div class="t" style="left:1102.0px;top:698.5px;font-size:8.85px;color:#e8eef4;">EN</div>
<svg class="a" style="left:1128px;top:700px;" width="9" height="6" viewBox="0 0 9 6"><path d="M0.5,5.5 L8.5,5.5 L4.5,0.5 Z" fill="#f0f4f8"/></svg>
<svg class="a" style="left:1147px;top:698px;" width="14" height="14" viewBox="0 0 14 14"><path d="M2,1 L2,13" stroke="#c8ccd0" stroke-width="1.2"/><path d="M2.5,1.5 L9,1.5 L9,7.5 L2.5,7.5 Z" fill="#e8eaec"/><circle cx="10" cy="10" r="3.4" fill="#e83030"/><path d="M8.5,8.5 L11.5,11.5 M11.5,8.5 L8.5,11.5" stroke="#fff" stroke-width="1"/></svg>
<svg class="a" style="left:1167px;top:698px;" width="14" height="14" viewBox="0 0 14 14"><rect x="1" y="1" width="5" height="6" fill="#c8ccd0"/><rect x="4" y="4" width="9" height="7" fill="#1a2838" stroke="#c8ccd0" stroke-width="1"/><path d="M1,12.5 L9,12.5" stroke="#c8ccd0" stroke-width="1.2"/><path d="M9,12 L13,9" stroke="#e83030" stroke-width="1.4"/></svg>
<svg class="a" style="left:1187px;top:698px;" width="16" height="14" viewBox="0 0 16 14"><path d="M1,5 L4,5 L8,1.5 L8,12.5 L4,9 L1,9 Z" fill="#e0e4e8"/><path d="M10,4.5 Q11.5,7 10,9.5 M12,3 Q14.5,7 12,11" fill="none" stroke="#c8ccd0" stroke-width="0.9"/></svg>
<div class="t" style="left:1238.6px;transform:translateX(-50%);top:693.8px;font-size:9.11px;color:#e8eef4;">18:49</div>
<div class="t" style="left:1237.6px;transform:translateX(-50%);top:707.2px;font-size:9.19px;color:#e8eef4;">09.04.2018</div>
<div class="a" style="left:1270px;top:690px;width:10px;height:30px;background:linear-gradient(90deg,#2a3a48,#3a4a58);border-left:1px solid #4a5a68"></div>
</body></html>
